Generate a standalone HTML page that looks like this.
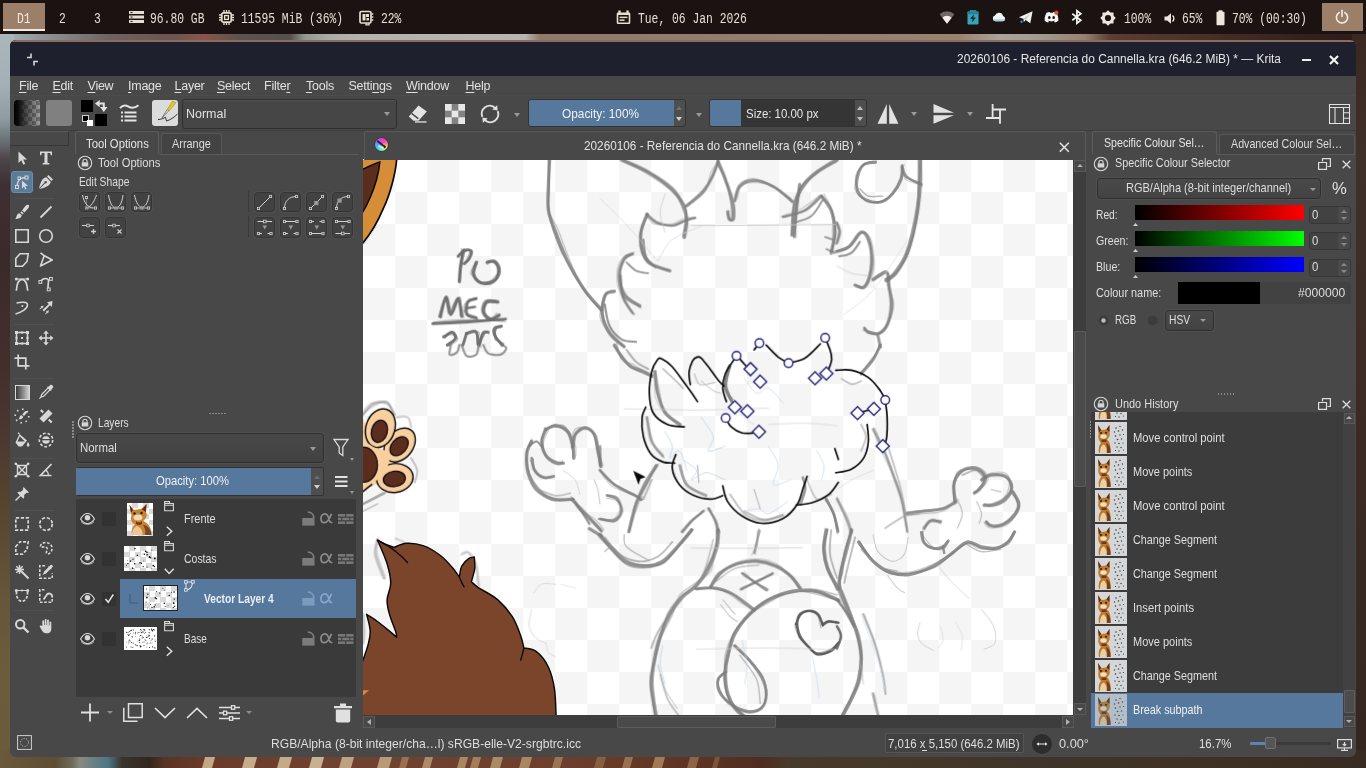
<!DOCTYPE html>
<html>
<head>
<meta charset="utf-8">
<title>Krita</title>
<style>
*{box-sizing:border-box;margin:0;padding:0}
html,body{width:1366px;height:768px;overflow:hidden}
#topbar,#win{will-change:transform}
body{position:relative;background:#3a2a24;font-family:"Liberation Sans",sans-serif;font-size:12px;color:#dedede}
.abs{position:absolute}
svg{position:absolute;overflow:visible}
/* desktop wallpaper pieces */
#wall{position:absolute;left:0;top:0;width:1366px;height:768px;background:#3b2b25}
/* top bar */
#topbar{position:absolute;left:0;top:0;width:1366px;height:34px;background:#1a1311}
.mono{position:absolute;font-family:"Liberation Mono",monospace;font-size:14px;color:#e6ddd3;white-space:pre;transform-origin:0 50%;transform:scaleX(.81);line-height:16px;top:10.500px}
/* window */
#win{position:absolute;left:10px;top:40px;width:1346px;height:717px;background:#484848;border-radius:6px;overflow:hidden}
#titlebar{position:absolute;left:0;top:0;width:1346px;height:36px;background:#1f202e;border-top:2px solid #8a6b5c}
.t{position:absolute;white-space:pre;line-height:16px;font-size:12.500px;letter-spacing:-0.250px}

.menu{position:absolute;top:38px;font-size:12.500px;letter-spacing:-0.250px;line-height:16px;color:#e0e0e0;white-space:pre}
.menu u{text-decoration:underline;text-underline-offset:2px;text-decoration-thickness:1px}
#toolbar{position:absolute;left:0;top:55px;width:1346px;height:36px;border-top:1px solid #4c4c4c}
.tri{position:absolute;width:0;height:0;border-left:3.500px solid transparent;border-right:3.500px solid transparent;border-top:4px solid #9a9a9a}
.combo{position:absolute;background:#464646;border:1px solid #2f2f2f;border-radius:3px;box-shadow:inset 0 1px 0 #535353}
</style>
</head>
<body>
<div id="wall">
  <!-- strip between top bar and window -->
  <div class="abs" style="left:0;top:34px;width:1366px;height:8px;background:linear-gradient(90deg,#aab6bb 0px,#8f979a 40px,#6e625f 110px,#6b5650 170px,#87564b 205px,#5c5250 240px,#54504e 290px,#8f9a92 305px,#a9ada6 330px,#b5b2ab 360px,#b9b5ae 525px,#8f7b6c 540px,#927c6c 683px,#9a8271 960px,#a8a39c 1000px,#a09a92 1040px,#98806f 1085px,#5a3e35 1110px,#4a3029 1200px,#33211d 1300px,#2b1c19 1366px)"></div>
  <!-- left strip -->
  <div class="abs" style="left:0;top:34px;width:14px;height:734px;background:linear-gradient(180deg,#aab6bb 0px,#a3b0b5 50px,#8d9ca2 85px,#6c7479 105px,#4d4549 125px,#3f3033 150px,#3b2a2b 220px,#432e2c 330px,#4b3830 400px,#56452f 470px,#65553a 560px,#6d5c3c 640px,#6b5a3b 734px)"></div>
  <!-- right strip -->
  <div class="abs" style="left:1352px;top:34px;width:14px;height:734px;background:linear-gradient(180deg,#3a2722 0px,#40302a 120px,#3b2a24 400px,#352620 734px)"></div>
  <!-- bottom strip -->
  <div class="abs" style="left:0;top:750px;width:1366px;height:18px;background:linear-gradient(90deg,#6a593a 0px,#5e4d32 55px,#6e6a5c 72px,#8a8a80 80px,#5f7c84 98px,#4e7684 108px,#3a342c 122px,#34261e 150px,#5a3324 165px,#683a27 200px,#704330 330px,#6c402c 560px,#633824 640px,#5c3424 700px,#4e2d20 760px,#483a2a 790px,#44382a 900px,#40352a 1026px,#3e3226 1200px,#382c22 1366px)"></div>
  <svg style="left:0;top:750px" width="1366" height="18" viewBox="0 0 1366 20" preserveAspectRatio="none"><path d="M202 20L207 0H217L212 20z" fill="#dcc8a4" opacity="0.78"/><path d="M242 20L247 0H259L254 20z" fill="#e0cca8" opacity="0.78"/><path d="M277 20L282 0H294L289 20z" fill="#dcc8a4" opacity="0.78"/><path d="M309 20L314 0H326L321 20z" fill="#e2d0ae" opacity="0.78"/><path d="M339 20L344 0H356L351 20z" fill="#d8c29c" opacity="0.74"/><path d="M377 20L382 0H394L389 20z" fill="#d2b890" opacity="0.74"/><path d="M399 20L404 0H411L406 20z" fill="#b8956c" opacity="0.57"/><path d="M422 20L427 0H435L430 20z" fill="#c8aa80" opacity="0.70"/><path d="M457 20L462 0H470L465 20z" fill="#c4a47a" opacity="0.70"/><path d="M470 20L475 0H483L478 20z" fill="#c09e74" opacity="0.66"/><path d="M490 20L495 0H505L500 20z" fill="#c8a880" opacity="0.70"/><path d="M519 20L524 0H534L529 20z" fill="#c4a47a" opacity="0.70"/><path d="M552 20L557 0H565L560 20z" fill="#b8956c" opacity="0.61"/><path d="M594 20L599 0H608L603 20z" fill="#a88460" opacity="0.49"/><path d="M622 20L627 0H635L630 20z" fill="#b8956c" opacity="0.61"/><path d="M652 20L657 0H667L662 20z" fill="#c09e74" opacity="0.66"/><path d="M687 20L692 0H701L696 20z" fill="#b08a64" opacity="0.57"/><path d="M712 20L717 0H722L717 20z" fill="#a07a56" opacity="0.49"/></svg>
</div>
<div id="topbar">
  <div class="abs" style="left:3px;top:3px;width:42px;height:28px;background:#9c7f69;border-bottom:2px solid #f3ece4"></div>
  <span class="mono" style="left:17px;color:#f5e9d8">D1</span>
  <span class="mono" style="left:59px">2</span>
  <span class="mono" style="left:94px">3</span>
  <svg style="left:129px;top:11px" width="15" height="12" viewBox="0 0 15 12"><g fill="#e6ddd3"><rect x="0" y="0" width="15" height="3"/><rect x="0" y="4.5" width="15" height="3"/><rect x="0" y="9" width="15" height="3"/></g><g fill="#1a1311"><rect x="1.5" y="1" width="2" height="1"/><rect x="1.5" y="5.5" width="2" height="1"/><rect x="1.5" y="10" width="2" height="1"/></g></svg>
  <span class="mono" style="left:150px">96.80 GB</span>
  <svg style="left:219px;top:10px" width="15" height="15" viewBox="0 0 15 15"><g fill="none" stroke="#e6ddd3"><rect x="2.8" y="2.8" width="9.4" height="9.4" rx="1.5" stroke-width="1.7"/><rect x="5.6" y="5.6" width="3.8" height="3.8" stroke-width="1.3"/><path d="M5 0v2M7.5 0v2M10 0v2M5 13v2M7.5 13v2M10 13v2M0 5h2M0 7.500h2M0 10h2M13 5h2M13 7.500h2M13 10h2" stroke-width="1.3"/></g></svg>
  <span class="mono" style="left:240.500px">11595 MiB (36%)</span>
  <svg style="left:359px;top:10px" width="15" height="15" viewBox="0 0 15 15"><rect x="1" y="1.500" width="11" height="11.500" rx="1.500" fill="none" stroke="#e6ddd3" stroke-width="1.700"/><rect x="3.500" y="4" width="3" height="6.500" fill="#e6ddd3"/><rect x="7" y="4" width="3" height="3" fill="#e6ddd3"/><rect x="7.500" y="8" width="2.500" height="2.500" fill="#e6ddd3"/><path d="M12.500 4h1.800M12.500 7h1.800M12.500 10h1.800M7 13v1.800h3v-1.800" stroke="#e6ddd3" stroke-width="1.300" fill="none"/></svg>
  <span class="mono" style="left:380.500px">22%</span>
  <svg style="left:616px;top:9.500px" width="15" height="15" viewBox="0 0 15 15"><path d="M2 2.500h11a1.300 1.300 0 0 1 1.300 1.300v9a1.300 1.300 0 0 1-1.300 1.300h-11a1.300 1.300 0 0 1-1.300-1.300v-9a1.300 1.300 0 0 1 1.300-1.300z" fill="#e6ddd3"/><rect x="2.300" y="0.500" width="2.400" height="3" fill="#e6ddd3"/><rect x="10.300" y="0.500" width="2.400" height="3" fill="#e6ddd3"/><rect x="2.300" y="5" width="10.400" height="7.500" fill="#1a1311"/><rect x="3.600" y="6.600" width="7.800" height="1.500" fill="#e6ddd3"/><rect x="3.600" y="9.400" width="5" height="1.500" fill="#e6ddd3"/></svg>
  <span class="mono" style="left:637.500px">Tue, 06 Jan 2026</span>
  <!-- tray icons -->
  <svg style="left:939px;top:9px" width="16" height="16" viewBox="0 0 16 16"><path d="M8 14.800L0.600 5.200A10.500 10.500 0 0 1 15.400 5.200z" fill="#6f6966"/><path d="M8 14.800L3.400 8.800A6.400 6.400 0 0 1 12.600 8.800z" fill="#f2efec"/></svg>
  <svg style="left:967px;top:10px" width="12" height="15" viewBox="0 0 12 15"><rect x="2.800" y="0" width="6.400" height="2.500" fill="#2b7f93"/><rect x="0.500" y="1.600" width="11" height="12.800" rx="0.800" fill="#3aa3bb"/><rect x="0.500" y="1.600" width="11" height="2.600" fill="#2b7f93"/><path d="M6.900 4.300L3 8.800h2.600L4.800 12.600L9 7.600H6.300z" fill="#14272c"/></svg>
  <svg style="left:992px;top:12px" width="14" height="10" viewBox="0 0 14 10"><path d="M3.400 9.200A2.900 2.900 0 0 1 3 3.500A4.200 4.200 0 0 1 11 3.900A2.700 2.700 0 0 1 10.800 9.200z" fill="#f4f6f8"/><path d="M1 7.200A2.900 2.900 0 0 0 3.400 9.200h7.400A2.700 2.700 0 0 0 13.300 7.200z" fill="#a9cdea"/></svg>
  <svg style="left:1018px;top:10.500px" width="15" height="13" viewBox="0 0 15 13"><path d="M0.800 6.300L14.600 0.300L12.300 12.300L7.600 8.900L5.800 11.300L5.400 7.700z" fill="#f1f1f1"/><path d="M5.400 7.700L12.600 2.300L7.600 8.900" fill="#c9c9c9"/><circle cx="3.500" cy="10.800" r="1.200" fill="#3a86e8"/></svg>
  <svg style="left:1044px;top:10.500px" width="15" height="12" viewBox="0 0 15 12"><path d="M2.600 1.800C3.800 1.200 5 0.900 5.600 0.900l0.400 0.800h3l0.400-0.800c0.600 0 1.800 0.300 3 0.900c1.400 2.300 2.200 5 1.900 8c-1.200 1-2.400 1.500-3.500 1.800l-0.800-1.300c0.500-0.200 0.900-0.400 1.300-0.700c-2.400 1.100-5.200 1.100-7.600 0c0.400 0.300 0.800 0.500 1.300 0.700l-0.800 1.300c-1.100-0.300-2.300-0.800-3.500-1.800c-0.300-3 0.500-5.700 1.900-8z" fill="#f4f4f4"/><ellipse cx="5.300" cy="6.600" rx="1.300" ry="1.500" fill="#1a1311"/><ellipse cx="9.700" cy="6.600" rx="1.300" ry="1.500" fill="#1a1311"/><circle cx="12.400" cy="1.700" r="2.100" fill="#e8453c"/></svg>
  <svg style="left:1070.500px;top:10px" width="12" height="14" viewBox="0 0 12 14"><path d="M1.300 3.800L9.800 10.200L5.900 13.300V0.700L9.800 3.800L1.300 10.200" fill="none" stroke="#f4f4f4" stroke-width="1.700" stroke-linejoin="miter"/></svg>
  <svg style="left:1100px;top:9.500px" width="16" height="16" viewBox="0 0 16 16"><path d="M8 0.200L10.300 2.400L13.500 2.500L13.600 5.700L15.800 8L13.600 10.300L13.500 13.500L10.300 13.600L8 15.800L5.700 13.600L2.500 13.500L2.400 10.300L0.200 8L2.400 5.700L2.500 2.500L5.700 2.400z" fill="#ece6df"/><circle cx="8" cy="8" r="3.100" fill="#1a1311"/></svg>
  <svg style="left:1164px;top:12.500px" width="12" height="11" viewBox="0 0 12 11"><path d="M0.500 3.400h2.700L7 0.300v10.400L3.200 7.600H0.500z" fill="#ece6df"/><path d="M8.500 2.500A4 4 0 0 1 8.500 8.500" fill="none" stroke="#ece6df" stroke-width="1.400"/></svg>
  <svg style="left:1216px;top:10px" width="9" height="16" viewBox="0 0 9 16"><rect x="2.500" y="0.300" width="4" height="2" fill="#ece6df"/><rect x="0.500" y="1.800" width="8" height="13.500" rx="0.800" fill="#ece6df"/></svg>
  <span class="mono" style="left:1123.500px">100%</span>
  <span class="mono" style="left:1182px">65%</span>
  <span class="mono" style="left:1231.500px">70% (00:30)</span>
  <div class="abs" style="left:1322px;top:3px;width:41px;height:28px;background:#9c7f69"></div>
  <svg style="left:1334px;top:9px" width="16" height="16" viewBox="0 0 16 16"><path d="M5.200 3.600A5.600 5.600 0 1 0 10.800 3.600" fill="none" stroke="#f5eee6" stroke-width="1.600" stroke-linecap="round"/><path d="M8 1.200v6.300" stroke="#f5eee6" stroke-width="1.600" stroke-linecap="round"/></svg>
</div>
<div id="win">
  <div id="titlebar">
    <svg style="left:16px;top:11px" width="13" height="13" viewBox="0 0 13 13"><path d="M1 4.500h4v-4M12 8.500h-4v4" fill="none" stroke="#d8d8d8" stroke-width="1.600"/></svg>
    <div class="abs" style="left:1291.500px;top:16.500px;width:9px;height:2px;background:#f0f0f0"></div>
    <svg style="left:1319px;top:12.500px" width="10" height="10" viewBox="0 0 10 10"><path d="M1 1L9 9M9 1L1 9" stroke="#f4f4f4" stroke-width="2.200"/></svg>
  </div>
  <!-- menubar -->
  <span class="menu" style="left:9px"><u>F</u>ile</span>
  <span class="menu" style="left:42.500px"><u>E</u>dit</span>
  <span class="menu" style="left:77.500px"><u>V</u>iew</span>
  <span class="menu" style="left:118px"><u>I</u>mage</span>
  <span class="menu" style="left:164.500px"><u>L</u>ayer</span>
  <span class="menu" style="left:207px"><u>S</u>elect</span>
  <span class="menu" style="left:254px">Filte<u>r</u></span>
  <span class="menu" style="left:296px"><u>T</u>ools</span>
  <span class="menu" style="left:338.500px">Setti<u>n</u>gs</span>
  <span class="menu" style="left:396px"><u>W</u>indow</span>
  <span class="menu" style="left:455.500px"><u>H</u>elp</span>
  <div id="toolbar">
    <!-- gradient swatch -->
    <div class="abs" style="left:4px;top:4px;width:26px;height:26px;border-radius:3px;overflow:hidden;background:#9a9a9a">
      <div class="abs" style="left:0;top:0;width:26px;height:26px;background:conic-gradient(#6e6e6e 25%,#9c9c9c 0 50%,#6e6e6e 0 75%,#9c9c9c 0);background-size:8px 8px;background-position:2px 1px"></div>
      <div class="abs" style="left:0;top:0;width:26px;height:26px;background:linear-gradient(90deg,#000 0,#0b0b0b 4px,rgba(20,20,20,.55) 13px,rgba(40,40,40,0) 26px)"></div>
    </div>
    <!-- pattern swatch -->
    <div class="abs" style="left:36px;top:4px;width:26px;height:26px;border-radius:3px;background:#808080"></div>
    <!-- fg/bg -->
    <div class="abs" style="left:71px;top:4px;width:12px;height:12px;background:#000"></div>
    <div class="abs" style="left:85px;top:18px;width:12px;height:12px;background:#000"></div>
    <div class="abs" style="left:71.500px;top:19px;width:7px;height:7px;background:#000;border:1px solid #cfcfcf"></div>
    <div class="abs" style="left:76.500px;top:24px;width:6px;height:6px;background:#fff"></div>
    <svg style="left:84.700px;top:4.200px" width="12.500" height="12.100" viewBox="0 0 12.500 12.100"><path d="M0 3.600L4.700 0V7.200zM5.100 7.100H12.500L8.800 12.100z" fill="#e4e4e4"/><path d="M4.200 3.600H8.800V7.500" fill="none" stroke="#e4e4e4" stroke-width="2"/></svg>
    <!-- brush settings icon -->
    <svg style="left:109px;top:7px" width="21" height="21" viewBox="0 0 21 21"><path d="M1 5.200C4 1.500 6.500 1.800 9.500 3.600S15.500 5.500 19.500 2.200" fill="none" stroke="#e4e4e4" stroke-width="2"/><g fill="#e4e4e4"><rect x="2" y="8.500" width="2" height="2"/><rect x="5.500" y="8.500" width="12" height="2"/><rect x="2" y="12.500" width="2" height="2"/><rect x="5.500" y="12.500" width="12" height="2"/><rect x="2" y="16.500" width="2" height="2"/><rect x="5.500" y="16.500" width="12" height="2"/></g></svg>
    <!-- brush preset -->
    <div class="abs" style="left:142px;top:4px;width:26px;height:26px;border-radius:3px;background:#dcdcdc;overflow:hidden">
      <svg style="left:0;top:0" width="26" height="26" viewBox="0 0 26 26"><path d="M6 19.500C9 19.500 12 18.200 13.500 17.200L14.500 21C18 20 22 17.500 25.500 14" fill="none" stroke="#333" stroke-width="1"/><path d="M10 18L15.200 9.500L17 10.500z" fill="#e9e9e9" stroke="#555" stroke-width="0.700"/><path d="M15.200 9.500L20.500 1L24 2.500L17.200 10.800z" fill="#e2c52c" stroke="#a68d10" stroke-width="0.600"/></svg>
    </div>
    <!-- blend combo -->
    <div class="combo" style="left:172px;top:3px;width:215px;height:30px"></div>
    <div class="tri" style="left:374px;top:16px"></div>
    <!-- eraser -->
    <svg style="left:398px;top:9px" width="20" height="18" viewBox="0 0 20 18"><path d="M10.500 0.500L18.800 6.500L10.500 15.800H5.500L0.800 11.500z" fill="#e4e4e4"/><path d="M3.500 8.400L10.300 13.600" stroke="#484848" stroke-width="1.400"/><rect x="7" y="16.300" width="11.500" height="1.300" fill="#e4e4e4"/></svg>
    <!-- preserve alpha -->
    <div class="abs" style="left:434.500px;top:8px;width:20px;height:20px;background:conic-gradient(#e8e8e8 25%,#828282 0 50%,#e8e8e8 0 75%,#828282 0);background-size:13.330px 13.330px;background-position:6.670px 0"></div>
    <!-- reload -->
    <svg style="left:470px;top:8px" width="20" height="20" viewBox="0 0 20 20"><path d="M2.300 12.800A8 8 0 0 1 15 3.800" fill="none" stroke="#e0e0e0" stroke-width="2"/><path d="M17.700 7.200A8 8 0 0 1 5 16.200" fill="none" stroke="#e0e0e0" stroke-width="2"/><path d="M12.200 5.500L17.200 1.200L17.600 6.500z" fill="#e0e0e0"/><path d="M7.800 14.500L2.800 18.800L2.400 13.500z" fill="#e0e0e0"/></svg>
    <div class="tri" style="left:504px;top:16.500px"></div>
    <!-- opacity slider -->
    <div class="abs" style="left:518px;top:2.500px;width:158px;height:28.500px;border-radius:3px;background:#4e4e4e;border:1px solid #333;overflow:hidden"><div class="abs" style="left:0;top:0;width:145px;height:28px;background:#56789d"></div></div>
    <div class="tri" style="left:666px;top:10px;border-top:none;border-bottom:4px solid #6d6d6d;border-left-width:3px;border-right-width:3px"></div>
    <div class="tri" style="left:666px;top:20.500px;border-top-color:#d0d0d0;border-left-width:3px;border-right-width:3px"></div>
    <div class="tri" style="left:685.500px;top:16.500px"></div>
    <!-- size slider -->
    <div class="abs" style="left:699px;top:2.500px;width:158px;height:28.500px;border-radius:3px;background:#4e4e4e;border:1px solid #333;overflow:hidden"><div class="abs" style="left:0;top:0;width:145px;height:28px;background:#353535"></div><div class="abs" style="left:0;top:0;width:31px;height:28px;background:#56789d"></div></div>
    <div class="tri" style="left:847px;top:10px;border-top:none;border-bottom:4px solid #bdbdbd;border-left-width:3px;border-right-width:3px"></div>
    <div class="tri" style="left:847px;top:20.500px;border-top-color:#bdbdbd;border-left-width:3px;border-right-width:3px"></div>
    <!-- mirror h -->
    <svg style="left:867px;top:8px" width="22" height="20" viewBox="0 0 22 20"><path d="M9.800 0V19.700H0.500zM12.200 0V19.700H21.500z" fill="#e2e2e2"/></svg>
    <div class="tri" style="left:901px;top:15.500px"></div>
    <!-- mirror v -->
    <svg style="left:923px;top:8px" width="22" height="20" viewBox="0 0 22 20"><path d="M0.500 0L21 8.800H0.500zM0.500 19.800L21 11.200H0.500z" fill="#e2e2e2"/></svg>
    <div class="tri" style="left:957px;top:15.500px"></div>
    <!-- wrap -->
    <svg style="left:976px;top:8px" width="20" height="20" viewBox="0 0 20 20"><path d="M6.600 0V14M6.600 5.500H20M14 5.500V19.800M0 14H14" fill="none" stroke="#e6e6e6" stroke-width="1.800"/></svg>
    <!-- workspace -->
    <svg style="left:1318.500px;top:8px" width="21" height="20" viewBox="0 0 21 20"><path d="M0.500 0.500h20v19h-20zM0.500 3.500h20M6 3.500v16M14.500 3.500v16M14.500 8.800h6M14.500 14.200h6" fill="none" stroke="#e2e2e2" stroke-width="1.100"/></svg>
  </div>
  <div id="main" class="abs" style="left:-10px;top:-40px;width:1366px;height:768px">
<!--TOOLBOX-->
<div id="tbline" class="abs" style="left:10px;top:129.500px;width:1346px;height:1px;background:#3e3e3e"></div>
<div class="abs" style="left:363px;top:159.400px;width:710px;height:1px;background:#f8f8f8"></div>
<div id="tbhead" class="abs" style="left:10px;top:130.500px;width:58.500px;height:15px;border-top:1px solid #5a5a5a;border-right:1px solid #363636;border-bottom:1px solid #363636"></div>
<div class="abs" style="left:11px;top:171px;width:22px;height:22px;border-radius:3px;background:#5b7b9b;border:1px solid #6d8cab"></div>
<div class="abs" style="left:14px;top:198px;width:40px;height:1px;background:#515151"></div>
<div class="abs" style="left:14px;top:324px;width:40px;height:1px;background:#515151"></div>
<div class="abs" style="left:14px;top:378px;width:40px;height:1px;background:#515151"></div>
<div class="abs" style="left:14px;top:457.5px;width:40px;height:1px;background:#515151"></div>
<div class="abs" style="left:14px;top:510px;width:40px;height:1px;background:#515151"></div>
<div class="abs" style="left:14px;top:610px;width:40px;height:1px;background:#515151"></div>
<svg style="left:14.0px;top:150.0px" width="16" height="16" viewBox="0 0 16 16"><path d="M4.500 1.500V13L7.300 10.300L9.300 14.700L11.200 13.800L9.200 9.600H13z" fill="#d8d8d8" /></svg>
<svg style="left:38.0px;top:150.0px" width="16" height="16" viewBox="0 0 16 16"><path d="M2 1.500h12v3.800h-1.200l-.600-2.200h-2.700v9.600l1.900.500v1.300h-6.800v-1.300l1.900-.500v-9.600h-2.700l-.600 2.200h-1.200z" fill="#d8d8d8" /></svg>
<svg style="left:14.0px;top:174.0px" width="16" height="16" viewBox="0 0 16 16"><path d="M3 13.500C3 7 5.500 3.500 12.500 3.500" fill="none" stroke="#d8d8d8" stroke-width="1.3" /><g fill="#5b7b9b" stroke="#d8d8d8" stroke-width="1"><rect x="1.500" y="11.500" width="3" height="3"/><rect x="11" y="2" width="3" height="3"/><rect x="4" y="3" width="2.500" height="2.500"/></g><path d="M8 6.500V14.500L10 12.500L11.300 15.500L12.500 15L11.200 12H14z" fill="#d8d8d8" /></svg>
<svg style="left:38.0px;top:174.0px" width="16" height="16" viewBox="0 0 16 16"><path d="M10.500 1L15 5.500L13.500 7L9 2.500zM8.300 3.300L12.700 7.700C12.500 10.500 10 13 1.500 15L7.200 9.300A1.200 1.200 0 1 0 6.500 8.600L1 14.500C3 6 5.500 3.500 8.300 3.300z" fill="#d8d8d8" /></svg>
<svg style="left:14.0px;top:204.0px" width="16" height="16" viewBox="0 0 16 16"><path d="M14.500 1C15.500 1.500 15.300 3 14 4.500L10.500 8.500L8 6.500L11 2.500C12.200 1 13.500 .500 14.500 1zM7.300 7.300L9.700 9.300L8.500 10.500L6.300 8.500zM5.500 9.300L7.800 11.300C7.500 14 4.500 15.300 1 14.800C2.500 13.800 2.300 12.500 3 11C3.500 10 4.500 9.300 5.500 9.300z" fill="#d8d8d8" /></svg>
<svg style="left:38.0px;top:204.0px" width="16" height="16" viewBox="0 0 16 16"><path d="M2.500 13.500L13.500 2.500" fill="none" stroke="#d8d8d8" stroke-width="1.8" /></svg>
<svg style="left:14.0px;top:228.0px" width="16" height="16" viewBox="0 0 16 16"><path d="M1.800 1.800h12.400v12.400h-12.400z" fill="none" stroke="#d8d8d8" stroke-width="1.6" /></svg>
<svg style="left:38.0px;top:228.0px" width="16" height="16" viewBox="0 0 16 16"><circle cx="8" cy="8" r="6.300" fill="none" stroke="#d8d8d8" stroke-width="1.600"/></svg>
<svg style="left:14.0px;top:252.0px" width="16" height="16" viewBox="0 0 16 16"><path d="M1.800 6.500L6 1.800H14.200L13 9.500L8.500 14.200H1.800z" fill="none" stroke="#d8d8d8" stroke-width="1.6" /></svg>
<svg style="left:38.0px;top:252.0px" width="16" height="16" viewBox="0 0 16 16"><path d="M2.500 .800L5.500 3.200L14.200 8L2.500 14L6.300 3.500" fill="none" stroke="#d8d8d8" stroke-width="1.600" stroke-linejoin="round"/></svg>
<svg style="left:14.0px;top:276.0px" width="16" height="16" viewBox="0 0 16 16"><path d="M2.300 14.800C3 5.500 5.500 3.300 8 3.300S13 5.500 13.700 14.800" fill="none" stroke="#d8d8d8" stroke-width="1.700"/><path d="M2.500 3H13.500" stroke="#d8d8d8" stroke-width="1.100"/><circle cx="2.300" cy="3" r="1.500" fill="#d8d8d8"/><circle cx="13.700" cy="3" r="1.500" fill="#d8d8d8"/></svg>
<svg style="left:38.0px;top:276.0px" width="16" height="16" viewBox="0 0 16 16"><path d="M2.500 5.500C5 1.500 11 1.500 10.500 5.500C10 9 9.500 11 10.500 13.500" fill="none" stroke="#d8d8d8" stroke-width="1.7" /><g fill="#484848" stroke="#d8d8d8" stroke-width="1"><rect x="1" y="4.500" width="2.800" height="2.800"/><rect x="11.500" y="1.500" width="2.800" height="2.800"/><rect x="9.300" y="12" width="2.800" height="2.800"/></g></svg>
<svg style="left:14.0px;top:300.0px" width="16" height="16" viewBox="0 0 16 16"><path d="M1.500 14C7 12.500 13.500 9 13.500 5C13.500 1.500 7 2 2.500 3" fill="none" stroke="#d8d8d8" stroke-width="1.5" /><circle cx="8.300" cy="6" r="1" fill="#d8d8d8"/></svg>
<svg style="left:38.0px;top:300.0px" width="16" height="16" viewBox="0 0 16 16"><path d="M14.500 1L13.800 7L12 5.200L6 11.500L4.500 10L10.800 4L9 2.200zM2.500 6.500L5.500 5.500L5 8.500L4.200 7.800L2 9.500L1.500 9L3.200 7.200zM8 11L11 10.500L10 13.500L9.200 12.700L7.500 14.500L7 14L8.700 12z" fill="#d8d8d8" /></svg>
<svg style="left:14.0px;top:330.0px" width="16" height="16" viewBox="0 0 16 16"><path d="M2.500 2.500h11v11h-11z" fill="none" stroke="#d8d8d8" stroke-width="1.5" /><g fill="#d8d8d8"><rect x="1" y="1" width="3" height="3"/><rect x="12" y="1" width="3" height="3"/><rect x="1" y="12" width="3" height="3"/><rect x="12" y="12" width="3" height="3"/><rect x="7" y="7" width="2" height="2"/><rect x="6.700" y="1.500" width="2.600" height="2"/><rect x="6.700" y="12.500" width="2.600" height="2"/><rect x="1.500" y="6.700" width="2" height="2.600"/><rect x="12.500" y="6.700" width="2" height="2.600"/></g></svg>
<svg style="left:38.0px;top:330.0px" width="16" height="16" viewBox="0 0 16 16"><path d="M8 .500L10.800 3.800H8.800V7.200H12.200V5.200L15.500 8L12.200 10.800V8.800H8.800V12.200H10.800L8 15.500L5.200 12.200H7.200V8.800H3.800V10.800L.500 8L3.800 5.200V7.200H7.200V3.800H5.200z" fill="#d8d8d8" /></svg>
<svg style="left:14.0px;top:354.0px" width="16" height="16" viewBox="0 0 16 16"><path d="M4.200 .500V11.800H15.500M.500 4.200H11.800V15.500" fill="none" stroke="#d8d8d8" stroke-width="1.7" /></svg>
<div class="abs" style="left:14.500px;top:384.500px;width:15px;height:15px;border:1.300px solid #d8d8d8;background:linear-gradient(90deg,#3a3a3a,#d0d0d0)"></div>
<svg style="left:38.0px;top:384.0px" width="16" height="16" viewBox="0 0 16 16"><path d="M12.500 .800C13.800 .200 15.800 2.200 15.200 3.500L13.300 5.500L13.800 6L12.800 7L12.200 6.500L6 12.800L3.500 13.500L1.500 15L1 14.500L2.500 12.500L3.200 10L9.500 3.800L9 3.200L10 2.200L10.500 2.700zM10.200 4.800L4.300 10.700L3.800 12.200L5.300 11.700L11.200 5.800z" fill="#d8d8d8" /></svg>
<svg style="left:14.0px;top:408.0px" width="16" height="16" viewBox="0 0 16 16"><path d="M12.500 3C13.300 3.300 13.200 4.300 12.500 5.200L10 8L8.300 6.600L10.500 3.800C11.200 3 12 2.700 12.500 3zM7.600 7.300L9.300 8.700C9.100 10.500 7 11.500 4.500 11.200C5.500 10.500 5.400 9.600 5.800 8.600C6.200 7.800 7 7.300 7.600 7.300z" fill="#d8d8d8" /><circle cx="8" cy="8" r="6.800" fill="none" stroke="#d8d8d8" stroke-width="1.600" stroke-dasharray="1.600 3.700"/></svg>
<svg style="left:38.0px;top:408.0px" width="16" height="16" viewBox="0 0 16 16"><path d="M10.500 1.500L14.500 5.500L5.500 14.500L1.500 10.500z" fill="#d8d8d8" /><path d="M2 2.800L3.500 1.300L6 3.800L4.500 5.300zM10 12.200L11.500 10.700L14.500 13.700L13 15.200z" fill="#d8d8d8" /></svg>
<svg style="left:14.0px;top:432.0px" width="16" height="16" viewBox="0 0 16 16"><path d="M5.500 2L13 8.500L8 14.500H4.500L1.500 10.500zM5.800 4.300L3.500 9.500H10.800z" fill="#d8d8d8" fill-rule="evenodd"/><path d="M5.500 2L4 .800" fill="none" stroke="#d8d8d8" stroke-width="1.3" /><path d="M14 10C15 11.500 15.500 12.500 15.500 13.300A1.400 1.400 0 0 1 12.700 13.300C12.700 12.500 13.200 11.500 14 10z" fill="#d8d8d8" /></svg>
<svg style="left:38.0px;top:432.0px" width="16" height="16" viewBox="0 0 16 16"><circle cx="8" cy="8" r="6.700" fill="none" stroke="#d8d8d8" stroke-width="1.600" stroke-dasharray="2.800 1.900"/><circle cx="8" cy="8" r="3.800" fill="#d8d8d8"/><rect x="4" y="7" width="8" height="1.300" fill="#484848"/></svg>
<svg style="left:14.0px;top:462.0px" width="16" height="16" viewBox="0 0 16 16"><path d="M3.500 3.500h9v9h-9zM1.500 1.500L14.500 14.500M14.500 1.500L1.500 14.500" fill="none" stroke="#d8d8d8" stroke-width="1.4" /><g fill="#d8d8d8"><circle cx="1.800" cy="1.800" r="1.300"/><circle cx="14.200" cy="1.800" r="1.300"/><circle cx="1.800" cy="14.200" r="1.300"/><circle cx="14.200" cy="14.200" r="1.300"/></g></svg>
<svg style="left:38.0px;top:462.0px" width="16" height="16" viewBox="0 0 16 16"><path d="M13.500 2L2.500 13.500H13.500" fill="none" stroke="#d8d8d8" stroke-width="1.7" /><path d="M8 8A7.500 7.500 0 0 1 10.500 13.500" fill="none" stroke="#d8d8d8" stroke-width="1.4" /></svg>
<svg style="left:14.0px;top:486.0px" width="16" height="16" viewBox="0 0 16 16"><path d="M9.500 1L15 6.500L13.800 7L12.500 6.800L10 9.300C10.500 10.800 10.200 12 9.500 12.800L6.800 10.200L2 15L1 14L5.800 9.200L3.200 6.500C4 5.800 5.200 5.500 6.700 6L9.200 3.500L9 2.200z" fill="#d8d8d8" /></svg>
<svg style="left:14.0px;top:516.0px" width="16" height="16" viewBox="0 0 16 16"><path d="M1.800 1.800h12.400v12.400h-12.400z" fill="none" stroke="#d8d8d8" stroke-width="1.7" stroke-dasharray="3.300 1.660"/></svg>
<svg style="left:38.0px;top:516.0px" width="16" height="16" viewBox="0 0 16 16"><circle cx="8" cy="8" r="6.300" fill="none" stroke="#d8d8d8" stroke-width="1.700" stroke-dasharray="3.200 1.750"/></svg>
<svg style="left:14.0px;top:540.0px" width="16" height="16" viewBox="0 0 16 16"><path d="M1.800 6.500L6 1.800H14.200L13 9.500L8.500 14.200H1.800z" fill="none" stroke="#d8d8d8" stroke-width="1.7" stroke-dasharray="3 1.700"/></svg>
<svg style="left:38.0px;top:540.0px" width="16" height="16" viewBox="0 0 16 16"><path d="M2.500 6.500C2 1.500 13.500 .500 14 8C14.300 13 9.500 15 8.500 13.500C7.500 11.500 11 9.500 8.500 7.500C6.500 6 4.500 8 2.500 6.500" fill="none" stroke="#d8d8d8" stroke-width="1.6" stroke-dasharray="2.700 1.600"/></svg>
<svg style="left:14.0px;top:564.0px" width="16" height="16" viewBox="0 0 16 16"><path d="M7 7L14.500 14.500" fill="none" stroke="#d8d8d8" stroke-width="2" /><path d="M5.500 1V10M1 5.500H10M2.300 2.300L8.700 8.700M8.700 2.300L2.300 8.700" fill="none" stroke="#d8d8d8" stroke-width="1.4" /></svg>
<svg style="left:38.0px;top:564.0px" width="16" height="16" viewBox="0 0 16 16"><path d="M7 1.800H1.800V14.200H14.200V9" fill="none" stroke="#d8d8d8" stroke-width="1.6" stroke-dasharray="2.700 1.600"/><path d="M12.800 .800C13.800 .300 15.300 1.800 14.800 2.800L13.300 4.300L13.700 4.700L13 5.400L12.500 5L7.800 9.700L6 10.200L5 11L4.600 10.600L5.400 9.600L5.900 7.800L10.600 3.100L10.200 2.700L10.900 2L11.300 2.400z" fill="#d8d8d8" /></svg>
<svg style="left:14.0px;top:588.0px" width="16" height="16" viewBox="0 0 16 16"><path d="M2.500 3.500C1.500 16.500 14.500 16.500 13.500 3.500" fill="none" stroke="#d8d8d8" stroke-width="1.7" stroke-dasharray="2.800 1.600"/><path d="M2.500 2.500H13.500" fill="none" stroke="#d8d8d8" stroke-width="1.2" /><circle cx="2.300" cy="2.500" r="1.500" fill="#d8d8d8"/><circle cx="13.700" cy="2.500" r="1.500" fill="#d8d8d8"/><circle cx="8" cy="2.500" r="1.100" fill="#d8d8d8"/></svg>
<svg style="left:38.0px;top:588.0px" width="16" height="16" viewBox="0 0 16 16"><path d="M6.500 1.800H1.800V14.200H14.200V10" fill="none" stroke="#d8d8d8" stroke-width="1.6" stroke-dasharray="2.700 1.600"/><path d="M5.500 11.500L9 6.500A3 3 0 0 1 14 9.500" fill="none" stroke="#d8d8d8" stroke-width="1.8" /></svg>
<svg style="left:14.0px;top:618.0px" width="16" height="16" viewBox="0 0 16 16"><circle cx="6.200" cy="6.200" r="4.200" fill="none" stroke="#d8d8d8" stroke-width="2"/><path d="M9.300 9.300L14.500 14.500" fill="none" stroke="#d8d8d8" stroke-width="2.4" /></svg>
<svg style="left:38.0px;top:618.0px" width="16" height="16" viewBox="0 0 16 16"><path d="M4.300 8V3.200A.900 .900 0 0 1 6.100 3.200V7H6.700V1.800A.900 .900 0 0 1 8.500 1.800V7H9.100V2.500A.900 .900 0 0 1 10.900 2.500V7.500H11.500V4.500A.900 .900 0 0 1 13.300 4.500V11C13.300 13.500 11.800 15.200 9.500 15.200H8C6 15.200 5 14.200 3.800 12.200L1.800 8.800A1 1 0 0 1 3.500 7.800z" fill="#d8d8d8" /></svg>
<!--/TOOLBOX-->
<!--LEFTDOCK-->
<div class="abs" style="left:75px;top:131px;width:84px;height:23px;background:#484848;border:1px solid #5c5c5c;border-bottom:none;border-radius:3px 3px 0 0"></div>
<div class="abs" style="left:161px;top:133px;width:61px;height:21px;background:#434343;border:1px solid #575757;border-bottom:none;border-radius:3px 3px 0 0"></div>
<div class="abs" style="left:159px;top:153.5px;width:200px;height:1px;background:#5a5a5a"></div>
<svg style="left:85.7px;top:133.5px" width="62.8" height="20"><text x="0" y="14" font-size="13" fill="#e4e4e4" font-weight="normal" textLength="62.8" lengthAdjust="spacingAndGlyphs">Tool Options</text></svg>
<svg style="left:172.0px;top:133.8px" width="38.8" height="20"><text x="0" y="14" font-size="13" fill="#dcdcdc" font-weight="normal" textLength="38.8" lengthAdjust="spacingAndGlyphs">Arrange</text></svg>
<svg style="left:76.5px;top:155.4px" width="16" height="16" viewBox="0 0 16 16"><circle cx="8" cy="8" r="6.700" fill="none" stroke="#d4d4d4" stroke-width="1.100"/><rect x="4.700" y="7.300" width="6.600" height="4.300" rx=".5" fill="#d4d4d4"/><path d="M5.900 7.500V6.400A2.100 2.100 0 0 1 10.100 6.400V7.500" fill="none" stroke="#d4d4d4" stroke-width="1.100"/></svg>
<svg style="left:98.3px;top:153.2px" width="62.3" height="20"><text x="0" y="14" font-size="13" fill="#dedede" font-weight="normal" textLength="62.3" lengthAdjust="spacingAndGlyphs">Tool Options</text></svg>
<svg style="left:78.6px;top:171.8px" width="50.4" height="20"><text x="0" y="14" font-size="13" fill="#dedede" font-weight="normal" textLength="50.4" lengthAdjust="spacingAndGlyphs">Edit Shape</text></svg>
<div class="abs" style="left:78.5px;top:191.7px;width:21.5px;height:20.5px;background:#424242;border:1px solid #343434;border-radius:3.500px;box-shadow:0 0 0 .6px #555"></div>
<div class="abs" style="left:104.7px;top:191.7px;width:21.5px;height:20.5px;background:#424242;border:1px solid #343434;border-radius:3.500px;box-shadow:0 0 0 .6px #555"></div>
<div class="abs" style="left:130.8px;top:191.7px;width:21.5px;height:20.5px;background:#424242;border:1px solid #343434;border-radius:3.500px;box-shadow:0 0 0 .6px #555"></div>
<svg style="left:78.5px;top:191.7px" width="21.5" height="20.5" viewBox="0 0 21.5 20.5"><path d="M3.500 3C5 10 8 15.500 14.500 16" fill="none" stroke="#d0d0d0" stroke-width="1"/><path d="M17.500 3C15 10 12 14.500 8 16" fill="none" stroke="#d0d0d0" stroke-width="1"/><path d="M7.500 5.500V15M7.500 16H15" stroke="#d0d0d0" stroke-width=".8" stroke-dasharray="1 1"/><rect x="6.4" y="4.4" width="2.2" height="2.2" fill="#424242" stroke="#d0d0d0" stroke-width=".8"/><rect x="15.4" y="14.9" width="2.2" height="2.2" fill="#424242" stroke="#d0d0d0" stroke-width=".8"/><rect x="6" y="14.500" width="3.500" height="3" fill="#999"/></svg>
<svg style="left:104.7px;top:191.7px" width="21.5" height="20.5" viewBox="0 0 21.5 20.5"><path d="M3.500 3C5 12 8 16 10.800 16S17 12 18 3" fill="none" stroke="#d0d0d0" stroke-width="1"/><path d="M4.500 16H17" stroke="#d0d0d0" stroke-width=".8"/><rect x="3.4" y="14.9" width="2.2" height="2.2" fill="#424242" stroke="#d0d0d0" stroke-width=".8"/><rect x="16.4" y="14.9" width="2.2" height="2.2" fill="#424242" stroke="#d0d0d0" stroke-width=".8"/><rect x="9" y="14.500" width="4" height="3" fill="#999"/></svg>
<svg style="left:130.8px;top:191.7px" width="21.5" height="20.5" viewBox="0 0 21.5 20.5"><path d="M3.500 3C5 11 8 15 10.800 15.500C14 15 17 11 18 3" fill="none" stroke="#d0d0d0" stroke-width="1"/><path d="M4.500 16H17" stroke="#d0d0d0" stroke-width=".8"/><rect x="3.4" y="14.9" width="2.2" height="2.2" fill="#424242" stroke="#d0d0d0" stroke-width=".8"/><rect x="16.4" y="14.9" width="2.2" height="2.2" fill="#424242" stroke="#d0d0d0" stroke-width=".8"/><path d="M8.500 17.500L10.800 13.500L13 17.500z" fill="#999"/></svg>
<div class="abs" style="left:78.5px;top:217px;width:21.5px;height:20.5px;background:#424242;border:1px solid #343434;border-radius:3.500px;box-shadow:0 0 0 .6px #555"></div>
<div class="abs" style="left:104.7px;top:217px;width:21.5px;height:20.5px;background:#424242;border:1px solid #343434;border-radius:3.500px;box-shadow:0 0 0 .6px #555"></div>
<svg style="left:78.5px;top:217px" width="21.5" height="20.5" viewBox="0 0 21.5 20.5"><path d="M3 8.500H15" stroke="#d0d0d0" stroke-width="1"/><rect x="7.7" y="7.2" width="2.6" height="2.6" fill="#424242" stroke="#d0d0d0" stroke-width=".8"/><path d="M12 14.500h5M14.500 12v5" stroke="#d0d0d0" stroke-width="1.300"/></svg>
<svg style="left:104.7px;top:217px" width="21.5" height="20.5" viewBox="0 0 21.5 20.5"><path d="M3 8.500H15" stroke="#d0d0d0" stroke-width="1"/><rect x="7.7" y="7.2" width="2.6" height="2.6" fill="#424242" stroke="#d0d0d0" stroke-width=".8"/><path d="M12.500 12.500l4 4M16.500 12.500l-4 4" stroke="#d0d0d0" stroke-width="1.100"/></svg>
<div class="abs" style="left:248px;top:191px;width:1px;height:21px;background:#3a3a3a"></div>
<div class="abs" style="left:248px;top:216px;width:1px;height:21px;background:#3a3a3a"></div>
<div class="abs" style="left:253.7px;top:191.7px;width:21.5px;height:20.5px;background:#424242;border:1px solid #343434;border-radius:3.500px;box-shadow:0 0 0 .6px #555"></div>
<div class="abs" style="left:253.7px;top:217px;width:21.5px;height:20.5px;background:#424242;border:1px solid #343434;border-radius:3.500px;box-shadow:0 0 0 .6px #555"></div>
<div class="abs" style="left:279.6px;top:191.7px;width:21.5px;height:20.5px;background:#424242;border:1px solid #343434;border-radius:3.500px;box-shadow:0 0 0 .6px #555"></div>
<div class="abs" style="left:279.6px;top:217px;width:21.5px;height:20.5px;background:#424242;border:1px solid #343434;border-radius:3.500px;box-shadow:0 0 0 .6px #555"></div>
<div class="abs" style="left:305.6px;top:191.7px;width:21.5px;height:20.5px;background:#424242;border:1px solid #343434;border-radius:3.500px;box-shadow:0 0 0 .6px #555"></div>
<div class="abs" style="left:305.6px;top:217px;width:21.5px;height:20.5px;background:#424242;border:1px solid #343434;border-radius:3.500px;box-shadow:0 0 0 .6px #555"></div>
<div class="abs" style="left:331.6px;top:191.7px;width:21.5px;height:20.5px;background:#424242;border:1px solid #343434;border-radius:3.500px;box-shadow:0 0 0 .6px #555"></div>
<div class="abs" style="left:331.6px;top:217px;width:21.5px;height:20.5px;background:#424242;border:1px solid #343434;border-radius:3.500px;box-shadow:0 0 0 .6px #555"></div>
<svg style="left:253.7px;top:191.7px" width="21.5" height="20.5" viewBox="0 0 21.5 20.5"><path d="M4.500 16.500L16.500 4.500" stroke="#d0d0d0" stroke-width="1"/><rect x="3.4" y="15.4" width="2.2" height="2.2" fill="#424242" stroke="#d0d0d0" stroke-width=".8"/><rect x="15.4" y="3.4" width="2.2" height="2.2" fill="#424242" stroke="#d0d0d0" stroke-width=".8"/></svg>
<svg style="left:279.6px;top:191.7px" width="21.5" height="20.5" viewBox="0 0 21.5 20.5"><path d="M4.500 16.500C4.500 9 9 4.500 16.500 4.500" fill="none" stroke="#d0d0d0" stroke-width="1"/><rect x="3.4" y="15.4" width="2.2" height="2.2" fill="#424242" stroke="#d0d0d0" stroke-width=".8"/><rect x="15.4" y="3.4" width="2.2" height="2.2" fill="#424242" stroke="#d0d0d0" stroke-width=".8"/></svg>
<svg style="left:305.6px;top:191.7px" width="21.5" height="20.5" viewBox="0 0 21.5 20.5"><path d="M4.500 16.500L16.500 4.500" stroke="#d0d0d0" stroke-width="1"/><rect x="3.4" y="15.4" width="2.2" height="2.2" fill="#424242" stroke="#d0d0d0" stroke-width=".8"/><rect x="15.4" y="3.4" width="2.2" height="2.2" fill="#424242" stroke="#d0d0d0" stroke-width=".8"/><rect x="8.200" y="9" width="4.200" height="4.200" fill="#999"/></svg>
<svg style="left:331.6px;top:191.7px" width="21.5" height="20.5" viewBox="0 0 21.5 20.5"><path d="M4.500 16.500C4.500 9 9 4.500 16.500 4.500" fill="none" stroke="#d0d0d0" stroke-width="1"/><rect x="3.4" y="15.4" width="2.2" height="2.2" fill="#424242" stroke="#d0d0d0" stroke-width=".8"/><rect x="15.4" y="3.4" width="2.2" height="2.2" fill="#424242" stroke="#d0d0d0" stroke-width=".8"/><rect x="5.500" y="6.500" width="4.200" height="4.200" fill="#999"/></svg>
<svg style="left:253.7px;top:217px" width="21.5" height="20.5" viewBox="0 0 21.5 20.5"><path d="M3.500 4.5H18" stroke="#d0d0d0" stroke-width="1"/><rect x="9.5" y="3.2" width="2.6" height="2.6" fill="#424242" stroke="#d0d0d0" stroke-width=".8"/><path d="M8.500 8.500h4.600L10.800 12.500z" fill="#999"/><path d="M4.500 16.5H8M13.500 16.5H17" stroke="#d0d0d0" stroke-width="1"/><rect x="3.4" y="15.4" width="2.2" height="2.2" fill="#424242" stroke="#d0d0d0" stroke-width=".8"/><rect x="15.9" y="15.4" width="2.2" height="2.2" fill="#424242" stroke="#d0d0d0" stroke-width=".8"/></svg>
<svg style="left:279.6px;top:217px" width="21.5" height="20.5" viewBox="0 0 21.5 20.5"><path d="M4.500 4.5H17" stroke="#d0d0d0" stroke-width="1"/><rect x="3.4" y="3.4" width="2.2" height="2.2" fill="#424242" stroke="#d0d0d0" stroke-width=".8"/><rect x="15.9" y="3.4" width="2.2" height="2.2" fill="#424242" stroke="#d0d0d0" stroke-width=".8"/><path d="M8.500 8.500h4.600L10.800 12.500z" fill="#999"/><path d="M4.500 16.5H8M13.500 16.5H17" stroke="#d0d0d0" stroke-width="1"/><rect x="3.4" y="15.4" width="2.2" height="2.2" fill="#424242" stroke="#d0d0d0" stroke-width=".8"/><rect x="15.9" y="15.4" width="2.2" height="2.2" fill="#424242" stroke="#d0d0d0" stroke-width=".8"/></svg>
<svg style="left:305.6px;top:217px" width="21.5" height="20.5" viewBox="0 0 21.5 20.5"><path d="M4.500 4.5H8M13.500 4.5H17" stroke="#d0d0d0" stroke-width="1"/><rect x="3.4" y="3.4" width="2.2" height="2.2" fill="#424242" stroke="#d0d0d0" stroke-width=".8"/><rect x="15.9" y="3.4" width="2.2" height="2.2" fill="#424242" stroke="#d0d0d0" stroke-width=".8"/><path d="M8.500 8.500h4.600L10.800 12.500z" fill="#999"/><path d="M4.500 16.5H17" stroke="#d0d0d0" stroke-width="1"/><rect x="3.4" y="15.4" width="2.2" height="2.2" fill="#424242" stroke="#d0d0d0" stroke-width=".8"/><rect x="15.9" y="15.4" width="2.2" height="2.2" fill="#424242" stroke="#d0d0d0" stroke-width=".8"/></svg>
<svg style="left:331.6px;top:217px" width="21.5" height="20.5" viewBox="0 0 21.5 20.5"><path d="M4.500 4.5H17" stroke="#d0d0d0" stroke-width="1"/><rect x="3.4" y="3.4" width="2.2" height="2.2" fill="#424242" stroke="#d0d0d0" stroke-width=".8"/><rect x="15.9" y="3.4" width="2.2" height="2.2" fill="#424242" stroke="#d0d0d0" stroke-width=".8"/><path d="M8.500 8.500h4.600L10.800 12.500z" fill="#999"/><path d="M3.500 16.5H18" stroke="#d0d0d0" stroke-width="1"/><rect x="9.5" y="15.2" width="2.6" height="2.6" fill="#424242" stroke="#d0d0d0" stroke-width=".8"/></svg>
<div class="abs" style="left:209px;top:412.5px;width:17px;height:1.5px;background:repeating-linear-gradient(90deg,#8a8a8a 0,#8a8a8a 1.500px,transparent 1.500px,transparent 3px)"></div>
<div class="abs" style="left:72px;top:421px;width:1.5px;height:18px;background:repeating-linear-gradient(180deg,#8a8a8a 0,#8a8a8a 1.500px,transparent 1.500px,transparent 3px)"></div>
<svg style="left:76.5px;top:415.2px" width="16" height="16" viewBox="0 0 16 16"><circle cx="8" cy="8" r="6.700" fill="none" stroke="#d4d4d4" stroke-width="1.100"/><rect x="4.700" y="7.300" width="6.600" height="4.300" rx=".5" fill="#d4d4d4"/><path d="M5.900 7.500V6.400A2.100 2.100 0 0 1 10.100 6.400V7.500" fill="none" stroke="#d4d4d4" stroke-width="1.100"/></svg>
<svg style="left:98.3px;top:413.0px" width="30.7" height="20"><text x="0" y="14" font-size="13" fill="#dedede" font-weight="normal" textLength="30.7" lengthAdjust="spacingAndGlyphs">Layers</text></svg>
<div class="abs" style="left:76px;top:433px;width:247.5px;height:30px;background:linear-gradient(#484848,#424242);border:1px solid #2e2e2e;border-radius:3.500px;box-shadow:0 0 0 .6px #585858"></div>
<svg style="left:80.0px;top:437.8px" width="36.8" height="20"><text x="0" y="14" font-size="13" fill="#dedede" font-weight="normal" textLength="36.8" lengthAdjust="spacingAndGlyphs">Normal</text></svg>
<div class="tri" style="left:309.500px;top:446.500px"></div>
<svg style="left:333px;top:438px" width="16" height="20" viewBox="0 0 16 20"><path d="M1 1.500H15L9.800 9V17.500L6.200 15V9z" fill="none" stroke="#dcdcdc" stroke-width="1.300"/></svg>
<div class="tri" style="left:350px;top:457.500px;border-left-width:2.500px;border-right-width:2.500px;border-top-width:3px"></div>
<div class="abs" style="left:76px;top:467px;width:247.5px;height:28.5px;background:#4e4e4e;border:1px solid #333;border-radius:2px;overflow:hidden"></div>
<div class="abs" style="left:76px;top:467.5px;width:234.5px;height:27.5px;background:#56789d"></div>
<svg style="left:156.3px;top:470.7px" width="73.1" height="20"><text x="0" y="14" font-size="13" fill="#f0f0f0" font-weight="normal" textLength="73.1" lengthAdjust="spacingAndGlyphs">Opacity:  100%</text></svg>
<div class="tri" style="left:313.500px;top:474.500px;border-top:none;border-bottom:4px solid #6b6b6b;border-left-width:3px;border-right-width:3px"></div>
<div class="tri" style="left:313.500px;top:485px;border-top-color:#cfcfcf;border-left-width:3px;border-right-width:3px"></div>
<svg style="left:335px;top:476px" width="13" height="11" viewBox="0 0 13 11"><path d="M0 1h12.500M0 5.500h12.500M0 10h12.500" stroke="#e2e2e2" stroke-width="1.800"/></svg>
<div class="tri" style="left:350px;top:490.500px;border-left-width:2.500px;border-right-width:2.500px;border-top-width:3px"></div>
<div class="abs" style="left:76px;top:498.5px;width:280px;height:198.5px;background:#3a3a3a"></div>
<div class="abs" style="left:120px;top:579px;width:236px;height:38.5px;background:#56789d"></div>
<svg style="left:79.7px;top:512px" width="15" height="14" viewBox="0 0 15 14"><path d="M.5 7C3 2.500 5.500 1.500 7.500 1.500S12 2.500 14.500 7C12 10.500 9.500 11.500 7.500 11.500S3 10.500 .5 7z" fill="none" stroke="#d9d9d9" stroke-width="1.100"/><circle cx="7.500" cy="5.800" r="2.700" fill="#d9d9d9"/><path d="M1 9.500C4 13.200 11 13.200 14 9.500" fill="none" stroke="#d9d9d9" stroke-width=".9"/></svg>
<div class="abs" style="left:102.3px;top:511.5px;width:14px;height:14px;background:#323232;border-radius:1px"></div>
<svg style="left:301.6px;top:510.5px" width="13" height="15" viewBox="0 0 13 15"><rect x="0.300" y="7" width="12.200" height="7.600" fill="#7c7c7c"/><path d="M5.800 1.200C9.500 1 11.800 3.500 11.800 7.500" fill="none" stroke="#7c7c7c" stroke-width="1.700"/></svg>
<svg style="left:320px;top:513.3px" width="13" height="11" viewBox="0 0 13 11"><path d="M11.500 .800C10 4.500 8 9.700 4.600 9.700C2.200 9.700 .900 7.800 .900 5.600C.900 2.800 2.600 .900 5 .900C7.800 .900 8.800 4.800 9.400 7.500C9.800 9.200 10.600 9.800 12.300 9.400" fill="none" stroke="#8c8c8c" stroke-width="1.700"/></svg>
<svg style="left:337.6px;top:514px" width="15.5" height="10" viewBox="0 0 15.5 10"><g fill="#777"><rect x="0" y="0" width="7.200" height="2.600"/><rect x="8.300" y="0" width="7.200" height="2.600"/><rect x="0" y="3.700" width="3.200" height="2.600"/><rect x="4.200" y="3.700" width="7.200" height="2.600"/><rect x="12.300" y="3.700" width="3.200" height="2.600"/><rect x="0" y="7.400" width="7.200" height="2.600"/><rect x="8.300" y="7.400" width="7.200" height="2.600"/></g></svg>
<svg style="left:79.7px;top:552px" width="15" height="14" viewBox="0 0 15 14"><path d="M.5 7C3 2.500 5.500 1.500 7.500 1.500S12 2.500 14.500 7C12 10.500 9.500 11.500 7.500 11.500S3 10.500 .5 7z" fill="none" stroke="#d9d9d9" stroke-width="1.100"/><circle cx="7.500" cy="5.800" r="2.700" fill="#d9d9d9"/><path d="M1 9.500C4 13.200 11 13.200 14 9.500" fill="none" stroke="#d9d9d9" stroke-width=".9"/></svg>
<div class="abs" style="left:102.3px;top:551.5px;width:14px;height:14px;background:#323232;border-radius:1px"></div>
<svg style="left:301.6px;top:550.5px" width="13" height="15" viewBox="0 0 13 15"><rect x="0.300" y="7" width="12.200" height="7.600" fill="#7c7c7c"/><path d="M5.800 1.200C9.500 1 11.800 3.500 11.800 7.500" fill="none" stroke="#7c7c7c" stroke-width="1.700"/></svg>
<svg style="left:320px;top:553.3px" width="13" height="11" viewBox="0 0 13 11"><path d="M11.500 .800C10 4.500 8 9.700 4.600 9.700C2.200 9.700 .900 7.800 .900 5.600C.900 2.800 2.600 .900 5 .900C7.800 .900 8.800 4.800 9.400 7.500C9.800 9.200 10.600 9.800 12.300 9.400" fill="none" stroke="#8c8c8c" stroke-width="1.700"/></svg>
<svg style="left:337.6px;top:554px" width="15.5" height="10" viewBox="0 0 15.5 10"><g fill="#777"><rect x="0" y="0" width="7.200" height="2.600"/><rect x="8.300" y="0" width="7.200" height="2.600"/><rect x="0" y="3.700" width="3.200" height="2.600"/><rect x="4.200" y="3.700" width="7.200" height="2.600"/><rect x="12.300" y="3.700" width="3.200" height="2.600"/><rect x="0" y="7.400" width="7.200" height="2.600"/><rect x="8.300" y="7.400" width="7.200" height="2.600"/></g></svg>
<svg style="left:79.7px;top:592px" width="15" height="14" viewBox="0 0 15 14"><path d="M.5 7C3 2.500 5.500 1.500 7.500 1.500S12 2.500 14.500 7C12 10.500 9.500 11.500 7.500 11.500S3 10.500 .5 7z" fill="none" stroke="#d9d9d9" stroke-width="1.100"/><circle cx="7.500" cy="5.800" r="2.700" fill="#d9d9d9"/><path d="M1 9.500C4 13.200 11 13.200 14 9.500" fill="none" stroke="#d9d9d9" stroke-width=".9"/></svg>
<div class="abs" style="left:102.3px;top:591.5px;width:14px;height:14px;background:#323232;border-radius:1px"></div>
<svg style="left:301.6px;top:590.5px" width="13" height="15" viewBox="0 0 13 15"><rect x="0.300" y="7" width="12.200" height="7.600" fill="#7d9cbd"/><path d="M5.800 1.200C9.500 1 11.800 3.500 11.800 7.500" fill="none" stroke="#7d9cbd" stroke-width="1.700"/></svg>
<svg style="left:320px;top:593.3px" width="13" height="11" viewBox="0 0 13 11"><path d="M11.500 .800C10 4.500 8 9.700 4.600 9.700C2.200 9.700 .900 7.800 .900 5.600C.900 2.800 2.600 .900 5 .900C7.800 .900 8.800 4.800 9.400 7.500C9.800 9.200 10.600 9.800 12.300 9.400" fill="none" stroke="#8aa7c6" stroke-width="1.700"/></svg>
<svg style="left:79.7px;top:632px" width="15" height="14" viewBox="0 0 15 14"><path d="M.5 7C3 2.500 5.500 1.500 7.500 1.500S12 2.500 14.500 7C12 10.500 9.500 11.500 7.500 11.500S3 10.500 .5 7z" fill="none" stroke="#d9d9d9" stroke-width="1.100"/><circle cx="7.500" cy="5.800" r="2.700" fill="#d9d9d9"/><path d="M1 9.500C4 13.200 11 13.200 14 9.500" fill="none" stroke="#d9d9d9" stroke-width=".9"/></svg>
<div class="abs" style="left:102.3px;top:631.5px;width:14px;height:14px;background:#323232;border-radius:1px"></div>
<svg style="left:301.6px;top:630.5px" width="13" height="15" viewBox="0 0 13 15"><rect x="0.300" y="7" width="12.200" height="7.600" fill="#7c7c7c"/><path d="M5.800 1.200C9.500 1 11.800 3.500 11.800 7.500" fill="none" stroke="#7c7c7c" stroke-width="1.700"/></svg>
<svg style="left:320px;top:633.3px" width="13" height="11" viewBox="0 0 13 11"><path d="M11.500 .800C10 4.500 8 9.700 4.600 9.700C2.200 9.700 .900 7.800 .900 5.600C.900 2.800 2.600 .900 5 .900C7.800 .900 8.800 4.800 9.400 7.500C9.800 9.200 10.600 9.800 12.300 9.400" fill="none" stroke="#8c8c8c" stroke-width="1.700"/></svg>
<svg style="left:337.6px;top:634px" width="15.5" height="10" viewBox="0 0 15.5 10"><g fill="#777"><rect x="0" y="0" width="7.200" height="2.600"/><rect x="8.300" y="0" width="7.200" height="2.600"/><rect x="0" y="3.700" width="3.200" height="2.600"/><rect x="4.200" y="3.700" width="7.200" height="2.600"/><rect x="12.300" y="3.700" width="3.200" height="2.600"/><rect x="0" y="7.400" width="7.200" height="2.600"/><rect x="8.300" y="7.400" width="7.200" height="2.600"/></g></svg>
<svg style="left:104px;top:593px" width="11" height="11" viewBox="0 0 11 11"><path d="M1.500 6L4.200 9.300L9.300 1.500" fill="none" stroke="#e8e8e8" stroke-width="1.500"/></svg>
<svg style="left:129px;top:594px" width="10" height="10" viewBox="0 0 10 10"><path d="M1 0V9H9" fill="none" stroke="#415a78" stroke-width="1.100"/></svg>
<div class="abs" style="left:126.700px;top:502.700px;width:26.500px;height:33.300px;background:conic-gradient(#d9d9d9 25%,#fff 0 50%,#d9d9d9 0 75%,#fff 0);background-size:11px 11px;overflow:hidden"><svg style="left:0;top:0" width="26.500" height="33.300" viewBox="0 0 26.500 33.300"><path d="M2.500 2L7 7L14 6L19.500 1L19 9C21 12 19 16 16 18C22 20 25 26 24.500 32H5C4 28 5 24 8 22C5 20 3 17 4.500 13z" fill="#c8842e"/><path d="M5 32C5 27 7 24 10 23C13 24 16 27 15.500 32z" fill="#e9c79a"/><path d="M16 22C20 22 24 26 24.500 32H18C19 28 18 25 16 22z" fill="#7a4426"/><path d="M2.500 2L6 7L4 10zM19.500 1L15 6.500L19 9z" fill="#5a2f1a"/><ellipse cx="11" cy="14.500" rx="4.500" ry="3" fill="#f0d9b8"/><circle cx="7.500" cy="10.500" r="1.200" fill="#2a1a10"/><circle cx="14.500" cy="10" r="1.200" fill="#2a1a10"/><path d="M9 18c2 2 4 2 6 0v3c-2 1.500-4 1.500-6 0z" fill="#6b3a20"/></svg></div>
<div class="abs" style="left:123.800px;top:546.400px;width:33.400px;height:24.600px;background:conic-gradient(#d9d9d9 25%,#fff 0 50%,#d9d9d9 0 75%,#fff 0);background-size:11px 11px;overflow:hidden"><svg style="left:0;top:0" width="33.400" height="24.600"><g fill="#111"><circle cx="9.0" cy="13.2" r="0.6"/><circle cx="19.8" cy="14.9" r="0.4"/><circle cx="2.4" cy="19.3" r="0.5"/><circle cx="8.9" cy="22.5" r="0.6"/><circle cx="26.6" cy="11.8" r="0.7"/><circle cx="6.4" cy="15.1" r="0.8"/><circle cx="17.4" cy="17.3" r="0.7"/><circle cx="3.9" cy="17.6" r="0.7"/><circle cx="10.9" cy="2.6" r="0.8"/><circle cx="15.9" cy="16.8" r="0.8"/><circle cx="23.0" cy="21.0" r="0.6"/><circle cx="25.5" cy="11.2" r="0.9"/><circle cx="27.8" cy="4.0" r="0.5"/><circle cx="8.4" cy="21.9" r="0.6"/><circle cx="20.4" cy="8.2" r="0.7"/><circle cx="13.3" cy="9.2" r="0.7"/><circle cx="19.2" cy="20.6" r="0.7"/><circle cx="29.3" cy="19.6" r="0.9"/><circle cx="21.7" cy="5.4" r="0.8"/><circle cx="30.4" cy="20.6" r="0.7"/><circle cx="23.0" cy="6.3" r="0.8"/><circle cx="18.9" cy="7.9" r="0.4"/><circle cx="27.1" cy="22.4" r="0.4"/><circle cx="25.5" cy="10.5" r="0.5"/><circle cx="10.6" cy="17.8" r="0.8"/><circle cx="3.3" cy="14.7" r="0.4"/><circle cx="23.1" cy="8.8" r="0.8"/><circle cx="30.8" cy="12.4" r="0.9"/></g></svg></div>
<div class="abs" style="left:143.300px;top:585.300px;width:34.300px;height:26px;background:conic-gradient(#d9d9d9 25%,#fff 0 50%,#d9d9d9 0 75%,#fff 0);background-size:11px 11px;border:1px solid #222;overflow:hidden"><svg style="left:0;top:0" width="33.400" height="24.600"><g fill="#111"><circle cx="20.3" cy="17.3" r="0.8"/><circle cx="29.7" cy="17.2" r="0.9"/><circle cx="2.9" cy="11.6" r="0.9"/><circle cx="21.1" cy="20.6" r="0.5"/><circle cx="15.8" cy="7.1" r="0.7"/><circle cx="18.9" cy="2.3" r="0.5"/><circle cx="10.2" cy="20.9" r="0.8"/><circle cx="6.7" cy="18.4" r="0.5"/><circle cx="20.2" cy="4.6" r="0.4"/><circle cx="27.6" cy="6.3" r="0.5"/><circle cx="30.9" cy="20.0" r="0.5"/><circle cx="30.3" cy="13.1" r="0.7"/><circle cx="8.0" cy="21.4" r="0.7"/><circle cx="30.4" cy="20.4" r="0.5"/><circle cx="12.6" cy="5.4" r="0.5"/><circle cx="3.9" cy="8.2" r="0.7"/><circle cx="2.1" cy="16.0" r="0.6"/><circle cx="11.1" cy="18.9" r="0.6"/><circle cx="11.3" cy="11.9" r="0.8"/><circle cx="3.7" cy="22.1" r="0.4"/><circle cx="24.0" cy="19.4" r="0.4"/><circle cx="25.2" cy="9.5" r="0.7"/><circle cx="2.3" cy="3.0" r="0.5"/><circle cx="30.1" cy="6.0" r="0.8"/><circle cx="29.3" cy="21.4" r="0.6"/><circle cx="12.4" cy="12.8" r="0.8"/></g></svg></div>
<div class="abs" style="left:123.800px;top:627.200px;width:33.400px;height:23px;background:#fff;overflow:hidden"><svg style="left:0;top:0" width="33.400" height="23"><g fill="#111"><circle cx="15.6" cy="9.1" r="0.4"/><circle cx="27.5" cy="2.1" r="0.5"/><circle cx="28.4" cy="3.5" r="0.5"/><circle cx="20.1" cy="2.8" r="0.5"/><circle cx="22.7" cy="10.6" r="0.5"/><circle cx="6.6" cy="6.5" r="0.4"/><circle cx="16.9" cy="19.6" r="0.5"/><circle cx="24.8" cy="9.3" r="0.5"/><circle cx="5.0" cy="7.5" r="0.5"/><circle cx="23.3" cy="10.0" r="0.4"/><circle cx="9.8" cy="6.0" r="0.4"/><circle cx="25.8" cy="5.8" r="0.5"/><circle cx="27.9" cy="3.0" r="0.5"/><circle cx="16.5" cy="2.4" r="0.5"/><circle cx="28.6" cy="4.1" r="0.5"/><circle cx="5.6" cy="13.0" r="0.5"/><circle cx="8.0" cy="2.2" r="0.4"/><circle cx="17.9" cy="2.3" r="0.4"/><circle cx="16.6" cy="19.5" r="0.5"/><circle cx="13.7" cy="14.1" r="0.4"/><circle cx="19.0" cy="5.3" r="0.5"/><circle cx="30.2" cy="3.0" r="0.5"/><circle cx="19.8" cy="4.8" r="0.4"/><circle cx="31.2" cy="21.0" r="0.4"/><circle cx="22.7" cy="20.1" r="0.4"/><circle cx="20.0" cy="2.8" r="0.5"/><circle cx="21.8" cy="13.2" r="0.5"/><circle cx="4.6" cy="8.6" r="0.5"/><circle cx="19.2" cy="10.6" r="0.5"/><circle cx="31.0" cy="12.9" r="0.4"/><circle cx="25.5" cy="8.2" r="0.5"/><circle cx="8.3" cy="10.4" r="0.4"/><circle cx="4.6" cy="14.0" r="0.4"/><circle cx="25.1" cy="2.5" r="0.5"/><circle cx="25.7" cy="11.4" r="0.5"/><circle cx="9.3" cy="16.0" r="0.5"/><circle cx="8.8" cy="20.3" r="0.5"/><circle cx="13.0" cy="18.3" r="0.5"/><circle cx="21.6" cy="5.3" r="0.5"/><circle cx="9.6" cy="3.0" r="0.5"/><circle cx="7.1" cy="20.0" r="0.5"/><circle cx="19.8" cy="2.2" r="0.4"/><circle cx="8.1" cy="9.4" r="0.5"/><circle cx="30.4" cy="8.7" r="0.4"/><circle cx="18.5" cy="4.6" r="0.4"/><circle cx="18.3" cy="15.2" r="0.4"/><circle cx="15.3" cy="15.4" r="0.5"/><circle cx="13.3" cy="18.9" r="0.4"/><circle cx="23.0" cy="16.7" r="0.5"/><circle cx="16.5" cy="3.9" r="0.4"/><circle cx="17.5" cy="5.3" r="0.5"/><circle cx="4.5" cy="16.8" r="0.4"/><circle cx="2.4" cy="5.3" r="0.5"/><circle cx="18.4" cy="9.4" r="0.4"/><circle cx="16.2" cy="20.0" r="0.5"/><circle cx="29.7" cy="2.5" r="0.5"/><circle cx="28.1" cy="12.3" r="0.5"/><circle cx="17.8" cy="19.3" r="0.4"/><circle cx="20.9" cy="12.3" r="0.4"/><circle cx="23.3" cy="15.7" r="0.4"/><circle cx="22.6" cy="10.6" r="0.5"/><circle cx="20.7" cy="3.0" r="0.5"/><circle cx="13.0" cy="18.7" r="0.4"/><circle cx="26.2" cy="15.9" r="0.5"/><circle cx="27.7" cy="2.7" r="0.5"/><circle cx="20.0" cy="14.9" r="0.5"/><circle cx="4.0" cy="5.6" r="0.5"/><circle cx="7.3" cy="3.2" r="0.5"/><circle cx="15.8" cy="12.2" r="0.4"/><circle cx="24.8" cy="8.3" r="0.5"/><circle cx="2.3" cy="20.1" r="0.5"/><circle cx="30.7" cy="20.7" r="0.5"/><circle cx="5.1" cy="8.6" r="0.4"/><circle cx="24.9" cy="5.7" r="0.4"/><circle cx="5.3" cy="4.3" r="0.5"/><circle cx="30.7" cy="9.1" r="0.5"/><circle cx="15.7" cy="11.9" r="0.5"/><circle cx="20.7" cy="6.5" r="0.4"/><circle cx="17.2" cy="5.7" r="0.5"/><circle cx="29.8" cy="2.4" r="0.4"/><circle cx="25.5" cy="3.1" r="0.4"/><circle cx="27.0" cy="13.5" r="0.4"/><circle cx="3.7" cy="7.2" r="0.4"/><circle cx="25.5" cy="20.5" r="0.5"/><circle cx="28.5" cy="19.7" r="0.5"/><circle cx="29.0" cy="20.4" r="0.4"/><circle cx="11.3" cy="6.7" r="0.5"/><circle cx="16.5" cy="8.6" r="0.5"/><circle cx="13.7" cy="6.0" r="0.4"/><circle cx="15.6" cy="13.6" r="0.5"/><circle cx="14.9" cy="5.5" r="0.5"/><circle cx="11.6" cy="5.2" r="0.5"/><circle cx="7.5" cy="15.5" r="0.5"/><circle cx="6.0" cy="13.9" r="0.5"/><circle cx="15.1" cy="13.5" r="0.5"/><circle cx="28.0" cy="15.9" r="0.4"/><circle cx="17.9" cy="8.4" r="0.4"/><circle cx="18.2" cy="10.9" r="0.5"/><circle cx="11.5" cy="17.8" r="0.5"/><circle cx="4.9" cy="15.6" r="0.4"/><circle cx="17.7" cy="3.4" r="0.4"/><circle cx="29.1" cy="2.8" r="0.4"/><circle cx="6.8" cy="3.8" r="0.5"/><circle cx="31.3" cy="14.3" r="0.5"/><circle cx="28.1" cy="11.6" r="0.4"/><circle cx="22.3" cy="8.8" r="0.4"/><circle cx="11.4" cy="9.3" r="0.4"/><circle cx="20.0" cy="18.5" r="0.5"/><circle cx="2.3" cy="15.0" r="0.4"/><circle cx="16.1" cy="18.4" r="0.5"/></g></svg></div>
<svg style="left:164px;top:501px" width="10" height="10.5" viewBox="0 0 10 10.5"><path d="M.600 2.500V9.800H9.400V2.500zM.600 2.500V.600H5.500V2.500M.600 4.300H9.400" fill="none" stroke="#d6d6d6" stroke-width="1.100"/></svg>
<svg style="left:164px;top:541px" width="10" height="10.5" viewBox="0 0 10 10.5"><path d="M.600 2.500V9.800H9.400V2.500zM.600 2.500V.600H5.500V2.500M.600 4.300H9.400" fill="none" stroke="#d6d6d6" stroke-width="1.100"/></svg>
<svg style="left:164px;top:621px" width="10" height="10.5" viewBox="0 0 10 10.5"><path d="M.600 2.500V9.800H9.400V2.500zM.600 2.500V.600H5.500V2.500M.600 4.300H9.400" fill="none" stroke="#d6d6d6" stroke-width="1.100"/></svg>
<svg style="left:166px;top:526px" width="7" height="10.5" viewBox="0 0 7 10.5"><path d="M.8 .8L5.800 5.200L.8 9.700" fill="none" stroke="#e2e2e2" stroke-width="1.400"/></svg>
<svg style="left:166px;top:646px" width="7" height="10.5" viewBox="0 0 7 10.5"><path d="M.8 .8L5.800 5.200L.8 9.700" fill="none" stroke="#e2e2e2" stroke-width="1.400"/></svg>
<svg style="left:164px;top:567.5px" width="10.5" height="7" viewBox="0 0 10.5 7"><path d="M.8 .8L5.200 5.500L9.700 .8" fill="none" stroke="#e2e2e2" stroke-width="1.400"/></svg>
<svg style="left:183.5px;top:580px" width="11" height="12" viewBox="0 0 11 12"><path d="M2 2H8.500C8.500 6 7 9.500 2 10z" fill="none" stroke="#e0e0e0" stroke-width="1.100"/><g fill="#56789d" stroke="#e0e0e0" stroke-width=".9"><rect x=".6" y=".6" width="2.600" height="2.600"/><rect x="7.600" y=".6" width="2.600" height="2.600"/><rect x=".6" y="8.600" width="2.600" height="2.600"/></g></svg>
<svg style="left:184.2px;top:509.2px" width="31.7" height="20"><text x="0" y="14" font-size="13" fill="#dedede" font-weight="normal" textLength="31.7" lengthAdjust="spacingAndGlyphs">Frente</text></svg>
<svg style="left:184.2px;top:549.2px" width="32.6" height="20"><text x="0" y="14" font-size="13" fill="#dedede" font-weight="normal" textLength="32.6" lengthAdjust="spacingAndGlyphs">Costas</text></svg>
<svg style="left:204.2px;top:588.8px" width="69.7" height="20"><text x="0" y="14" font-size="13" fill="#e9eef4" font-weight="bold" textLength="69.7" lengthAdjust="spacingAndGlyphs">Vector Layer 4</text></svg>
<svg style="left:184.2px;top:629.2px" width="22.8" height="20"><text x="0" y="14" font-size="13" fill="#dedede" font-weight="normal" textLength="22.8" lengthAdjust="spacingAndGlyphs">Base</text></svg>
<svg style="left:81px;top:703px" width="18" height="19" viewBox="0 0 18 19"><path d="M9 .5V18.500M0 9.500H18" stroke="#e0e0e0" stroke-width="1.800"/></svg>
<div class="tri" style="left:106.500px;top:710.500px;border-left-width:3px;border-right-width:3px;border-top-width:3.500px;border-top-color:#8e8e8e"></div>
<svg style="left:123px;top:703px" width="20" height="19" viewBox="0 0 20 19"><path d="M5.500 .800H19.200V14.500H5.500zM.800 4.800V18.200H14.500" fill="none" stroke="#e0e0e0" stroke-width="1.500"/></svg>
<svg style="left:154px;top:706.5px" width="22" height="12" viewBox="0 0 22 12"><path d="M1 1L11 10.500L21 1" fill="none" stroke="#e0e0e0" stroke-width="1.700"/></svg>
<svg style="left:186px;top:706.5px" width="22" height="12" viewBox="0 0 22 12"><path d="M1 11L11 1.500L21 11" fill="none" stroke="#e0e0e0" stroke-width="1.700"/></svg>
<svg style="left:218.5px;top:705px" width="21" height="16" viewBox="0 0 21 16"><path d="M0 2.500H21M0 8H21M0 13.500H21" stroke="#e0e0e0" stroke-width="1.600"/><g fill="#484848" stroke="#e0e0e0" stroke-width="1.300"><rect x="12.500" y=".700" width="3.200" height="3.600"/><rect x="4.500" y="6.200" width="3.200" height="3.600"/><rect x="10.500" y="11.700" width="3.200" height="3.600"/></g></svg>
<div class="tri" style="left:246px;top:710.500px;border-left-width:3px;border-right-width:3px;border-top-width:3.500px;border-top-color:#8e8e8e"></div>
<svg style="left:333.5px;top:702.5px" width="18" height="20" viewBox="0 0 18 20"><path d="M0 3H18V5.300H0zM6 3V.500H12V3" fill="#e0e0e0"/><path d="M1.800 6.500H16.200V17.500A2 2 0 0 1 14.200 19.500H3.800A2 2 0 0 1 1.800 17.500z" fill="#e0e0e0"/></svg>

<!--/LEFTDOCK-->
<!--CANVAS-->
<div class="abs" style="left:363.5px;top:131px;width:722.5px;height:29.5px;background:#484848;border:1px solid #5a5a5a;border-bottom:none;border-radius:3px 3px 0 0"></div>
<div class="abs" style="left:375px;top:137.500px;width:13.200px;height:13.200px;border-radius:50%;background:conic-gradient(from 0deg,#e63cdc 0deg,#f04ab0 50deg,#f7a070 95deg,#f4ee6a 130deg,#9af0b0 165deg,#45e6e0 205deg,#55b8f0 250deg,#8a78e8 295deg,#c84ae0 335deg,#e63cdc 360deg);box-shadow:0 0 0 .5px #26343a"></div>
<svg style="left:375px;top:137.5px" width="13.2" height="13.2" viewBox="0 0 13.2 13.2"><path d="M2.800 3.200L9.500 8.800" stroke="#2a2040" stroke-width="1.800" stroke-linecap="round"/><circle cx="9.400" cy="8.900" r="1.300" fill="#14141c"/><path d="M3.500 7.500C5 9.500 7 10 9 9.300" stroke="#e8fbff" stroke-width="1.600" fill="none" opacity=".7"/></svg>
<svg style="left:583.5px;top:136.0px" width="277.5" height="20"><text x="0" y="14" font-size="13" fill="#e2e2e2" font-weight="normal" textLength="277.5" lengthAdjust="spacingAndGlyphs">20260106 - Referencia do Cannella.kra (646.2 MiB) *</text></svg>
<svg style="left:1058.8px;top:141.7px" width="10.6" height="10.6" viewBox="0 0 10.6 10.6"><path d="M.800 .800L9.800 9.800M9.800 .800L.800 9.800" stroke="#e6e6e6" stroke-width="1.500"/></svg>
<div class="abs" style="left:363px;top:160px;width:710px;height:555px;background:#fff conic-gradient(#fff 25%,#f5f5f5 0 50%,#fff 0 75%,#f5f5f5 0) 0 0/64px 64px;overflow:hidden" id="canvas"><!--DRAW-->
<svg style="left:0;top:0" width="710" height="555" viewBox="0 0 710 555">
<defs><filter id="soft" x="-5%" y="-5%" width="110%" height="110%"><feGaussianBlur stdDeviation="0.45"/></filter></defs>
<g transform="translate(0 0) scale(0.24085)" filter="url(#soft)"><path class="p" d="M775 0C774 17 771 65 770 100C769 135 765 177 770 210C775 243 787 265 800 300C813 335 830 380 850 420C870 460 897 507 920 540C943 573 978 607 990 620" fill="none" stroke="#7c7c7c" stroke-width="13.5" stroke-linecap="round" stroke-linejoin="round" opacity="0.8"/><path class="p" d="M773 -5C772 12 772 59 772 94C772 130 767 174 771 208C774 242 782 265 794 300C806 335 823 380 844 419C864 458 890 500 914 534C938 569 976 610 989 625" fill="none" stroke="#7c7c7c" stroke-width="7.4" stroke-linecap="round" stroke-linejoin="round" opacity="0.56"/><path class="p" d="M767 -6C768 13 772 74 773 110C774 145 765 178 772 208C778 238 796 255 810 290C825 325 841 375 858 415C875 456 891 496 912 532C933 567 974 611 986 627" fill="none" stroke="#7c7c7c" stroke-width="5.4" stroke-linecap="round" stroke-linejoin="round" opacity="0.40"/><path class="p" d="M768 200C772 215 780 258 790 290C800 322 823 373 830 390" fill="none" stroke="#888" stroke-width="7.5" stroke-linecap="round" stroke-linejoin="round" opacity="0.6"/><path class="p" d="M418 375C416 386 408 418 405 440C402 462 401 494 400 505" fill="none" stroke="#6a6a6a" stroke-width="13.5" stroke-linecap="round" stroke-linejoin="round" opacity="0.9"/><path class="p" d="M414 376C412 386 409 418 407 438C405 459 402 489 401 499" fill="none" stroke="#6a6a6a" stroke-width="7.4" stroke-linecap="round" stroke-linejoin="round" opacity="0.63"/><path class="p" d="M408 369C408 380 411 415 409 438C407 461 398 495 396 507" fill="none" stroke="#6a6a6a" stroke-width="5.4" stroke-linecap="round" stroke-linejoin="round" opacity="0.45"/><path class="p" d="M395 400C399 396 411 379 420 375C429 371 447 372 450 378C453 384 445 401 440 410C435 419 423 427 420 430" fill="none" stroke="#6a6a6a" stroke-width="12.0" stroke-linecap="round" stroke-linejoin="round" opacity="0.9"/><path class="p" d="M394 397C399 394 415 381 424 378C433 375 444 373 446 379C449 385 444 407 440 415C436 423 426 425 423 427" fill="none" stroke="#6a6a6a" stroke-width="6.6" stroke-linecap="round" stroke-linejoin="round" opacity="0.63"/><path class="p" d="M406 392C408 390 412 383 418 381C424 378 440 372 442 378C444 383 433 405 430 414C427 423 426 429 426 432" fill="none" stroke="#6a6a6a" stroke-width="4.8" stroke-linecap="round" stroke-linejoin="round" opacity="0.45"/><path class="p" d="M470 425C468 432 456 457 458 470C460 483 470 498 480 505C490 512 508 512 520 510C532 508 548 500 555 490C562 480 567 462 565 450C563 438 553 424 545 420C537 416 520 424 515 425" fill="none" stroke="#6a6a6a" stroke-width="13.5" stroke-linecap="round" stroke-linejoin="round" opacity="0.9"/><path class="p" d="M475 422C473 431 460 458 461 471C462 485 470 497 481 504C492 512 513 518 525 516C537 514 549 503 555 492C560 482 560 464 559 453C558 442 554 432 547 427C541 422 524 423 520 422" fill="none" stroke="#6a6a6a" stroke-width="7.4" stroke-linecap="round" stroke-linejoin="round" opacity="0.63"/><path class="p" d="M467 429C464 435 447 458 447 469C448 480 462 489 473 497C483 504 498 518 510 516C523 514 538 494 547 484C556 475 564 469 563 458C561 447 544 423 536 419C528 415 519 431 516 433" fill="none" stroke="#6a6a6a" stroke-width="5.4" stroke-linecap="round" stroke-linejoin="round" opacity="0.45"/><path class="p" d="M320 650C324 637 338 572 345 570C352 568 357 639 365 640C373 641 388 573 395 575C402 577 408 638 410 650" fill="none" stroke="#6a6a6a" stroke-width="13.5" stroke-linecap="round" stroke-linejoin="round" opacity="0.9"/><path class="p" d="M324 655C327 641 335 570 342 569C348 567 353 645 363 645C373 646 394 570 401 570C408 570 405 634 405 646" fill="none" stroke="#6a6a6a" stroke-width="7.4" stroke-linecap="round" stroke-linejoin="round" opacity="0.63"/><path class="p" d="M314 650C320 636 340 567 347 565C354 563 347 636 354 638C362 640 381 574 392 576C403 579 415 641 420 654" fill="none" stroke="#6a6a6a" stroke-width="5.4" stroke-linecap="round" stroke-linejoin="round" opacity="0.45"/><path class="p" d="M470 575C464 578 442 579 435 590C428 601 424 629 430 640C436 651 463 652 470 655" fill="none" stroke="#6a6a6a" stroke-width="12.0" stroke-linecap="round" stroke-linejoin="round" opacity="0.9"/><path class="p" d="M470 577C465 578 443 573 437 584C432 595 429 631 436 644C442 656 469 657 475 659" fill="none" stroke="#6a6a6a" stroke-width="6.6" stroke-linecap="round" stroke-linejoin="round" opacity="0.63"/><path class="p" d="M468 573C461 576 434 583 426 593C418 603 414 621 420 630C427 640 456 645 464 648" fill="none" stroke="#6a6a6a" stroke-width="4.8" stroke-linecap="round" stroke-linejoin="round" opacity="0.45"/><path class="p" d="M432 615 L465 610" fill="none" stroke="#6a6a6a" stroke-width="10.5" stroke-linecap="round" stroke-linejoin="round" opacity="0.9"/><path class="p" d="M560 590C552 590 525 583 515 590C505 597 498 618 500 630C502 642 519 658 530 660C541 662 559 648 565 645" fill="none" stroke="#6a6a6a" stroke-width="13.5" stroke-linecap="round" stroke-linejoin="round" opacity="0.9"/><path class="p" d="M558 584C549 584 519 578 508 585C497 593 492 615 494 628C497 641 511 663 523 665C535 667 559 644 567 640" fill="none" stroke="#6a6a6a" stroke-width="7.4" stroke-linecap="round" stroke-linejoin="round" opacity="0.63"/><path class="p" d="M555 587C547 586 520 573 512 582C504 591 505 628 508 641C511 654 521 660 529 660C537 659 551 640 556 636" fill="none" stroke="#6a6a6a" stroke-width="5.4" stroke-linecap="round" stroke-linejoin="round" opacity="0.45"/><path class="p" d="M290 680C315 679 390 675 440 672C490 669 567 662 592 660" fill="none" stroke="#6a6a6a" stroke-width="12.0" stroke-linecap="round" stroke-linejoin="round" opacity="0.9"/><path class="p" d="M288 677C314 675 395 669 445 667C494 666 562 666 585 666" fill="none" stroke="#6a6a6a" stroke-width="6.6" stroke-linecap="round" stroke-linejoin="round" opacity="0.63"/><path class="p" d="M291 672C316 670 391 662 441 662C491 661 567 669 593 671" fill="none" stroke="#6a6a6a" stroke-width="4.8" stroke-linecap="round" stroke-linejoin="round" opacity="0.45"/><path class="p" d="M335 735C341 732 362 714 370 715C378 716 388 731 385 740C382 749 356 763 350 768" fill="none" stroke="#6a6a6a" stroke-width="12.0" stroke-linecap="round" stroke-linejoin="round" opacity="0.9"/><path class="p" d="M340 738C345 734 360 712 367 713C373 714 383 734 380 744C378 754 355 767 350 772" fill="none" stroke="#6a6a6a" stroke-width="6.6" stroke-linecap="round" stroke-linejoin="round" opacity="0.63"/><path class="p" d="M331 729C339 728 367 723 377 726C387 729 396 739 393 747C389 755 363 769 357 773" fill="none" stroke="#6a6a6a" stroke-width="4.8" stroke-linecap="round" stroke-linejoin="round" opacity="0.45"/><path class="p" d="M430 720 L415 768" fill="none" stroke="#6a6a6a" stroke-width="12.0" stroke-linecap="round" stroke-linejoin="round" opacity="0.9"/><path class="p" d="M430 720C437 719 462 707 470 715C478 723 478 759 480 768" fill="none" stroke="#6a6a6a" stroke-width="12.0" stroke-linecap="round" stroke-linejoin="round" opacity="0.9"/><path class="p" d="M426 720C433 718 460 701 468 708C476 716 472 755 473 765" fill="none" stroke="#6a6a6a" stroke-width="6.6" stroke-linecap="round" stroke-linejoin="round" opacity="0.63"/><path class="p" d="M425 724C434 723 469 705 480 714C491 723 488 768 490 779" fill="none" stroke="#6a6a6a" stroke-width="4.8" stroke-linecap="round" stroke-linejoin="round" opacity="0.45"/><path class="p" d="M480 768C483 760 493 729 500 720C507 711 517 716 520 715" fill="none" stroke="#6a6a6a" stroke-width="12.0" stroke-linecap="round" stroke-linejoin="round" opacity="0.9"/><path class="p" d="M486 766C488 758 491 725 496 716C501 707 512 712 516 711" fill="none" stroke="#6a6a6a" stroke-width="6.6" stroke-linecap="round" stroke-linejoin="round" opacity="0.63"/><path class="p" d="M483 777C487 767 501 729 507 720C514 710 521 721 523 722" fill="none" stroke="#6a6a6a" stroke-width="4.8" stroke-linecap="round" stroke-linejoin="round" opacity="0.45"/><path class="p" d="M575 690C570 692 549 692 545 700C541 708 544 724 550 735C556 746 575 762 580 768" fill="none" stroke="#6a6a6a" stroke-width="12.0" stroke-linecap="round" stroke-linejoin="round" opacity="0.9"/><path class="p" d="M569 692C566 694 553 697 551 704C548 711 549 723 554 735C558 746 572 766 575 772" fill="none" stroke="#6a6a6a" stroke-width="6.6" stroke-linecap="round" stroke-linejoin="round" opacity="0.63"/><path class="p" d="M571 697C569 697 559 690 555 698C551 706 543 734 548 745C553 755 579 758 585 761" fill="none" stroke="#6a6a6a" stroke-width="4.8" stroke-linecap="round" stroke-linejoin="round" opacity="0.45"/></g>
<g transform="translate(0 0) scale(0.24085)"><path d="M-5 -5L140 -5C135 60 110 150 85 200C60 260 30 310 -5 350z" fill="#d58d37" stroke="#0a0a0a" stroke-width="7"/><path d="M-5 40C20 30 45 15 70 8C66 50 50 110 30 155C20 180 10 200 -5 222z" fill="#5a2d1c" stroke="#0a0a0a" stroke-width="6"/><path d="M5 348L60 270" stroke="#cfcfcf" stroke-width="4" opacity=".7"/></g>
<g transform="translate(237 0) scale(0.24085)" filter="url(#soft)"><path class="p" d="M90 0C108 8 165 30 200 50C235 70 276 97 300 120C324 143 335 168 345 190C355 212 359 228 360 250C361 272 352 308 350 320" fill="none" stroke="#7c7c7c" stroke-width="15.0" stroke-linecap="round" stroke-linejoin="round" opacity="0.8"/><path class="p" d="M85 -5C105 5 171 33 206 54C241 76 271 102 295 125C319 148 341 171 352 192C362 213 359 231 358 251C357 271 347 303 345 313" fill="none" stroke="#7c7c7c" stroke-width="8.2" stroke-linecap="round" stroke-linejoin="round" opacity="0.56"/><path class="p" d="M100 3C117 13 168 39 201 60C234 80 273 107 299 128C324 149 343 164 352 184C362 203 356 222 355 245C353 268 346 309 344 322" fill="none" stroke="#7c7c7c" stroke-width="6.0" stroke-linecap="round" stroke-linejoin="round" opacity="0.40"/><path class="p" d="M395 240C388 242 371 245 355 250C339 255 320 271 300 272C280 273 252 266 235 258C218 250 202 230 195 225" fill="none" stroke="#7c7c7c" stroke-width="10.5" stroke-linecap="round" stroke-linejoin="round" opacity="0.8"/><path class="p" d="M392 239C385 242 365 250 350 256C334 261 317 270 298 271C279 273 254 270 236 264C219 257 201 236 194 231" fill="none" stroke="#7c7c7c" stroke-width="5.8" stroke-linecap="round" stroke-linejoin="round" opacity="0.56"/><path class="p" d="M395 241C388 240 372 235 356 239C339 243 321 261 299 265C277 269 243 271 224 265C206 258 194 231 188 224" fill="none" stroke="#7c7c7c" stroke-width="4.2" stroke-linecap="round" stroke-linejoin="round" opacity="0.40"/><path class="p" d="M195 225C191 238 173 274 170 300C167 326 168 358 175 380C182 402 191 417 210 430C229 443 277 455 290 460" fill="none" stroke="#7c7c7c" stroke-width="13.5" stroke-linecap="round" stroke-linejoin="round" opacity="0.8"/><path class="p" d="M198 226C193 238 171 274 168 300C164 327 170 362 176 384C182 406 186 419 204 431C223 443 273 453 286 457" fill="none" stroke="#7c7c7c" stroke-width="7.4" stroke-linecap="round" stroke-linejoin="round" opacity="0.56"/><path class="p" d="M201 225C196 239 174 280 171 306C169 331 177 358 184 379C191 399 195 416 212 430C230 444 277 459 290 464" fill="none" stroke="#7c7c7c" stroke-width="5.4" stroke-linecap="round" stroke-linejoin="round" opacity="0.40"/><path class="p" d="M180 330C182 342 182 381 190 400C198 419 223 438 230 445" fill="none" stroke="#7c7c7c" stroke-width="9.0" stroke-linecap="round" stroke-linejoin="round" opacity="0.8"/><path class="p" d="M135 390C129 393 109 395 100 410C91 425 80 455 80 480C80 505 86 539 100 560C114 581 154 598 165 605" fill="none" stroke="#7c7c7c" stroke-width="13.5" stroke-linecap="round" stroke-linejoin="round" opacity="0.8"/><path class="p" d="M134 390C129 395 108 400 100 416C91 432 82 462 83 485C84 509 92 536 106 557C120 578 156 602 166 611" fill="none" stroke="#7c7c7c" stroke-width="7.4" stroke-linecap="round" stroke-linejoin="round" opacity="0.56"/><path class="p" d="M142 382C134 386 104 393 92 409C80 424 71 448 71 474C70 500 74 540 91 564C107 587 158 605 171 614" fill="none" stroke="#7c7c7c" stroke-width="5.4" stroke-linecap="round" stroke-linejoin="round" opacity="0.40"/><path class="p" d="M85 480C87 495 87 544 95 570C103 596 128 624 135 635" fill="none" stroke="#7c7c7c" stroke-width="10.5" stroke-linecap="round" stroke-linejoin="round" opacity="0.8"/><path class="p" d="M80 483C83 497 87 539 97 565C107 591 133 629 140 642" fill="none" stroke="#7c7c7c" stroke-width="5.8" stroke-linecap="round" stroke-linejoin="round" opacity="0.56"/><path class="p" d="M79 490C81 503 82 544 93 570C104 595 137 630 146 642" fill="none" stroke="#7c7c7c" stroke-width="4.2" stroke-linecap="round" stroke-linejoin="round" opacity="0.40"/><path class="p" d="M110 425C117 431 135 452 150 460C165 468 192 468 200 470" fill="none" stroke="#7c7c7c" stroke-width="7.5" stroke-linecap="round" stroke-linejoin="round" opacity="0.8"/><path class="p" d="M60 545C54 548 30 544 22 560C14 576 7 613 10 640C13 667 25 698 40 720C55 742 90 766 100 775" fill="none" stroke="#7c7c7c" stroke-width="13.5" stroke-linecap="round" stroke-linejoin="round" opacity="0.8"/><path class="p" d="M55 544C50 546 30 542 22 558C14 573 2 612 6 637C9 663 27 690 43 713C59 736 91 764 101 774" fill="none" stroke="#7c7c7c" stroke-width="7.4" stroke-linecap="round" stroke-linejoin="round" opacity="0.56"/><path class="p" d="M49 541C45 544 33 542 25 560C17 578 -3 622 0 651C4 679 31 711 46 730C61 750 84 763 91 770" fill="none" stroke="#7c7c7c" stroke-width="5.4" stroke-linecap="round" stroke-linejoin="round" opacity="0.40"/><path class="p" d="M20 600C23 615 28 666 40 690C52 714 72 734 90 745C108 756 140 753 150 755" fill="none" stroke="#7c7c7c" stroke-width="9.0" stroke-linecap="round" stroke-linejoin="round" opacity="0.8"/><path class="p" d="M360 190C372 180 412 152 430 130C448 108 460 81 470 60C480 39 487 14 490 5" fill="none" stroke="#7c7c7c" stroke-width="12.0" stroke-linecap="round" stroke-linejoin="round" opacity="0.8"/><path class="p" d="M354 194C366 182 408 146 427 125C446 103 458 86 469 66C480 45 490 12 494 2" fill="none" stroke="#7c7c7c" stroke-width="6.6" stroke-linecap="round" stroke-linejoin="round" opacity="0.56"/><path class="p" d="M352 199C365 188 413 159 432 134C450 110 451 72 461 50C471 28 489 11 494 3" fill="none" stroke="#7c7c7c" stroke-width="4.8" stroke-linecap="round" stroke-linejoin="round" opacity="0.40"/><path class="p" d="M490 5C495 18 510 52 520 80C530 108 544 143 550 170C556 197 557 227 555 240C553 253 541 250 537 246C533 242 531 220 530 215" fill="none" stroke="#7c7c7c" stroke-width="13.5" stroke-linecap="round" stroke-linejoin="round" opacity="0.8"/><path class="p" d="M484 11C490 23 512 57 522 84C532 112 540 148 544 175C549 202 550 234 549 245C548 257 539 248 536 244C533 240 532 225 531 221" fill="none" stroke="#7c7c7c" stroke-width="7.4" stroke-linecap="round" stroke-linejoin="round" opacity="0.56"/><path class="p" d="M485 -3C491 10 511 47 521 74C530 102 537 136 541 163C545 189 547 220 545 233C544 247 534 246 533 242C531 238 535 216 536 210" fill="none" stroke="#7c7c7c" stroke-width="5.4" stroke-linecap="round" stroke-linejoin="round" opacity="0.40"/><path class="p" d="M560 170C563 160 567 124 580 110C593 96 617 85 640 85C663 85 693 96 720 110C747 124 787 162 800 172" fill="none" stroke="#7c7c7c" stroke-width="12.0" stroke-linecap="round" stroke-linejoin="round" opacity="0.8"/><path class="p" d="M560 165C563 155 565 118 578 103C591 89 612 77 637 78C661 79 697 95 723 111C750 126 784 161 796 172" fill="none" stroke="#7c7c7c" stroke-width="6.6" stroke-linecap="round" stroke-linejoin="round" opacity="0.56"/><path class="p" d="M570 161C572 153 575 120 587 109C599 97 618 92 640 92C662 93 690 95 718 110C745 125 790 171 804 183" fill="none" stroke="#7c7c7c" stroke-width="4.8" stroke-linecap="round" stroke-linejoin="round" opacity="0.40"/><path class="p" d="M984 0C970 8 924 32 900 50C876 68 855 87 840 110C825 133 817 157 810 190C803 223 802 290 800 310" fill="none" stroke="#7c7c7c" stroke-width="15.0" stroke-linecap="round" stroke-linejoin="round" opacity="0.8"/><path class="p" d="M982 5C969 13 927 35 903 52C879 69 855 86 839 108C822 130 811 151 804 185C796 219 796 292 794 313" fill="none" stroke="#7c7c7c" stroke-width="8.2" stroke-linecap="round" stroke-linejoin="round" opacity="0.56"/><path class="p" d="M979 -7C964 3 913 37 891 58C869 78 862 93 848 114C834 135 814 152 805 184C796 217 797 288 795 309" fill="none" stroke="#7c7c7c" stroke-width="6.0" stroke-linecap="round" stroke-linejoin="round" opacity="0.40"/><path class="p" d="M830 100C828 117 822 163 818 200C814 237 808 300 806 320" fill="none" stroke="#7c7c7c" stroke-width="10.5" stroke-linecap="round" stroke-linejoin="round" opacity="0.8"/><path class="p" d="M825 99C823 117 817 170 815 206C813 243 813 302 813 321" fill="none" stroke="#7c7c7c" stroke-width="5.8" stroke-linecap="round" stroke-linejoin="round" opacity="0.56"/><path class="p" d="M824 110C823 125 819 162 814 197C809 231 798 297 795 317" fill="none" stroke="#7c7c7c" stroke-width="4.2" stroke-linecap="round" stroke-linejoin="round" opacity="0.40"/><path class="p" d="M760 236C775 232 823 224 850 210C877 196 908 160 920 150" fill="none" stroke="#7c7c7c" stroke-width="10.5" stroke-linecap="round" stroke-linejoin="round" opacity="0.8"/><path class="p" d="M760 236C774 232 820 225 846 210C871 195 902 157 913 147" fill="none" stroke="#7c7c7c" stroke-width="5.8" stroke-linecap="round" stroke-linejoin="round" opacity="0.56"/><path class="p" d="M751 234C766 228 812 214 840 199C867 185 903 153 916 144" fill="none" stroke="#7c7c7c" stroke-width="4.2" stroke-linecap="round" stroke-linejoin="round" opacity="0.40"/><path class="p" d="M815 258C826 253 862 246 880 230C898 214 918 176 925 165" fill="none" stroke="#7c7c7c" stroke-width="7.5" stroke-linecap="round" stroke-linejoin="round" opacity="0.8"/><path class="p" d="M920 150C927 160 951 185 960 210C969 235 975 271 975 300C975 329 962 371 960 385" fill="none" stroke="#7c7c7c" stroke-width="13.5" stroke-linecap="round" stroke-linejoin="round" opacity="0.8"/><path class="p" d="M921 150C928 161 954 186 964 212C973 238 979 277 978 305C977 334 962 370 958 383" fill="none" stroke="#7c7c7c" stroke-width="7.4" stroke-linecap="round" stroke-linejoin="round" opacity="0.56"/><path class="p" d="M931 142C936 154 959 186 965 213C971 241 964 278 965 307C966 336 968 374 969 388" fill="none" stroke="#7c7c7c" stroke-width="5.4" stroke-linecap="round" stroke-linejoin="round" opacity="0.40"/><path class="p" d="M935 320 L965 330" fill="none" stroke="#7c7c7c" stroke-width="7.5" stroke-linecap="round" stroke-linejoin="round" opacity="0.8"/><path class="p" d="M940 370 L975 385" fill="none" stroke="#7c7c7c" stroke-width="7.5" stroke-linecap="round" stroke-linejoin="round" opacity="0.8"/><path class="p" d="M380 272C433 272 599 271 700 270C801 269 937 268 984 268" fill="none" stroke="#c4c4c4" stroke-width="4.5" stroke-linecap="round" stroke-linejoin="round" opacity="0.8"/><path class="p" d="M0 160C20 180 80 237 120 280C160 323 220 397 240 420" fill="none" stroke="#d0d0d0" stroke-width="3.0" stroke-linecap="round" stroke-linejoin="round" opacity="0.8"/><path class="p" d="M240 420C250 405 270 354 300 330C330 306 400 284 420 275" fill="none" stroke="#cdd6e2" stroke-width="3.8" stroke-linecap="round" stroke-linejoin="round" opacity="0.8"/><path class="p" d="M270 140C267 153 250 193 250 220C250 247 267 287 270 300" fill="none" stroke="#c8c8c8" stroke-width="3.8" stroke-linecap="round" stroke-linejoin="round" opacity="0.8"/></g>
<g transform="translate(237 0) scale(0.24085)"></g>
<g transform="translate(474 0) scale(0.24085)" filter="url(#soft)"><path class="p" d="M345 0C345 17 347 67 345 100C343 133 340 167 335 200C330 233 323 267 315 300C307 333 298 372 285 400C272 428 253 453 240 470C227 487 211 495 205 500" fill="none" stroke="#7c7c7c" stroke-width="16.5" stroke-linecap="round" stroke-linejoin="round" opacity="0.8"/><path class="p" d="M348 4C347 20 342 67 340 100C338 134 339 171 335 205C332 239 327 271 319 305C311 338 299 377 286 405C273 434 257 458 243 473C228 487 208 490 201 493" fill="none" stroke="#7c7c7c" stroke-width="9.1" stroke-linecap="round" stroke-linejoin="round" opacity="0.56"/><path class="p" d="M337 -3C337 15 336 73 336 107C336 142 339 170 336 203C333 236 326 273 318 304C309 335 297 360 285 389C273 418 260 457 247 475C233 494 212 497 205 501" fill="none" stroke="#7c7c7c" stroke-width="6.6" stroke-linecap="round" stroke-linejoin="round" opacity="0.40"/><path class="p" d="M160 10C152 12 122 10 110 20C98 30 89 52 85 70C81 88 79 114 85 130C91 146 104 158 120 165C136 172 162 179 180 175C198 171 216 156 230 140C244 124 258 99 265 80C272 61 269 34 270 25" fill="none" stroke="#7c7c7c" stroke-width="12.0" stroke-linecap="round" stroke-linejoin="round" opacity="0.8"/><path class="p" d="M162 4C154 6 127 6 113 17C99 27 83 48 79 67C75 85 81 108 88 126C96 143 108 164 123 172C139 180 162 178 180 173C198 169 215 158 230 143C245 127 262 102 269 82C276 61 271 30 272 19" fill="none" stroke="#7c7c7c" stroke-width="6.6" stroke-linecap="round" stroke-linejoin="round" opacity="0.56"/><path class="p" d="M152 5C146 6 126 7 115 16C104 25 93 41 86 59C80 77 69 107 75 125C82 143 106 162 124 169C142 177 166 175 184 170C202 165 217 156 230 139C244 123 256 92 264 72C272 51 276 27 279 18" fill="none" stroke="#7c7c7c" stroke-width="4.8" stroke-linecap="round" stroke-linejoin="round" opacity="0.40"/><path class="p" d="M95 120C101 125 114 145 130 150C146 155 180 150 190 150" fill="none" stroke="#999" stroke-width="6.0" stroke-linecap="round" stroke-linejoin="round" opacity="0.7"/><path class="p" d="M270 30C273 37 277 58 290 70C303 82 340 95 350 100" fill="none" stroke="#7c7c7c" stroke-width="10.5" stroke-linecap="round" stroke-linejoin="round" opacity="0.8"/><path class="p" d="M277 36C278 42 270 58 283 69C296 81 343 100 354 107" fill="none" stroke="#7c7c7c" stroke-width="5.8" stroke-linecap="round" stroke-linejoin="round" opacity="0.56"/><path class="p" d="M269 25C271 34 271 67 284 80C296 93 334 98 344 102" fill="none" stroke="#7c7c7c" stroke-width="4.2" stroke-linecap="round" stroke-linejoin="round" opacity="0.40"/><path class="p" d="M0 380C8 377 33 373 50 360C67 347 87 305 100 300C113 295 122 310 130 330C138 350 145 392 145 420C145 448 136 482 130 500C124 518 119 527 110 530C101 533 81 522 75 520" fill="none" stroke="#7c7c7c" stroke-width="13.5" stroke-linecap="round" stroke-linejoin="round" opacity="0.8"/><path class="p" d="M-5 380C5 376 38 368 56 355C75 341 91 304 104 300C118 296 129 312 135 333C142 354 142 399 141 426C140 452 136 476 130 493C123 511 112 526 103 530C94 534 79 519 74 517" fill="none" stroke="#7c7c7c" stroke-width="7.4" stroke-linecap="round" stroke-linejoin="round" opacity="0.56"/><path class="p" d="M-8 377C1 375 30 379 46 367C62 356 74 313 89 306C104 298 127 302 137 322C148 342 154 396 154 425C155 454 147 478 139 495C131 513 116 523 107 528C98 532 90 523 86 522" fill="none" stroke="#7c7c7c" stroke-width="5.4" stroke-linecap="round" stroke-linejoin="round" opacity="0.40"/><path class="p" d="M10 400C18 398 46 395 60 385C74 375 89 348 95 340" fill="none" stroke="#7c7c7c" stroke-width="9.0" stroke-linecap="round" stroke-linejoin="round" opacity="0.8"/><path class="p" d="M0 260C2 267 12 286 12 300C12 314 2 338 0 345" fill="none" stroke="#7c7c7c" stroke-width="10.5" stroke-linecap="round" stroke-linejoin="round" opacity="0.8"/><path class="p" d="M-2 259C-0 265 9 279 9 294C8 309 -3 340 -6 350" fill="none" stroke="#7c7c7c" stroke-width="5.8" stroke-linecap="round" stroke-linejoin="round" opacity="0.56"/><path class="p" d="M-5 270C-3 274 6 283 6 295C7 306 1 331 0 338" fill="none" stroke="#7c7c7c" stroke-width="4.2" stroke-linecap="round" stroke-linejoin="round" opacity="0.40"/><path class="p" d="M150 495C159 490 194 461 205 465C216 469 212 498 215 520C218 542 226 573 225 600C224 627 218 660 210 680C202 700 188 714 175 720C162 726 140 718 130 715C120 712 118 702 115 700" fill="none" stroke="#7c7c7c" stroke-width="13.5" stroke-linecap="round" stroke-linejoin="round" opacity="0.8"/><path class="p" d="M148 501C159 496 199 465 210 469C222 473 213 504 217 526C220 548 232 576 231 601C231 625 222 654 213 674C204 693 192 712 178 719C165 727 145 721 134 717C122 713 116 698 112 694" fill="none" stroke="#7c7c7c" stroke-width="7.4" stroke-linecap="round" stroke-linejoin="round" opacity="0.56"/><path class="p" d="M159 487C167 483 196 455 204 462C213 468 205 503 211 525C216 547 235 570 235 595C236 620 223 655 213 676C204 696 191 712 176 718C161 723 134 709 123 708C111 706 111 709 109 709" fill="none" stroke="#7c7c7c" stroke-width="5.4" stroke-linecap="round" stroke-linejoin="round" opacity="0.40"/><path class="p" d="M170 730 L180 775" fill="none" stroke="#7c7c7c" stroke-width="12.0" stroke-linecap="round" stroke-linejoin="round" opacity="0.8"/><path class="p" d="M0 440C10 445 38 463 60 470C82 477 118 478 130 480" fill="none" stroke="#c8c8c8" stroke-width="3.8" stroke-linecap="round" stroke-linejoin="round" opacity="0.8"/><path class="p" d="M30 640C50 623 105 593 150 540C195 487 275 357 300 320" fill="none" stroke="#d3dbe6" stroke-width="3.8" stroke-linecap="round" stroke-linejoin="round" opacity="0.8"/></g>
<g transform="translate(474 0) scale(0.24085)"></g>
<g transform="translate(0 185) scale(0.24085)" filter="url(#soft)"><path class="p" d="M0 290C7 282 23 253 40 245C57 237 85 232 100 240C115 248 125 282 130 290" fill="none" stroke="#999" stroke-width="10.5" stroke-linecap="round" stroke-linejoin="round" opacity="0.7"/><path class="p" d="M-0 286C8 280 29 260 46 252C62 243 86 230 99 235C113 240 121 276 126 284" fill="none" stroke="#999" stroke-width="5.8" stroke-linecap="round" stroke-linejoin="round" opacity="0.49"/><path class="p" d="M-3 281C3 274 17 245 34 240C52 234 85 240 102 249C118 257 130 281 135 288" fill="none" stroke="#999" stroke-width="4.2" stroke-linecap="round" stroke-linejoin="round" opacity="0.35"/><path class="p" d="M140 300C148 300 175 293 185 300C195 307 198 333 200 340" fill="none" stroke="#aaa" stroke-width="9.0" stroke-linecap="round" stroke-linejoin="round" opacity="0.6"/><path class="p" d="M200 470C204 478 222 503 225 520C228 537 217 562 215 570" fill="none" stroke="#aaa" stroke-width="9.0" stroke-linecap="round" stroke-linejoin="round" opacity="0.6"/><path class="p" d="M0 660C7 657 25 648 40 640C55 632 82 619 90 615" fill="none" stroke="#999" stroke-width="10.5" stroke-linecap="round" stroke-linejoin="round" opacity="0.7"/><path class="p" d="M-1 660C5 657 24 646 38 638C52 630 76 616 84 612" fill="none" stroke="#999" stroke-width="5.8" stroke-linecap="round" stroke-linejoin="round" opacity="0.49"/><path class="p" d="M10 652C15 650 25 650 40 643C55 636 88 614 98 609" fill="none" stroke="#999" stroke-width="4.2" stroke-linecap="round" stroke-linejoin="round" opacity="0.35"/><path class="p" d="M0 690 L60 660" fill="none" stroke="#aaa" stroke-width="7.5" stroke-linecap="round" stroke-linejoin="round" opacity="0.6"/><path class="p" d="M365 0C364 7 356 35 360 40C364 45 383 37 390 30C397 23 398 5 400 0" fill="none" stroke="#7c7c7c" stroke-width="9.0" stroke-linecap="round" stroke-linejoin="round" opacity="0.8"/><path class="p" d="M410 0C413 8 420 38 430 45C440 52 462 48 470 40C478 32 478 7 480 0" fill="none" stroke="#7c7c7c" stroke-width="9.0" stroke-linecap="round" stroke-linejoin="round" opacity="0.8"/><path class="p" d="M500 0C503 6 508 28 520 35C532 42 558 43 570 40C582 37 593 22 595 15C597 8 582 2 580 0" fill="none" stroke="#7c7c7c" stroke-width="9.0" stroke-linecap="round" stroke-linejoin="round" opacity="0.8"/><path class="p" d="M700 400C697 408 682 428 680 450C678 472 678 505 685 530C692 555 702 582 720 600C738 618 765 633 790 640C815 647 857 640 870 640" fill="none" stroke="#7c7c7c" stroke-width="13.5" stroke-linecap="round" stroke-linejoin="round" opacity="0.8"/><path class="p" d="M697 396C694 405 680 426 679 449C678 472 684 511 691 535C699 559 710 575 725 593C741 611 758 635 783 643C809 651 860 640 876 640" fill="none" stroke="#7c7c7c" stroke-width="7.4" stroke-linecap="round" stroke-linejoin="round" opacity="0.56"/><path class="p" d="M702 389C698 401 679 435 678 459C676 484 683 515 692 538C701 560 716 579 730 594C745 610 758 624 781 632C805 641 856 642 870 644" fill="none" stroke="#7c7c7c" stroke-width="5.4" stroke-linecap="round" stroke-linejoin="round" opacity="0.40"/><path class="p" d="M690 420C695 417 711 399 720 400C729 401 741 421 745 425" fill="none" stroke="#7c7c7c" stroke-width="9.0" stroke-linecap="round" stroke-linejoin="round" opacity="0.8"/><path class="p" d="M700 470C702 478 704 507 712 520C720 533 737 546 750 550C763 554 785 546 792 545" fill="none" stroke="#7c7c7c" stroke-width="12.0" stroke-linecap="round" stroke-linejoin="round" opacity="0.8"/><path class="p" d="M706 473C707 482 707 511 714 524C721 537 737 547 749 551C761 555 780 549 786 549" fill="none" stroke="#7c7c7c" stroke-width="6.6" stroke-linecap="round" stroke-linejoin="round" opacity="0.56"/><path class="p" d="M694 479C698 485 707 505 715 516C723 527 729 539 742 545C755 550 786 549 795 549" fill="none" stroke="#7c7c7c" stroke-width="4.8" stroke-linecap="round" stroke-linejoin="round" opacity="0.40"/><path class="p" d="M760 350C757 358 742 382 742 400C742 418 750 445 760 460C770 475 788 485 800 490C812 495 827 490 832 490" fill="none" stroke="#7c7c7c" stroke-width="13.5" stroke-linecap="round" stroke-linejoin="round" opacity="0.8"/><path class="p" d="M755 344C753 354 742 382 742 401C743 420 749 442 758 456C768 470 790 478 801 483C813 489 825 488 829 489" fill="none" stroke="#7c7c7c" stroke-width="7.4" stroke-linecap="round" stroke-linejoin="round" opacity="0.56"/><path class="p" d="M770 353C767 361 753 383 750 399C748 416 744 439 754 454C764 470 798 490 810 495C822 499 825 482 828 479" fill="none" stroke="#7c7c7c" stroke-width="5.4" stroke-linecap="round" stroke-linejoin="round" opacity="0.40"/><path class="p" d="M760 350C767 348 785 333 800 335C815 337 838 345 850 360C862 375 868 407 872 425C876 443 874 462 875 470" fill="none" stroke="#7c7c7c" stroke-width="13.5" stroke-linecap="round" stroke-linejoin="round" opacity="0.8"/><path class="p" d="M760 352C766 349 783 329 799 332C814 334 841 351 852 366C864 380 865 401 868 418C872 436 872 460 873 469" fill="none" stroke="#7c7c7c" stroke-width="7.4" stroke-linecap="round" stroke-linejoin="round" opacity="0.56"/><path class="p" d="M764 343C771 343 792 339 807 340C821 342 837 340 850 354C863 367 877 402 882 421C888 439 882 457 882 464" fill="none" stroke="#7c7c7c" stroke-width="5.4" stroke-linecap="round" stroke-linejoin="round" opacity="0.40"/><path class="p" d="M872 420C874 412 874 382 882 370C890 358 907 345 920 345C933 345 951 354 960 370C969 386 970 418 975 440C980 462 986 494 988 505" fill="none" stroke="#7c7c7c" stroke-width="13.5" stroke-linecap="round" stroke-linejoin="round" opacity="0.8"/><path class="p" d="M868 424C870 416 870 390 879 376C888 362 907 342 920 341C933 339 947 351 956 369C966 386 973 424 977 446C982 469 982 494 983 504" fill="none" stroke="#7c7c7c" stroke-width="7.4" stroke-linecap="round" stroke-linejoin="round" opacity="0.56"/><path class="p" d="M866 430C867 419 867 375 874 360C882 346 895 340 910 343C926 346 957 360 969 378C980 396 975 430 980 451C985 471 995 493 997 501" fill="none" stroke="#7c7c7c" stroke-width="5.4" stroke-linecap="round" stroke-linejoin="round" opacity="0.40"/><path class="p" d="M780 340C788 339 817 330 830 335C843 340 855 364 860 370" fill="none" stroke="#888" stroke-width="7.5" stroke-linecap="round" stroke-linejoin="round" opacity="0.6"/><path class="p" d="M730 600C742 604 778 622 800 625C822 628 850 617 860 615" fill="none" stroke="#999" stroke-width="7.5" stroke-linecap="round" stroke-linejoin="round" opacity="0.6"/><path class="p" d="M870 640C875 647 887 665 900 680C913 695 935 715 950 730C965 745 983 765 990 772" fill="none" stroke="#7c7c7c" stroke-width="13.5" stroke-linecap="round" stroke-linejoin="round" opacity="0.8"/><path class="p" d="M866 646C872 651 889 660 903 673C918 687 938 712 952 728C966 744 982 763 988 770" fill="none" stroke="#7c7c7c" stroke-width="7.4" stroke-linecap="round" stroke-linejoin="round" opacity="0.56"/><path class="p" d="M863 629C868 637 879 661 895 677C911 692 943 707 960 722C978 737 994 758 1000 766" fill="none" stroke="#7c7c7c" stroke-width="5.4" stroke-linecap="round" stroke-linejoin="round" opacity="0.40"/><path class="p" d="M882 652 L940 742" fill="none" stroke="#7c7c7c" stroke-width="9.0" stroke-linecap="round" stroke-linejoin="round" opacity="0.8"/><path class="p" d="M830 520C838 527 868 543 880 560C892 577 897 610 900 620" fill="none" stroke="#c8c8c8" stroke-width="3.8" stroke-linecap="round" stroke-linejoin="round" opacity="0.8"/><path class="p" d="M960 560C962 567 971 583 975 600C979 617 982 650 984 660" fill="none" stroke="#bbb" stroke-width="4.5" stroke-linecap="round" stroke-linejoin="round" opacity="0.8"/></g>
<g transform="translate(0 185) scale(0.24085)"><path d="M-5 300L60 420L120 470L90 560L30 590L-5 615z" fill="#f9cfa0"/><ellipse cx="132" cy="552" rx="76" ry="60" fill="#f9cfa0" stroke="#0a0a0a" stroke-width="6" transform="rotate(-8 132 552)"/><ellipse cx="152" cy="415" rx="56" ry="78" fill="#f9cfa0" stroke="#0a0a0a" stroke-width="6" transform="rotate(38 152 415)"/><ellipse cx="72" cy="345" rx="60" ry="82" fill="#f9cfa0" stroke="#0a0a0a" stroke-width="6" transform="rotate(18 72 345)"/><path d="M0 395L45 425L100 440L112 470L98 520L62 560L0 585z" fill="#f9cfa0"/><path d="M-5 600L30 580L10 610z" fill="#f9cfa0"/><path d="M-5 612C10 600 25 588 38 578" fill="none" stroke="#0a0a0a" stroke-width="6"/><ellipse cx="68" cy="358" rx="33" ry="47" fill="#5a2d1e" stroke="#0a0a0a" stroke-width="5" transform="rotate(15 68 358)"/><ellipse cx="150" cy="420" rx="31" ry="45" fill="#5a2d1e" stroke="#0a0a0a" stroke-width="5" transform="rotate(42 150 420)"/><ellipse cx="130" cy="556" rx="46" ry="32" fill="#5a2d1e" stroke="#0a0a0a" stroke-width="5" transform="rotate(-8 130 556)"/><ellipse cx="2" cy="497" rx="58" ry="73" fill="#5a2d1e" stroke="#0a0a0a" stroke-width="5"/></g>
<g transform="translate(237 185) scale(0.24085)" filter="url(#soft)"><path class="p" d="M60 0C65 8 78 35 90 50C102 65 115 80 130 90C145 100 166 103 180 110C194 117 209 127 215 130" fill="none" stroke="#7c7c7c" stroke-width="13.5" stroke-linecap="round" stroke-linejoin="round" opacity="0.8"/><path class="p" d="M58 5C64 12 84 35 95 49C105 63 110 78 124 90C138 101 164 109 178 116C193 122 205 126 211 128" fill="none" stroke="#7c7c7c" stroke-width="7.4" stroke-linecap="round" stroke-linejoin="round" opacity="0.56"/><path class="p" d="M69 -10C72 1 77 42 88 57C99 72 122 73 136 80C149 87 155 93 170 100C184 108 215 121 224 125" fill="none" stroke="#7c7c7c" stroke-width="5.4" stroke-linecap="round" stroke-linejoin="round" opacity="0.40"/><path class="p" d="M110 20C117 28 135 57 150 70C165 83 192 95 200 100" fill="none" stroke="#888" stroke-width="9.0" stroke-linecap="round" stroke-linejoin="round" opacity="0.6"/><path class="p" d="M0 520C10 530 37 563 60 580C83 597 121 612 140 622C159 632 167 639 172 642" fill="none" stroke="#7c7c7c" stroke-width="12.0" stroke-linecap="round" stroke-linejoin="round" opacity="0.8"/><path class="p" d="M3 526C13 534 34 560 58 577C82 593 128 612 146 624C165 635 165 641 169 645" fill="none" stroke="#7c7c7c" stroke-width="6.6" stroke-linecap="round" stroke-linejoin="round" opacity="0.56"/><path class="p" d="M-4 515C5 527 24 567 49 586C75 604 127 617 149 625C171 633 176 630 182 632" fill="none" stroke="#7c7c7c" stroke-width="4.8" stroke-linecap="round" stroke-linejoin="round" opacity="0.40"/><path class="p" d="M0 420 L2 500" fill="none" stroke="#7c7c7c" stroke-width="10.5" stroke-linecap="round" stroke-linejoin="round" opacity="0.8"/><path class="p" d="M235 500C228 512 204 543 190 570C176 597 162 626 150 660C138 694 125 756 120 775" fill="none" stroke="#7c7c7c" stroke-width="13.5" stroke-linecap="round" stroke-linejoin="round" opacity="0.8"/><path class="p" d="M231 500C225 512 210 550 196 576C183 602 161 623 148 657C136 690 124 755 119 775" fill="none" stroke="#7c7c7c" stroke-width="7.4" stroke-linecap="round" stroke-linejoin="round" opacity="0.56"/><path class="p" d="M244 493C236 507 211 546 197 575C182 604 169 633 157 666C145 699 128 754 122 771" fill="none" stroke="#7c7c7c" stroke-width="5.4" stroke-linecap="round" stroke-linejoin="round" opacity="0.40"/><path class="p" d="M215 560 L180 640" fill="none" stroke="#888" stroke-width="7.5" stroke-linecap="round" stroke-linejoin="round" opacity="0.6"/><path class="p" d="M30 625C37 628 60 629 70 640C80 651 92 675 90 690C88 705 75 725 60 730C45 735 10 723 0 722" fill="none" stroke="#7c7c7c" stroke-width="12.0" stroke-linecap="round" stroke-linejoin="round" opacity="0.8"/><path class="p" d="M27 623C35 625 64 622 74 634C84 646 89 679 86 694C83 709 72 719 56 724C41 729 4 723 -7 723" fill="none" stroke="#7c7c7c" stroke-width="6.6" stroke-linecap="round" stroke-linejoin="round" opacity="0.56"/><path class="p" d="M26 636C35 638 69 643 78 651C88 658 89 668 85 681C80 694 64 723 51 730C38 737 12 722 5 721" fill="none" stroke="#7c7c7c" stroke-width="4.8" stroke-linecap="round" stroke-linejoin="round" opacity="0.40"/><path class="p" d="M430 690C422 697 395 716 380 730C365 744 347 768 340 775" fill="none" stroke="#7c7c7c" stroke-width="10.5" stroke-linecap="round" stroke-linejoin="round" opacity="0.8"/><path class="p" d="M426 689C419 696 395 717 382 732C368 748 350 772 343 780" fill="none" stroke="#7c7c7c" stroke-width="5.8" stroke-linecap="round" stroke-linejoin="round" opacity="0.56"/><path class="p" d="M434 682C426 689 403 710 387 725C372 741 349 764 341 772" fill="none" stroke="#7c7c7c" stroke-width="4.2" stroke-linecap="round" stroke-linejoin="round" opacity="0.40"/><path class="p" d="M450 680C455 688 473 714 480 730C487 746 490 768 492 775" fill="none" stroke="#7c7c7c" stroke-width="10.5" stroke-linecap="round" stroke-linejoin="round" opacity="0.8"/><path class="p" d="M453 676C457 684 471 709 476 726C482 744 485 771 487 780" fill="none" stroke="#7c7c7c" stroke-width="5.8" stroke-linecap="round" stroke-linejoin="round" opacity="0.56"/><path class="p" d="M452 676C456 687 471 725 478 741C484 756 490 764 492 769" fill="none" stroke="#7c7c7c" stroke-width="4.2" stroke-linecap="round" stroke-linejoin="round" opacity="0.40"/><path class="p" d="M228 110C230 125 233 172 240 200C247 228 255 258 270 280C285 302 320 322 330 330" fill="none" stroke="#8a8a8a" stroke-width="10.5" stroke-linecap="round" stroke-linejoin="round" opacity="0.6"/><path class="p" d="M232 112C235 126 241 166 247 194C253 223 255 261 270 284C284 308 324 327 335 336" fill="none" stroke="#8a8a8a" stroke-width="5.8" stroke-linecap="round" stroke-linejoin="round" opacity="0.42"/><path class="p" d="M218 105C220 120 221 164 232 193C242 223 262 259 280 282C298 304 330 320 339 327" fill="none" stroke="#8a8a8a" stroke-width="4.2" stroke-linecap="round" stroke-linejoin="round" opacity="0.30"/><path class="p" d="M538 90C535 103 520 146 522 170C524 194 544 222 548 232" fill="none" stroke="#8a8a8a" stroke-width="10.5" stroke-linecap="round" stroke-linejoin="round" opacity="0.6"/><path class="p" d="M543 89C539 103 517 151 519 174C520 197 548 218 554 226" fill="none" stroke="#8a8a8a" stroke-width="5.8" stroke-linecap="round" stroke-linejoin="round" opacity="0.42"/><path class="p" d="M540 93C536 105 516 145 516 167C516 189 536 216 540 225" fill="none" stroke="#8a8a8a" stroke-width="4.2" stroke-linecap="round" stroke-linejoin="round" opacity="0.30"/><path class="p" d="M842 550C844 558 854 581 852 600C850 619 835 652 832 662" fill="none" stroke="#8a8a8a" stroke-width="10.5" stroke-linecap="round" stroke-linejoin="round" opacity="0.7"/><path class="p" d="M839 551C841 559 856 578 854 596C852 614 830 649 825 660" fill="none" stroke="#8a8a8a" stroke-width="5.8" stroke-linecap="round" stroke-linejoin="round" opacity="0.49"/><path class="p" d="M846 543C846 551 849 573 848 593C847 613 840 651 838 663" fill="none" stroke="#8a8a8a" stroke-width="4.2" stroke-linecap="round" stroke-linejoin="round" opacity="0.35"/><path class="p" d="M940 640C945 650 962 678 970 700C978 722 985 762 988 775" fill="none" stroke="#7c7c7c" stroke-width="12.0" stroke-linecap="round" stroke-linejoin="round" opacity="0.8"/><path class="p" d="M934 634C940 645 959 678 969 701C978 723 986 758 990 769" fill="none" stroke="#7c7c7c" stroke-width="6.6" stroke-linecap="round" stroke-linejoin="round" opacity="0.56"/><path class="p" d="M933 644C939 653 959 672 968 695C977 719 981 770 984 785" fill="none" stroke="#7c7c7c" stroke-width="4.8" stroke-linecap="round" stroke-linejoin="round" opacity="0.40"/><path class="p" d="M195 300C198 317 204 373 215 400C226 427 252 450 260 460" fill="none" stroke="#999" stroke-width="9.0" stroke-linecap="round" stroke-linejoin="round" opacity="0.6"/><path class="p" d="M330 500C335 513 342 559 360 580C378 601 427 618 440 625" fill="none" stroke="#999" stroke-width="9.0" stroke-linecap="round" stroke-linejoin="round" opacity="0.6"/><path class="p" d="M600 690C613 696 653 722 680 725C707 728 747 708 760 705" fill="none" stroke="#999" stroke-width="9.0" stroke-linecap="round" stroke-linejoin="round" opacity="0.55"/><path class="p" d="M405 500 L410 570" fill="none" stroke="#999" stroke-width="6.0" stroke-linecap="round" stroke-linejoin="round" opacity="0.6"/><path class="p" d="M640 600 L665 680" fill="none" stroke="#aaa" stroke-width="6.0" stroke-linecap="round" stroke-linejoin="round" opacity="0.6"/><path class="p" d="M228 110C230 125 233 172 240 200C247 228 254 258 270 280C286 302 324 323 335 332" fill="none" stroke="#808080" stroke-width="12.0" stroke-linecap="round" stroke-linejoin="round" opacity="0.6"/><path class="p" d="M225 111C227 126 230 169 238 199C246 228 259 265 275 287C291 308 323 321 333 328" fill="none" stroke="#808080" stroke-width="6.6" stroke-linecap="round" stroke-linejoin="round" opacity="0.42"/><path class="p" d="M233 103C232 121 223 178 229 209C235 239 251 265 268 287C286 309 322 332 333 340" fill="none" stroke="#808080" stroke-width="4.8" stroke-linecap="round" stroke-linejoin="round" opacity="0.30"/><path class="p" d="M538 88C535 102 520 146 522 170C524 194 544 224 548 235" fill="none" stroke="#7a7a7a" stroke-width="13.5" stroke-linecap="round" stroke-linejoin="round" opacity="0.7"/><path class="p" d="M537 83C534 98 513 144 515 171C517 197 544 229 550 241" fill="none" stroke="#7a7a7a" stroke-width="7.4" stroke-linecap="round" stroke-linejoin="round" opacity="0.49"/><path class="p" d="M529 91C527 104 517 147 519 170C521 193 537 220 540 230" fill="none" stroke="#7a7a7a" stroke-width="5.4" stroke-linecap="round" stroke-linejoin="round" opacity="0.35"/><path class="p" d="M262 100C268 106 286 122 300 135C314 148 338 172 345 180" fill="none" stroke="#999" stroke-width="7.5" stroke-linecap="round" stroke-linejoin="round" opacity="0.6"/><path class="p" d="M392 120C396 128 400 159 415 165C430 171 469 157 480 155" fill="none" stroke="#aaa" stroke-width="6.0" stroke-linecap="round" stroke-linejoin="round" opacity="0.6"/><path class="p" d="M420 150C428 157 457 182 470 190C483 198 495 198 500 200" fill="none" stroke="#b0b0b0" stroke-width="4.5" stroke-linecap="round" stroke-linejoin="round" opacity="0.6"/><path class="p" d="M195 300C198 317 204 373 215 400C226 427 254 452 262 462" fill="none" stroke="#8a8a8a" stroke-width="10.5" stroke-linecap="round" stroke-linejoin="round" opacity="0.5"/><path class="p" d="M195 306C198 322 198 373 210 400C221 427 257 457 266 469" fill="none" stroke="#8a8a8a" stroke-width="5.8" stroke-linecap="round" stroke-linejoin="round" opacity="0.35"/><path class="p" d="M188 292C194 312 213 384 225 410C237 437 255 445 262 452" fill="none" stroke="#8a8a8a" stroke-width="4.2" stroke-linecap="round" stroke-linejoin="round" opacity="0.25"/><path class="p" d="M330 500C335 513 342 559 360 580C378 601 427 620 440 628" fill="none" stroke="#8a8a8a" stroke-width="10.5" stroke-linecap="round" stroke-linejoin="round" opacity="0.5"/><path class="p" d="M336 498C341 512 348 561 366 582C384 602 431 616 445 623" fill="none" stroke="#8a8a8a" stroke-width="5.8" stroke-linecap="round" stroke-linejoin="round" opacity="0.35"/><path class="p" d="M336 494C340 510 339 566 358 588C376 609 432 615 447 621" fill="none" stroke="#8a8a8a" stroke-width="4.2" stroke-linecap="round" stroke-linejoin="round" opacity="0.25"/><path class="p" d="M540 620C550 633 577 682 600 700C623 718 653 727 680 728C707 729 747 711 760 708" fill="none" stroke="#909090" stroke-width="9.0" stroke-linecap="round" stroke-linejoin="round" opacity="0.5"/><path class="p" d="M860 560C867 573 883 630 900 640C917 650 950 623 960 620" fill="none" stroke="#999" stroke-width="7.5" stroke-linecap="round" stroke-linejoin="round" opacity="0.5"/><path class="p" d="M420 300C428 313 465 357 470 380C475 403 442 433 450 440C458 447 508 423 520 420" fill="none" stroke="#b9cfe8" stroke-width="3.8" stroke-linecap="round" stroke-linejoin="round" opacity="0.8"/><path class="p" d="M700 420C707 433 737 473 740 500C743 527 712 570 720 580C728 590 778 563 790 560" fill="none" stroke="#c5d6ea" stroke-width="3.8" stroke-linecap="round" stroke-linejoin="round" opacity="0.8"/><path class="p" d="M600 140C608 150 633 193 650 200C667 207 682 173 700 180C718 187 750 230 760 240" fill="none" stroke="#c5d6ea" stroke-width="3.8" stroke-linecap="round" stroke-linejoin="round" opacity="0.8"/><path class="p" d="M270 360C275 370 297 402 300 420C303 438 285 467 290 470C295 473 318 432 330 440C342 448 355 507 360 520" fill="none" stroke="#b9cfe8" stroke-width="3.8" stroke-linecap="round" stroke-linejoin="round" opacity="0.8"/><path class="p" d="M350 480C358 487 395 507 400 520C405 533 373 558 380 560C387 562 417 530 440 530C463 530 507 555 520 560" fill="none" stroke="#b9cfe8" stroke-width="3.8" stroke-linecap="round" stroke-linejoin="round" opacity="0.8"/><path class="p" d="M560 240C567 250 587 285 600 300C613 315 633 325 640 330" fill="none" stroke="#c5d6ea" stroke-width="3.8" stroke-linecap="round" stroke-linejoin="round" opacity="0.8"/><path class="p" d="M900 440C905 450 927 480 930 500C933 520 922 550 920 560" fill="none" stroke="#c5d6ea" stroke-width="3.8" stroke-linecap="round" stroke-linejoin="round" opacity="0.8"/><path class="p" d="M600 690C610 688 643 678 660 680C677 682 680 705 700 700C720 695 767 658 780 650" fill="none" stroke="#c5d6ea" stroke-width="3.8" stroke-linecap="round" stroke-linejoin="round" opacity="0.8"/><path class="p" d="M100 265C150 266 300 270 400 270C500 270 650 263 700 262" fill="none" stroke="#cfcfcf" stroke-width="3.8" stroke-linecap="round" stroke-linejoin="round" opacity="0.8"/><path class="p" d="M700 330C725 329 803 324 850 325C897 326 962 333 984 335" fill="none" stroke="#d3d3d3" stroke-width="3.8" stroke-linecap="round" stroke-linejoin="round" opacity="0.8"/></g>
<g transform="translate(237 185) scale(0.24085)"><path d="M350 340C338 338 302 340 280 330C258 320 232 302 220 280C208 258 206 228 205 200C204 172 210 133 215 110C220 87 231 71 238 62C245 53 246 52 256 57C266 62 283 71 300 90C317 109 342 146 360 170C378 194 398 224 405 235" fill="none" stroke="#0a0a0a" stroke-width="7" stroke-linecap="round" stroke-linejoin="round"/><path d="M375 165C374 156 368 127 370 110C372 93 380 75 385 65C390 55 397 52 403 50C409 48 412 47 420 54C428 61 438 75 450 90C462 105 479 132 490 145C501 158 511 166 515 170" fill="none" stroke="#0a0a0a" stroke-width="7" stroke-linecap="round" stroke-linejoin="round"/><path d="M525 235C522 226 511 199 510 180C509 161 513 138 520 120C527 102 542 82 550 70C558 58 567 49 570 45" fill="none" stroke="#0a0a0a" stroke-width="7" stroke-linecap="round" stroke-linejoin="round"/><path d="M570 45C575 51 591 70 600 80C609 90 621 101 625 105" fill="none" stroke="#0a0a0a" stroke-width="7" stroke-linecap="round" stroke-linejoin="round"/><path d="M520 300C524 307 533 329 545 340C557 351 574 361 590 365C606 369 632 365 640 365" fill="none" stroke="#0a0a0a" stroke-width="7" stroke-linecap="round" stroke-linejoin="round"/><path d="M190 258C188 265 177 280 175 300C173 320 174 355 180 380C186 405 197 432 210 450C223 468 243 478 260 485C277 492 302 489 310 490" fill="none" stroke="#0a0a0a" stroke-width="7" stroke-linecap="round" stroke-linejoin="round"/><path d="M315 455C312 464 298 489 300 510C302 531 315 561 330 580C345 599 368 615 390 625C412 635 440 640 460 640C480 640 502 628 510 625" fill="none" stroke="#0a0a0a" stroke-width="7" stroke-linecap="round" stroke-linejoin="round"/><path d="M510 585C513 596 517 629 530 650C543 671 567 695 590 710C613 725 642 738 670 740C698 742 735 733 760 720C785 707 806 682 820 660C834 638 838 609 845 590C852 571 858 552 860 545" fill="none" stroke="#0a0a0a" stroke-width="7" stroke-linecap="round" stroke-linejoin="round"/><path d="M815 665C826 663 858 662 880 655C902 648 932 634 950 620C968 606 983 578 990 570" fill="none" stroke="#0a0a0a" stroke-width="7" stroke-linecap="round" stroke-linejoin="round"/><path d="M975 430 L990 475" fill="none" stroke="#0a0a0a" stroke-width="7" stroke-linecap="round" stroke-linejoin="round"/><path d="M640 20 L660 -5" fill="none" stroke="#0a0a0a" stroke-width="7" stroke-linecap="round" stroke-linejoin="round"/><path d="M690 0C698 8 724 38 740 50C756 62 776 71 783 75" fill="none" stroke="#0a0a0a" stroke-width="7" stroke-linecap="round" stroke-linejoin="round"/><path d="M783 75C794 72 828 68 850 55C872 42 904 5 915 -5" fill="none" stroke="#0a0a0a" stroke-width="7" stroke-linecap="round" stroke-linejoin="round"/><path d="M935 -30C938 -22 950 5 955 20C960 35 963 47 962 60C961 73 952 93 950 100" fill="none" stroke="#0a0a0a" stroke-width="7" stroke-linecap="round" stroke-linejoin="round"/><circle cx="567" cy="45" r="18" fill="#fff" stroke="#29297c" stroke-width="6"/><circle cx="783" cy="75" r="18" fill="#fff" stroke="#29297c" stroke-width="6"/><circle cx="522" cy="303" r="18" fill="#fff" stroke="#29297c" stroke-width="6"/><circle cx="662" cy="-8" r="18" fill="#fff" stroke="#29297c" stroke-width="6"/><circle cx="935" cy="-30" r="18" fill="#fff" stroke="#29297c" stroke-width="6"/><path d="M625 73L652 100L625 127L598 100z" fill="#fff" stroke="#29297c" stroke-width="6"/><path d="M665 125L692 152L665 179L638 152z" fill="#fff" stroke="#29297c" stroke-width="6"/><path d="M560 231L587 258L560 285L533 258z" fill="#fff" stroke="#29297c" stroke-width="6"/><path d="M612 248L639 275L612 302L585 275z" fill="#fff" stroke="#29297c" stroke-width="6"/><path d="M660 333L687 360L660 387L633 360z" fill="#fff" stroke="#29297c" stroke-width="6"/><path d="M893 111L920 138L893 165L866 138z" fill="#fff" stroke="#29297c" stroke-width="6"/><path d="M940 91L967 118L940 145L913 118z" fill="#fff" stroke="#29297c" stroke-width="6"/><path d="M138 522L190 548L168 556L160 580z" fill="#0a0a0a"/></g>
<g transform="translate(474 185) scale(0.24085)" filter="url(#soft)"><path class="p" d="M180 0C175 10 163 40 150 60C137 80 108 110 100 120" fill="none" stroke="#7c7c7c" stroke-width="12.0" stroke-linecap="round" stroke-linejoin="round" opacity="0.8"/><path class="p" d="M176 -1C172 9 164 39 150 58C137 78 104 107 95 116" fill="none" stroke="#7c7c7c" stroke-width="6.6" stroke-linecap="round" stroke-linejoin="round" opacity="0.56"/><path class="p" d="M185 9C177 18 153 45 140 61C127 78 111 102 106 110" fill="none" stroke="#7c7c7c" stroke-width="4.8" stroke-linecap="round" stroke-linejoin="round" opacity="0.40"/><path class="p" d="M20 140C27 144 47 160 60 162C73 164 93 152 100 150" fill="none" stroke="#999" stroke-width="7.5" stroke-linecap="round" stroke-linejoin="round" opacity="0.6"/><path class="p" d="M150 350C158 367 185 415 200 450C215 485 228 527 240 560C252 593 261 614 270 650C279 686 288 754 292 775" fill="none" stroke="#8a8a8a" stroke-width="10.5" stroke-linecap="round" stroke-linejoin="round" opacity="0.75"/><path class="p" d="M155 345C163 362 187 415 201 451C216 486 231 524 242 557C253 591 261 615 269 651C277 688 287 756 291 777" fill="none" stroke="#8a8a8a" stroke-width="5.8" stroke-linecap="round" stroke-linejoin="round" opacity="0.52"/><path class="p" d="M149 349C156 366 174 418 190 453C205 487 225 520 240 554C254 588 267 621 276 656C284 692 289 749 291 768" fill="none" stroke="#8a8a8a" stroke-width="4.2" stroke-linecap="round" stroke-linejoin="round" opacity="0.38"/><path class="p" d="M215 430C222 455 248 535 260 580C272 625 281 680 285 700" fill="none" stroke="#999" stroke-width="7.5" stroke-linecap="round" stroke-linejoin="round" opacity="0.6"/><path class="p" d="M100 330C103 338 120 362 120 380C120 398 103 430 100 440" fill="none" stroke="#999" stroke-width="7.5" stroke-linecap="round" stroke-linejoin="round" opacity="0.6"/><path class="p" d="M0 640C7 653 30 698 40 720C50 742 57 766 60 775" fill="none" stroke="#8a8a8a" stroke-width="10.5" stroke-linecap="round" stroke-linejoin="round" opacity="0.7"/><path class="p" d="M-0 634C5 649 26 696 35 719C44 742 51 765 54 774" fill="none" stroke="#8a8a8a" stroke-width="5.8" stroke-linecap="round" stroke-linejoin="round" opacity="0.49"/><path class="p" d="M0 630C7 643 32 686 43 711C54 736 61 769 65 781" fill="none" stroke="#8a8a8a" stroke-width="4.2" stroke-linecap="round" stroke-linejoin="round" opacity="0.35"/><path class="p" d="M290 700C302 698 335 693 360 690C385 687 418 687 440 680C462 673 483 655 492 650" fill="none" stroke="#7c7c7c" stroke-width="12.0" stroke-linecap="round" stroke-linejoin="round" opacity="0.8"/><path class="p" d="M290 694C302 693 334 691 360 688C386 685 423 680 446 675C469 670 489 660 497 657" fill="none" stroke="#7c7c7c" stroke-width="6.6" stroke-linecap="round" stroke-linejoin="round" opacity="0.56"/><path class="p" d="M295 707C305 706 329 703 353 701C377 698 415 700 440 690C464 680 491 651 501 643" fill="none" stroke="#7c7c7c" stroke-width="4.8" stroke-linecap="round" stroke-linejoin="round" opacity="0.40"/><path class="p" d="M200 760C213 752 257 720 280 710C303 700 330 702 340 700" fill="none" stroke="#999" stroke-width="7.5" stroke-linecap="round" stroke-linejoin="round" opacity="0.6"/><path class="p" d="M360 760C365 755 378 734 390 730C402 726 423 734 430 735" fill="none" stroke="#7c7c7c" stroke-width="12.0" stroke-linecap="round" stroke-linejoin="round" opacity="0.8"/><path class="p" d="M364 766C367 760 372 734 384 728C396 722 425 730 434 730" fill="none" stroke="#7c7c7c" stroke-width="6.6" stroke-linecap="round" stroke-linejoin="round" opacity="0.56"/><path class="p" d="M369 755C373 750 387 724 397 722C407 720 425 741 430 744" fill="none" stroke="#7c7c7c" stroke-width="4.8" stroke-linecap="round" stroke-linejoin="round" opacity="0.40"/><path class="p" d="M490 650C489 638 482 600 485 580C488 560 498 542 510 530C522 518 545 511 560 510C575 509 591 517 600 525C609 533 617 548 615 560C613 572 598 591 590 600C582 609 573 612 570 615" fill="none" stroke="#7c7c7c" stroke-width="13.5" stroke-linecap="round" stroke-linejoin="round" opacity="0.8"/><path class="p" d="M486 647C486 635 482 598 485 577C488 557 492 536 504 526C515 515 539 515 555 516C572 517 593 523 603 531C612 539 613 552 610 564C607 576 591 592 585 600C578 609 574 611 572 613" fill="none" stroke="#7c7c7c" stroke-width="7.4" stroke-linecap="round" stroke-linejoin="round" opacity="0.56"/><path class="p" d="M498 651C496 641 486 607 487 588C487 570 489 554 501 541C514 527 545 511 563 508C580 504 596 511 607 520C617 529 629 547 626 562C623 576 596 598 587 606C577 614 572 608 569 608" fill="none" stroke="#7c7c7c" stroke-width="5.4" stroke-linecap="round" stroke-linejoin="round" opacity="0.40"/><path class="p" d="M600 560C607 557 623 542 640 540C657 538 686 537 700 545C714 553 725 574 725 590C725 606 712 628 700 640C688 652 665 661 650 665C635 669 617 665 610 665" fill="none" stroke="#7c7c7c" stroke-width="13.5" stroke-linecap="round" stroke-linejoin="round" opacity="0.8"/><path class="p" d="M603 554C610 551 628 537 644 537C661 536 688 542 702 552C716 561 727 579 726 592C725 606 711 622 697 633C684 644 658 655 643 660C629 665 617 663 612 664" fill="none" stroke="#7c7c7c" stroke-width="7.4" stroke-linecap="round" stroke-linejoin="round" opacity="0.56"/><path class="p" d="M600 569C606 563 615 540 632 534C649 528 690 526 703 534C717 543 716 570 714 587C712 604 703 624 691 637C680 650 657 663 644 667C631 670 617 660 612 658" fill="none" stroke="#7c7c7c" stroke-width="5.4" stroke-linecap="round" stroke-linejoin="round" opacity="0.40"/><path class="p" d="M730 610C734 618 754 643 755 660C756 677 746 696 735 710C724 724 706 738 690 745C674 752 652 752 640 750C628 748 623 738 620 735" fill="none" stroke="#7c7c7c" stroke-width="13.5" stroke-linecap="round" stroke-linejoin="round" opacity="0.8"/><path class="p" d="M732 610C735 619 750 650 750 666C750 682 742 692 731 705C720 719 699 739 684 747C670 755 656 756 645 754C634 751 623 735 619 732" fill="none" stroke="#7c7c7c" stroke-width="7.4" stroke-linecap="round" stroke-linejoin="round" opacity="0.56"/><path class="p" d="M719 613C725 620 753 641 756 657C760 673 748 693 738 709C729 724 717 742 700 750C682 758 649 761 634 759C620 756 614 740 610 736" fill="none" stroke="#7c7c7c" stroke-width="5.4" stroke-linecap="round" stroke-linejoin="round" opacity="0.40"/><path class="p" d="M520 540C529 537 561 519 575 520C589 521 600 541 605 545" fill="none" stroke="#888" stroke-width="7.5" stroke-linecap="round" stroke-linejoin="round" opacity="0.6"/><path class="p" d="M580 650C583 658 598 685 600 700C602 715 592 733 590 740" fill="none" stroke="#aaa" stroke-width="6.0" stroke-linecap="round" stroke-linejoin="round" opacity="0.6"/><path class="p" d="M640 600 L680 610" fill="none" stroke="#aaa" stroke-width="6.0" stroke-linecap="round" stroke-linejoin="round" opacity="0.6"/><path class="p" d="M500 640C503 650 520 680 520 700C520 720 503 750 500 760" fill="none" stroke="#aaa" stroke-width="6.0" stroke-linecap="round" stroke-linejoin="round" opacity="0.6"/><path class="p" d="M0 600C10 593 35 573 60 560C85 547 135 527 150 520" fill="none" stroke="#d0d8e4" stroke-width="3.8" stroke-linecap="round" stroke-linejoin="round" opacity="0.8"/><path class="p" d="M85 283 L153 265" fill="none" stroke="#0a0a0a" stroke-width="6.0" stroke-linecap="round" stroke-linejoin="round" opacity="1"/></g>
<g transform="translate(474 185) scale(0.24085)"><path d="M-5 105C6 105 38 100 60 105C82 110 110 121 130 135C150 149 168 174 180 190C192 206 197 223 200 230" fill="none" stroke="#0a0a0a" stroke-width="7" stroke-linecap="round" stroke-linejoin="round"/><path d="M200 228C201 240 207 273 208 300C209 327 208 370 205 390C202 410 194 413 192 418" fill="none" stroke="#0a0a0a" stroke-width="7" stroke-linecap="round" stroke-linejoin="round"/><path d="M125 330C126 342 132 377 130 400C128 423 122 451 110 470C98 489 79 505 60 515C41 525 6 528 -5 530" fill="none" stroke="#0a0a0a" stroke-width="7" stroke-linecap="round" stroke-linejoin="round"/><circle cx="200" cy="228" r="18" fill="#fff" stroke="#29297c" stroke-width="6"/><path d="M85 256L112 283L85 310L58 283z" fill="#fff" stroke="#29297c" stroke-width="6"/><path d="M153 238L180 265L153 292L126 265z" fill="#fff" stroke="#29297c" stroke-width="6"/><path d="M190 393L217 420L190 447L163 420z" fill="#fff" stroke="#29297c" stroke-width="6"/></g>
<g transform="translate(0 370) scale(0.24085)" filter="url(#soft)"><path class="p" d="M60 40C59 50 50 73 55 100C60 127 84 183 90 200" fill="none" stroke="#aaa" stroke-width="12.0" stroke-linecap="round" stroke-linejoin="round" opacity="0.6"/><path class="p" d="M59 36C57 48 45 77 49 104C53 131 77 185 83 201" fill="none" stroke="#aaa" stroke-width="6.6" stroke-linecap="round" stroke-linejoin="round" opacity="0.42"/><path class="p" d="M70 32C66 44 45 74 48 102C52 131 83 186 90 203" fill="none" stroke="#aaa" stroke-width="4.8" stroke-linecap="round" stroke-linejoin="round" opacity="0.30"/><path class="p" d="M135 35 L170 50" fill="none" stroke="#bbb" stroke-width="9.0" stroke-linecap="round" stroke-linejoin="round" opacity="0.6"/><path class="p" d="M410 100C415 99 430 87 440 95C450 103 463 128 470 150C477 172 478 217 480 230" fill="none" stroke="#bbb" stroke-width="10.5" stroke-linecap="round" stroke-linejoin="round" opacity="0.6"/><path class="p" d="M414 95C418 95 429 82 437 92C446 102 456 132 464 155C471 179 481 220 484 233" fill="none" stroke="#bbb" stroke-width="5.8" stroke-linecap="round" stroke-linejoin="round" opacity="0.42"/><path class="p" d="M399 108C407 105 433 87 445 94C458 101 471 128 475 149C480 170 474 209 474 221" fill="none" stroke="#bbb" stroke-width="4.2" stroke-linecap="round" stroke-linejoin="round" opacity="0.30"/><path class="p" d="M0 350C1 362 5 400 5 420C5 440 1 462 0 470" fill="none" stroke="#bbb" stroke-width="10.5" stroke-linecap="round" stroke-linejoin="round" opacity="0.6"/><path class="p" d="M-4 344C-3 357 2 402 3 423C4 445 3 466 3 475" fill="none" stroke="#bbb" stroke-width="5.8" stroke-linecap="round" stroke-linejoin="round" opacity="0.42"/><path class="p" d="M5 345C5 357 6 398 6 419C6 440 6 462 6 471" fill="none" stroke="#bbb" stroke-width="4.2" stroke-linecap="round" stroke-linejoin="round" opacity="0.30"/><path class="p" d="M710 260C715 254 725 231 740 225C755 219 790 225 800 225" fill="none" stroke="#d0d0d0" stroke-width="3.8" stroke-linecap="round" stroke-linejoin="round" opacity="0.8"/><path class="p" d="M700 330C698 342 687 380 690 400C693 420 708 438 720 450C732 462 753 467 760 470" fill="none" stroke="#d0d0d0" stroke-width="3.8" stroke-linecap="round" stroke-linejoin="round" opacity="0.8"/><path class="p" d="M760 470C762 477 763 501 770 510C777 519 795 522 800 525" fill="none" stroke="#d4d4d4" stroke-width="3.8" stroke-linecap="round" stroke-linejoin="round" opacity="0.8"/><path class="p" d="M820 225 L880 240" fill="none" stroke="#d8d8d8" stroke-width="3.0" stroke-linecap="round" stroke-linejoin="round" opacity="0.8"/><path class="p" d="M940 -5 L990 25" fill="none" stroke="#7c7c7c" stroke-width="13.5" stroke-linecap="round" stroke-linejoin="round" opacity="0.8"/></g>
<g transform="translate(0 370) scale(0.24085)"><path d="M-8 560C-3 547 14 503 20 480C26 457 31 442 30 420C29 398 18 362 15 350L15 350C22 355 44 368 60 380C76 392 97 409 110 420C123 431 135 441 140 445L140 445C139 441 140 436 135 420C130 404 116 372 110 350C104 328 99 312 100 290C101 268 115 245 115 220C115 195 109 170 100 140C91 110 67 58 60 42L60 42C67 45 88 57 100 62C112 67 125 70 130 72L130 72C138 69 160 56 180 55C200 54 227 57 250 65C273 73 300 90 320 105C340 120 357 140 370 155C383 170 395 188 400 195L400 195C402 188 403 163 410 150C417 137 431 124 440 118C449 112 458 113 462 112L462 112C462 120 466 143 464 160C462 177 452 206 450 215L450 215C455 219 462 228 480 240C498 252 537 270 560 290C583 310 604 335 620 360C636 385 647 418 655 440C663 462 666 482 668 490L668 490C677 492 703 492 720 505C737 518 758 544 770 570C782 596 790 625 795 660C800 695 801 760 802 780L-8 780z" fill="#7b452b" stroke="#0a0a0a" stroke-width="6" stroke-linejoin="round"/><path d="M60 42C68 47 93 59 110 70C127 81 148 99 160 110C172 121 181 131 185 135" fill="none" stroke="#0a0a0a" stroke-width="5.5" stroke-linecap="round" stroke-linejoin="round"/><path d="M400 195C402 199 407 211 410 218C413 225 418 233 420 236" fill="none" stroke="#0a0a0a" stroke-width="5.5" stroke-linecap="round" stroke-linejoin="round"/><path d="M668 490C667 494 664 507 662 515C660 523 656 536 655 540" fill="none" stroke="#0a0a0a" stroke-width="5.5" stroke-linecap="round" stroke-linejoin="round"/><path d="M-5 665L25 665L-5 692z" fill="#d58d37"/></g>
<g transform="translate(237 370) scale(0.24085)" filter="url(#soft)"><path class="p" d="M0 20C8 30 32 61 50 80C68 99 87 123 110 135C133 147 165 151 190 150C215 149 237 145 260 130C283 115 310 82 330 60C350 38 372 10 380 0" fill="none" stroke="#7c7c7c" stroke-width="15.0" stroke-linecap="round" stroke-linejoin="round" opacity="0.8"/><path class="p" d="M-3 22C7 31 37 58 57 76C76 94 94 117 115 128C137 140 162 145 187 146C211 148 239 151 263 136C288 121 313 81 333 58C354 34 377 8 385 -2" fill="none" stroke="#7c7c7c" stroke-width="8.2" stroke-linecap="round" stroke-linejoin="round" opacity="0.56"/><path class="p" d="M-6 29C4 38 33 65 53 84C73 104 91 133 114 146C136 158 164 159 189 157C214 156 241 153 264 138C288 122 309 89 329 65C348 41 373 7 382 -4" fill="none" stroke="#7c7c7c" stroke-width="6.0" stroke-linecap="round" stroke-linejoin="round" opacity="0.40"/><path class="p" d="M20 30C30 42 57 83 80 100C103 117 133 128 160 130C187 132 217 123 240 110C263 97 290 60 300 50" fill="none" stroke="#888" stroke-width="7.5" stroke-linecap="round" stroke-linejoin="round" opacity="0.6"/><path class="p" d="M100 20C102 28 93 52 110 70C127 88 185 116 200 125" fill="none" stroke="#999" stroke-width="6.0" stroke-linecap="round" stroke-linejoin="round" opacity="0.6"/><path class="p" d="M20 90 L40 70" fill="none" stroke="#999" stroke-width="6.0" stroke-linecap="round" stroke-linejoin="round" opacity="0.6"/><path class="p" d="M490 0C489 12 492 43 485 70C478 97 464 133 450 160C436 187 418 210 400 230C382 250 358 260 340 280C322 300 305 323 290 350C275 377 261 408 250 440C239 472 231 507 225 540C219 573 214 601 215 640C216 679 229 752 232 775" fill="none" stroke="#7c7c7c" stroke-width="15.0" stroke-linecap="round" stroke-linejoin="round" opacity="0.8"/><path class="p" d="M486 2C485 14 486 50 479 76C472 101 459 127 445 153C431 180 412 216 394 236C377 256 356 257 338 275C319 293 298 316 283 344C269 371 262 409 253 442C243 475 235 510 228 543C220 577 209 602 209 641C209 681 227 756 230 779" fill="none" stroke="#7c7c7c" stroke-width="8.2" stroke-linecap="round" stroke-linejoin="round" opacity="0.56"/><path class="p" d="M497 9C493 20 482 51 475 78C469 105 473 146 459 170C445 194 413 207 391 224C370 240 347 248 331 270C316 292 311 327 298 357C285 386 265 417 253 447C241 477 236 505 228 535C220 566 205 592 206 631C208 670 232 746 238 769" fill="none" stroke="#7c7c7c" stroke-width="6.0" stroke-linecap="round" stroke-linejoin="round" opacity="0.40"/><path class="p" d="M470 40C462 67 443 158 420 200C397 242 345 275 330 290" fill="none" stroke="#999" stroke-width="6.0" stroke-linecap="round" stroke-linejoin="round" opacity="0.6"/><path class="p" d="M212 490C217 478 227 447 242 420C257 393 290 345 300 330" fill="none" stroke="#888" stroke-width="7.5" stroke-linecap="round" stroke-linejoin="round" opacity="0.6"/><path class="p" d="M250 600C255 617 267 671 280 700C293 729 322 762 330 775" fill="none" stroke="#999" stroke-width="7.5" stroke-linecap="round" stroke-linejoin="round" opacity="0.6"/><path class="p" d="M240 560C245 577 257 630 270 660C283 690 312 727 320 740" fill="none" stroke="#aaa" stroke-width="4.5" stroke-linecap="round" stroke-linejoin="round" opacity="0.6"/><path class="p" d="M460 235C467 226 482 196 500 180C518 164 545 148 570 140C595 132 623 128 650 130C677 132 707 140 730 150C753 160 773 175 790 190C807 205 825 233 832 242" fill="none" stroke="#7c7c7c" stroke-width="13.5" stroke-linecap="round" stroke-linejoin="round" opacity="0.8"/><path class="p" d="M457 234C463 224 475 192 493 177C512 161 541 151 567 143C593 135 620 126 648 127C676 129 712 139 736 150C761 161 780 177 795 192C810 207 820 233 825 241" fill="none" stroke="#7c7c7c" stroke-width="7.4" stroke-linecap="round" stroke-linejoin="round" opacity="0.56"/><path class="p" d="M459 241C465 232 478 202 497 185C515 167 544 144 571 134C598 123 630 120 658 121C686 122 717 132 737 143C757 153 762 165 779 183C796 202 828 241 838 253" fill="none" stroke="#7c7c7c" stroke-width="5.4" stroke-linecap="round" stroke-linejoin="round" opacity="0.40"/><path class="p" d="M480 215C493 206 530 172 560 160C590 148 643 148 660 145" fill="none" stroke="#999" stroke-width="6.0" stroke-linecap="round" stroke-linejoin="round" opacity="0.6"/><path class="p" d="M400 245C412 244 447 238 470 240C493 242 518 250 540 260C562 270 583 288 600 300C617 312 633 325 640 330" fill="none" stroke="#7c7c7c" stroke-width="12.0" stroke-linecap="round" stroke-linejoin="round" opacity="0.8"/><path class="p" d="M393 245C406 245 446 242 470 244C494 247 514 250 536 260C557 270 581 292 598 305C615 317 630 331 637 336" fill="none" stroke="#7c7c7c" stroke-width="6.6" stroke-linecap="round" stroke-linejoin="round" opacity="0.56"/><path class="p" d="M395 239C408 239 452 236 474 240C497 244 512 252 531 263C551 274 572 294 591 306C610 319 635 331 644 336" fill="none" stroke="#7c7c7c" stroke-width="4.8" stroke-linecap="round" stroke-linejoin="round" opacity="0.40"/><path class="p" d="M500 310C507 318 528 348 540 360C552 372 565 377 570 380" fill="none" stroke="#aaa" stroke-width="4.5" stroke-linecap="round" stroke-linejoin="round" opacity="0.7"/><path class="p" d="M510 290 L560 350" fill="none" stroke="#aaa" stroke-width="4.5" stroke-linecap="round" stroke-linejoin="round" opacity="0.7"/><path class="p" d="M590 180C598 186 623 203 640 215C657 227 683 244 692 250" fill="none" stroke="#7c7c7c" stroke-width="10.5" stroke-linecap="round" stroke-linejoin="round" opacity="0.8"/><path class="p" d="M592 178C600 184 621 202 639 214C656 225 688 239 697 244" fill="none" stroke="#7c7c7c" stroke-width="5.8" stroke-linecap="round" stroke-linejoin="round" opacity="0.56"/><path class="p" d="M599 170C604 176 616 196 634 210C651 223 690 243 701 250" fill="none" stroke="#7c7c7c" stroke-width="4.2" stroke-linecap="round" stroke-linejoin="round" opacity="0.40"/><path class="p" d="M585 245C596 240 628 226 650 215C672 204 706 186 717 180" fill="none" stroke="#7c7c7c" stroke-width="10.5" stroke-linecap="round" stroke-linejoin="round" opacity="0.8"/><path class="p" d="M583 250C594 244 624 226 646 214C669 203 706 189 717 184" fill="none" stroke="#7c7c7c" stroke-width="5.8" stroke-linecap="round" stroke-linejoin="round" opacity="0.56"/><path class="p" d="M591 248C600 242 627 221 647 211C666 201 699 191 709 188" fill="none" stroke="#7c7c7c" stroke-width="4.2" stroke-linecap="round" stroke-linejoin="round" opacity="0.40"/><path class="p" d="M990 292C975 286 932 261 900 255C868 249 833 249 800 255C767 261 730 274 700 290C670 306 643 327 620 350C597 373 575 402 560 430C545 458 537 492 530 520C523 548 520 573 520 600C520 627 523 657 530 680C537 703 548 724 560 740C572 756 593 769 600 775" fill="none" stroke="#7c7c7c" stroke-width="15.0" stroke-linecap="round" stroke-linejoin="round" opacity="0.8"/><path class="p" d="M992 295C976 289 927 261 895 254C864 248 837 250 804 256C770 262 725 274 695 289C665 305 649 323 625 346C602 369 571 397 556 427C540 457 540 497 533 525C526 553 516 570 515 595C514 621 519 654 526 678C534 701 548 720 560 735C572 751 591 765 598 771" fill="none" stroke="#7c7c7c" stroke-width="8.2" stroke-linecap="round" stroke-linejoin="round" opacity="0.56"/><path class="p" d="M1000 297C982 292 926 273 891 265C856 258 821 247 791 252C761 258 738 280 711 296C683 313 651 326 625 349C599 371 571 406 553 433C536 461 527 487 521 514C515 540 516 561 518 590C519 619 520 661 528 686C536 711 552 725 564 740C577 755 596 768 603 774" fill="none" stroke="#7c7c7c" stroke-width="6.0" stroke-linecap="round" stroke-linejoin="round" opacity="0.40"/><path class="p" d="M984 270C967 266 917 246 880 245C843 244 780 259 760 262" fill="none" stroke="#999" stroke-width="6.0" stroke-linecap="round" stroke-linejoin="round" opacity="0.6"/><path class="p" d="M560 480C570 490 602 518 620 540C638 562 658 587 670 610C682 633 690 658 690 680C690 702 683 728 670 740C657 752 632 755 610 752C588 749 559 734 540 720C521 706 503 687 495 670C487 653 486 633 490 620C494 607 517 595 522 590" fill="none" stroke="#7c7c7c" stroke-width="12.0" stroke-linecap="round" stroke-linejoin="round" opacity="0.8"/><path class="p" d="M555 481C566 492 599 522 619 543C639 565 664 586 676 609C688 632 692 662 691 683C690 705 682 724 669 736C656 749 634 760 613 757C592 755 563 737 544 723C525 709 509 690 500 673C491 655 489 633 492 619C495 606 515 596 519 592" fill="none" stroke="#7c7c7c" stroke-width="6.6" stroke-linecap="round" stroke-linejoin="round" opacity="0.56"/><path class="p" d="M551 478C564 489 606 524 626 545C646 566 663 582 673 605C683 627 688 657 688 679C688 701 685 724 673 738C660 752 637 764 614 761C591 759 552 739 533 723C514 708 508 683 501 668C494 652 488 643 490 630C492 618 508 598 512 591" fill="none" stroke="#7c7c7c" stroke-width="4.8" stroke-linecap="round" stroke-linejoin="round" opacity="0.40"/><path class="p" d="M580 520C592 537 636 587 650 620C664 653 662 703 665 720" fill="none" stroke="#999" stroke-width="6.0" stroke-linecap="round" stroke-linejoin="round" opacity="0.6"/><path class="p" d="M815 390C818 383 821 359 830 350C839 341 858 335 870 335C882 335 896 340 905 350C914 360 922 388 925 395" fill="none" stroke="#555" stroke-width="10.5" stroke-linecap="round" stroke-linejoin="round" opacity="0.9"/><path class="p" d="M810 394C815 387 827 360 836 350C845 341 853 336 864 336C876 337 895 343 906 353C916 363 922 390 925 397" fill="none" stroke="#555" stroke-width="5.8" stroke-linecap="round" stroke-linejoin="round" opacity="0.63"/><path class="p" d="M822 390C823 385 821 368 828 360C835 351 851 340 864 339C876 338 894 345 903 356C911 367 914 397 917 406" fill="none" stroke="#555" stroke-width="4.2" stroke-linecap="round" stroke-linejoin="round" opacity="0.45"/><path class="p" d="M925 395C929 392 939 382 950 380C961 378 983 384 990 385" fill="none" stroke="#555" stroke-width="10.5" stroke-linecap="round" stroke-linejoin="round" opacity="0.9"/><path class="p" d="M923 389C927 387 937 379 947 379C957 378 977 383 983 384" fill="none" stroke="#555" stroke-width="5.8" stroke-linecap="round" stroke-linejoin="round" opacity="0.63"/><path class="p" d="M923 399C927 395 937 376 947 375C957 373 978 388 984 390" fill="none" stroke="#555" stroke-width="4.2" stroke-linecap="round" stroke-linejoin="round" opacity="0.45"/><path class="p" d="M815 390C818 398 821 423 830 440C839 457 858 478 870 490C882 502 890 513 905 515C920 517 946 508 960 500C974 492 985 473 990 468" fill="none" stroke="#555" stroke-width="10.5" stroke-linecap="round" stroke-linejoin="round" opacity="0.9"/><path class="p" d="M821 390C822 399 818 428 826 444C834 460 856 474 868 486C881 498 884 516 900 519C916 522 949 510 964 502C979 494 985 474 990 469" fill="none" stroke="#555" stroke-width="5.8" stroke-linecap="round" stroke-linejoin="round" opacity="0.63"/><path class="p" d="M809 400C812 407 815 427 827 443C838 459 864 486 877 497C890 508 890 511 904 510C918 510 946 499 961 492C977 484 991 469 997 465" fill="none" stroke="#555" stroke-width="4.2" stroke-linecap="round" stroke-linejoin="round" opacity="0.45"/><path class="p" d="M940 0C938 13 929 53 930 80C931 107 935 132 945 160C955 188 982 231 990 245" fill="none" stroke="#7c7c7c" stroke-width="15.0" stroke-linecap="round" stroke-linejoin="round" opacity="0.8"/><path class="p" d="M945 -3C942 10 928 50 928 77C928 103 935 127 944 156C953 184 977 233 983 248" fill="none" stroke="#7c7c7c" stroke-width="8.2" stroke-linecap="round" stroke-linejoin="round" opacity="0.56"/><path class="p" d="M935 -6C934 9 924 51 926 80C927 108 932 136 943 163C955 190 985 229 994 242" fill="none" stroke="#7c7c7c" stroke-width="6.0" stroke-linecap="round" stroke-linejoin="round" opacity="0.40"/><path class="p" d="M960 0C959 17 951 67 955 100C959 133 979 183 984 200" fill="none" stroke="#888" stroke-width="7.5" stroke-linecap="round" stroke-linejoin="round" opacity="0.6"/><path class="p" d="M660 0C658 10 653 44 650 60C647 76 642 89 640 95" fill="none" stroke="#888" stroke-width="10.5" stroke-linecap="round" stroke-linejoin="round" opacity="0.7"/><path class="p" d="M666 5C662 15 647 49 644 65C640 80 645 93 646 99" fill="none" stroke="#888" stroke-width="5.8" stroke-linecap="round" stroke-linejoin="round" opacity="0.49"/><path class="p" d="M652 7C652 14 657 33 653 49C649 66 633 96 629 105" fill="none" stroke="#888" stroke-width="4.2" stroke-linecap="round" stroke-linejoin="round" opacity="0.35"/><path class="p" d="M380 75C417 75 523 76 600 76C677 76 800 74 840 74" fill="none" stroke="#cacaca" stroke-width="3.8" stroke-linecap="round" stroke-linejoin="round" opacity="0.8"/><path class="p" d="M400 495C450 494 603 490 700 490C797 490 937 496 984 497" fill="none" stroke="#d0d0d0" stroke-width="3.8" stroke-linecap="round" stroke-linejoin="round" opacity="0.8"/><path class="p" d="M260 480C258 493 248 533 250 560C252 587 267 627 270 640" fill="none" stroke="#c2d4ea" stroke-width="4.5" stroke-linecap="round" stroke-linejoin="round" opacity="0.8"/><path class="p" d="M590 460C593 477 608 530 610 560C612 590 602 627 600 640" fill="none" stroke="#c2d4ea" stroke-width="3.8" stroke-linecap="round" stroke-linejoin="round" opacity="0.8"/><path class="p" d="M880 520C883 537 895 590 900 620C905 650 908 687 910 700" fill="none" stroke="#cddcee" stroke-width="3.8" stroke-linecap="round" stroke-linejoin="round" opacity="0.8"/></g>
<g transform="translate(237 370) scale(0.24085)"></g>
<g transform="translate(474 370) scale(0.24085)" filter="url(#soft)"><path class="p" d="M90 50C100 63 128 109 150 130C172 151 195 166 220 175C245 184 270 189 300 185C330 181 370 165 400 150C430 135 457 112 480 95C503 78 520 54 540 50C560 46 580 66 600 70C620 74 642 78 660 75C678 72 697 61 710 50C723 39 732 15 737 8" fill="none" stroke="#7c7c7c" stroke-width="13.5" stroke-linecap="round" stroke-linejoin="round" opacity="0.8"/><path class="p" d="M92 47C101 60 124 103 144 125C165 147 191 170 216 179C242 188 266 184 298 180C329 176 376 167 406 154C435 141 453 117 475 100C498 84 520 58 542 54C563 50 582 71 602 76C623 80 647 84 664 80C681 76 694 64 706 53C718 41 732 18 737 11" fill="none" stroke="#7c7c7c" stroke-width="7.4" stroke-linecap="round" stroke-linejoin="round" opacity="0.56"/><path class="p" d="M89 58C99 69 130 107 151 125C172 143 189 159 214 167C239 175 269 179 300 175C331 171 369 156 399 142C429 129 456 109 480 95C503 81 523 61 541 58C559 55 569 74 589 77C609 81 639 80 659 76C680 73 701 69 714 57C726 46 731 15 734 6" fill="none" stroke="#7c7c7c" stroke-width="5.4" stroke-linecap="round" stroke-linejoin="round" opacity="0.40"/><path class="p" d="M100 80C112 92 145 135 170 150C195 165 237 167 250 170" fill="none" stroke="#999" stroke-width="6.0" stroke-linecap="round" stroke-linejoin="round" opacity="0.6"/><path class="p" d="M540 60C550 65 577 87 600 90C623 93 667 82 680 80" fill="none" stroke="#999" stroke-width="6.0" stroke-linecap="round" stroke-linejoin="round" opacity="0.6"/><path class="p" d="M350 10C352 17 352 39 360 50C368 61 387 72 400 75C413 78 430 75 440 70C450 65 458 49 462 45" fill="none" stroke="#7c7c7c" stroke-width="12.0" stroke-linecap="round" stroke-linejoin="round" opacity="0.8"/><path class="p" d="M356 4C357 12 356 40 362 52C368 64 380 73 393 77C407 81 432 80 443 76C454 72 457 56 460 52" fill="none" stroke="#7c7c7c" stroke-width="6.6" stroke-linecap="round" stroke-linejoin="round" opacity="0.56"/><path class="p" d="M350 10C353 15 360 28 369 40C378 51 394 71 405 78C416 84 427 84 436 78C445 72 455 50 459 44" fill="none" stroke="#7c7c7c" stroke-width="4.8" stroke-linecap="round" stroke-linejoin="round" opacity="0.40"/><path class="p" d="M440 70 L445 95" fill="none" stroke="#7c7c7c" stroke-width="10.5" stroke-linecap="round" stroke-linejoin="round" opacity="0.8"/><path class="p" d="M60 0C57 13 48 50 40 80C32 110 20 153 15 180C10 207 6 217 10 240C14 263 28 290 40 320C52 350 70 387 80 420C90 453 98 487 100 520C102 553 97 590 90 620C83 650 72 674 60 700C48 726 27 762 20 775" fill="none" stroke="#7c7c7c" stroke-width="15.0" stroke-linecap="round" stroke-linejoin="round" opacity="0.8"/><path class="p" d="M60 4C56 16 44 50 36 79C28 109 17 154 14 181C10 207 9 214 15 237C20 260 34 289 45 319C56 349 71 382 80 417C89 451 98 492 100 527C102 561 99 596 92 624C85 653 70 672 58 697C45 723 24 763 17 776" fill="none" stroke="#7c7c7c" stroke-width="8.2" stroke-linecap="round" stroke-linejoin="round" opacity="0.56"/><path class="p" d="M63 6C57 19 36 56 30 85C23 114 28 156 23 181C19 206 -1 214 0 236C1 258 14 282 29 313C44 344 77 387 89 422C102 458 102 493 103 526C105 560 106 593 99 622C92 652 75 677 63 703C50 729 31 765 24 777" fill="none" stroke="#7c7c7c" stroke-width="6.0" stroke-linecap="round" stroke-linejoin="round" opacity="0.40"/><path class="p" d="M75 30C71 47 58 98 50 130C42 162 33 205 30 220" fill="none" stroke="#888" stroke-width="7.5" stroke-linecap="round" stroke-linejoin="round" opacity="0.6"/><path class="p" d="M20 250C27 267 48 317 60 350C72 383 85 433 90 450" fill="none" stroke="#888" stroke-width="7.5" stroke-linecap="round" stroke-linejoin="round" opacity="0.6"/><path class="p" d="M110 350C118 372 147 438 160 480C173 522 183 567 190 600C197 633 200 667 202 680" fill="none" stroke="#8a8a8a" stroke-width="9.0" stroke-linecap="round" stroke-linejoin="round" opacity="0.7"/><path class="p" d="M150 680 L172 775" fill="none" stroke="#888" stroke-width="12.0" stroke-linecap="round" stroke-linejoin="round" opacity="0.7"/><path class="p" d="M100 560 L110 640" fill="none" stroke="#aaa" stroke-width="4.5" stroke-linecap="round" stroke-linejoin="round" opacity="0.6"/><path class="p" d="M0 290C5 297 18 312 30 330C42 348 63 388 70 400" fill="none" stroke="#7c7c7c" stroke-width="10.5" stroke-linecap="round" stroke-linejoin="round" opacity="0.8"/><path class="p" d="M3 286C8 293 20 311 32 329C44 347 67 384 74 394" fill="none" stroke="#7c7c7c" stroke-width="5.8" stroke-linecap="round" stroke-linejoin="round" opacity="0.56"/><path class="p" d="M-7 280C0 290 23 320 36 339C49 359 67 387 73 397" fill="none" stroke="#7c7c7c" stroke-width="4.2" stroke-linecap="round" stroke-linejoin="round" opacity="0.40"/><path class="p" d="M0 400C3 407 16 425 16 440C16 455 3 483 0 492" fill="none" stroke="#666" stroke-width="10.5" stroke-linecap="round" stroke-linejoin="round" opacity="0.85"/><path class="p" d="M5 404C7 409 18 422 17 437C16 451 1 482 -3 491" fill="none" stroke="#666" stroke-width="5.8" stroke-linecap="round" stroke-linejoin="round" opacity="0.59"/><path class="p" d="M-4 398C-0 407 20 434 19 450C18 465 -5 486 -10 493" fill="none" stroke="#666" stroke-width="4.2" stroke-linecap="round" stroke-linejoin="round" opacity="0.42"/><path class="p" d="M210 190C217 198 238 228 250 240C262 252 275 257 280 260" fill="none" stroke="#aaa" stroke-width="4.5" stroke-linecap="round" stroke-linejoin="round" opacity="0.6"/><path class="p" d="M420 150C430 162 458 198 480 220C502 242 538 274 550 285" fill="none" stroke="#bbb" stroke-width="3.8" stroke-linecap="round" stroke-linejoin="round" opacity="0.6"/><path class="p" d="M150 20C153 32 157 72 170 90C183 108 212 128 230 130C248 132 269 117 280 100C291 83 292 42 295 30" fill="none" stroke="#aaa" stroke-width="4.5" stroke-linecap="round" stroke-linejoin="round" opacity="0.55"/><path class="p" d="M345 385C343 392 334 416 335 430C336 444 339 458 350 470C361 482 392 495 400 500" fill="none" stroke="#c6c6c6" stroke-width="3.8" stroke-linecap="round" stroke-linejoin="round" opacity="0.8"/><path class="p" d="M600 330C608 342 641 377 650 400C659 423 662 454 655 470C648 486 618 491 610 495" fill="none" stroke="#c6c6c6" stroke-width="3.8" stroke-linecap="round" stroke-linejoin="round" opacity="0.8"/><path class="p" d="M430 400C432 410 442 445 440 460C438 475 423 485 420 490" fill="none" stroke="#d0d0d0" stroke-width="3.0" stroke-linecap="round" stroke-linejoin="round" opacity="0.8"/><path class="p" d="M490 380C495 390 516 420 520 440C524 460 516 490 515 500" fill="none" stroke="#d4d4d4" stroke-width="3.0" stroke-linecap="round" stroke-linejoin="round" opacity="0.8"/><path class="p" d="M100 350C112 382 152 485 170 540C188 595 199 657 205 680" fill="none" stroke="#cddcee" stroke-width="3.8" stroke-linecap="round" stroke-linejoin="round" opacity="0.8"/></g>
<g transform="translate(474 370) scale(0.24085)"></g>
</svg>
<!--/DRAW--></div>
<div class="abs" style="left:1073px;top:160px;width:13px;height:555px;background:#3d3d3d"></div>
<div class="abs" style="left:1073.5px;top:160px;width:12.5px;height:12px;background:#484848;border:1px solid #5a5a5a"></div>
<div class="abs" style="left:1073.5px;top:702.5px;width:12.5px;height:12.5px;background:#484848;border:1px solid #5a5a5a"></div>
<div class="tri" style="left:1076.500px;top:164px;border-top:none;border-bottom:3.500px solid #b0b0b0;border-left-width:3px;border-right-width:3px"></div>
<div class="tri" style="left:1076.500px;top:707.500px;border-top-width:3.500px;border-top-color:#b0b0b0;border-left-width:3px;border-right-width:3px"></div>
<div class="abs" style="left:1074px;top:330.5px;width:12px;height:156px;background:#4a4a4a;border:1px solid #5c5c5c;border-radius:1px"></div>
<div class="abs" style="left:363px;top:715px;width:710px;height:12.5px;background:#3d3d3d"></div>
<div class="abs" style="left:363px;top:715.5px;width:12px;height:12px;background:#484848;border:1px solid #5a5a5a"></div>
<div class="abs" style="left:1061.5px;top:715.5px;width:12px;height:12px;background:#484848;border:1px solid #5a5a5a"></div>
<svg style="left:366.5px;top:718.5px" width="4" height="6" viewBox="0 0 4 6"><path d="M4 0L0 3L4 6z" fill="#b0b0b0"/></svg>
<svg style="left:1066px;top:718.5px" width="4" height="6" viewBox="0 0 4 6"><path d="M0 0L4 3L0 6z" fill="#b0b0b0"/></svg>
<div class="abs" style="left:616.5px;top:715.5px;width:159px;height:12px;background:#4a4a4a;border:1px solid #5c5c5c;border-radius:1px"></div>

<!--/CANVAS-->
<!--RIGHTDOCK-->
<div class="abs" style="left:1092px;top:131px;width:125px;height:23px;background:#484848;border:1px solid #5c5c5c;border-bottom:none;border-radius:3px 3px 0 0"></div>
<div class="abs" style="left:1219px;top:133.5px;width:135.5px;height:20.5px;background:#434343;border:1px solid #575757;border-bottom:none;border-radius:3px 3px 0 0"></div>
<div class="abs" style="left:1217px;top:153.5px;width:138px;height:1px;background:#5a5a5a"></div>
<svg style="left:1104.0px;top:133.1px" width="100.5" height="20"><text x="0" y="14" font-size="13" fill="#e4e4e4" font-weight="normal" textLength="100.5" lengthAdjust="spacingAndGlyphs">Specific Colour Sel…</text></svg>
<svg style="left:1231.1px;top:133.5px" width="111.1" height="20"><text x="0" y="14" font-size="13" fill="#dcdcdc" font-weight="normal" textLength="111.1" lengthAdjust="spacingAndGlyphs">Advanced Colour Sel…</text></svg>
<svg style="left:1093.4px;top:155.5px" width="16" height="16" viewBox="0 0 16 16"><circle cx="8" cy="8" r="6.700" fill="none" stroke="#d4d4d4" stroke-width="1.100"/><rect x="4.700" y="7.300" width="6.600" height="4.300" rx=".5" fill="#d4d4d4"/><path d="M5.900 7.500V6.400A2.100 2.100 0 0 1 10.100 6.400V7.500" fill="none" stroke="#d4d4d4" stroke-width="1.100"/></svg>
<svg style="left:1115.1px;top:153.2px" width="115.4" height="20"><text x="0" y="14" font-size="13" fill="#dedede" font-weight="normal" textLength="115.4" lengthAdjust="spacingAndGlyphs">Specific Colour Selector</text></svg>
<svg style="left:1318px;top:157.7px" width="13" height="12" viewBox="0 0 13 12"><path d="M4.500 3.500V.600H12.400V8.500H9.500M.600 4.500H8.500V11.400H.600z" fill="none" stroke="#dcdcdc" stroke-width="1.200"/></svg>
<svg style="left:1342px;top:159.5px" width="9" height="9" viewBox="0 0 9 9"><path d="M.700 .700L8.300 8.300M8.300 .700L.700 8.300" stroke="#dcdcdc" stroke-width="1.300"/></svg>
<div class="abs" style="left:1096.5px;top:177.5px;width:224.5px;height:21px;background:linear-gradient(#494949,#434343);border:1px solid #2e2e2e;border-radius:3.500px;box-shadow:0 0 0 .6px #585858"></div>
<svg style="left:1126.4px;top:178.2px" width="165.2" height="20"><text x="0" y="14" font-size="13" fill="#dedede" font-weight="normal" textLength="165.2" lengthAdjust="spacingAndGlyphs">RGB/Alpha (8-bit integer/channel)</text></svg>
<div class="tri" style="left:1309.500px;top:187.500px;border-left-width:3px;border-right-width:3px;border-top-width:3.500px"></div>
<svg style="left:1331.5px;top:179.6px" width="14.8" height="20"><text x="0" y="14" font-size="17" fill="#e0e0e0" font-weight="normal" textLength="14.8" lengthAdjust="spacingAndGlyphs">%</text></svg>
<svg style="left:1096.2px;top:204.7px" width="21.6" height="20"><text x="0" y="14" font-size="13" fill="#dedede" font-weight="normal" textLength="21.6" lengthAdjust="spacingAndGlyphs">Red:</text></svg>
<div class="abs" style="left:1134.8px;top:204.5px;width:169px;height:15px;background:linear-gradient(90deg,#000,#f00)"></div>
<svg style="left:1132.7px;top:222.8px" width="5" height="3" viewBox="0 0 5 3"><path d="M0 3L2.500 0L5 3z" fill="#cfcfcf"/></svg>
<div class="abs" style="left:1309px;top:206.0px;width:41.5px;height:18px;background:#424242;border:1px solid #363636;border-radius:3px"></div>
<div class="abs" style="left:1338px;top:207.0px;width:11.5px;height:16px;background:#4a4a4a;border-radius:0 2px 2px 0"></div>
<svg style="left:1312.3px;top:204.7px" width="6.3" height="20"><text x="0" y="14" font-size="13" fill="#dedede" font-weight="normal" textLength="6.3" lengthAdjust="spacingAndGlyphs">0</text></svg>
<div class="tri" style="left:1341px;top:210.0px;border-top:none;border-bottom:3.500px solid #8a8a8a;border-left-width:3px;border-right-width:3px"></div>
<div class="tri" style="left:1341px;top:217.0px;border-top-width:3.500px;border-top-color:#8a8a8a;border-left-width:3px;border-right-width:3px"></div>
<svg style="left:1096.2px;top:231.0px" width="32.4" height="20"><text x="0" y="14" font-size="13" fill="#dedede" font-weight="normal" textLength="32.4" lengthAdjust="spacingAndGlyphs">Green:</text></svg>
<div class="abs" style="left:1134.8px;top:230.8px;width:169px;height:15px;background:linear-gradient(90deg,#000,#0f0)"></div>
<svg style="left:1132.7px;top:249.10000000000002px" width="5" height="3" viewBox="0 0 5 3"><path d="M0 3L2.500 0L5 3z" fill="#cfcfcf"/></svg>
<div class="abs" style="left:1309px;top:232.3px;width:41.5px;height:18px;background:#424242;border:1px solid #363636;border-radius:3px"></div>
<div class="abs" style="left:1338px;top:233.3px;width:11.5px;height:16px;background:#4a4a4a;border-radius:0 2px 2px 0"></div>
<svg style="left:1312.3px;top:231.0px" width="6.3" height="20"><text x="0" y="14" font-size="13" fill="#dedede" font-weight="normal" textLength="6.3" lengthAdjust="spacingAndGlyphs">0</text></svg>
<div class="tri" style="left:1341px;top:236.3px;border-top:none;border-bottom:3.500px solid #8a8a8a;border-left-width:3px;border-right-width:3px"></div>
<div class="tri" style="left:1341px;top:243.3px;border-top-width:3.500px;border-top-color:#8a8a8a;border-left-width:3px;border-right-width:3px"></div>
<svg style="left:1096.2px;top:257.2px" width="24.3" height="20"><text x="0" y="14" font-size="13" fill="#dedede" font-weight="normal" textLength="24.3" lengthAdjust="spacingAndGlyphs">Blue:</text></svg>
<div class="abs" style="left:1134.8px;top:257px;width:169px;height:15px;background:linear-gradient(90deg,#000,#00f)"></div>
<svg style="left:1132.7px;top:275.3px" width="5" height="3" viewBox="0 0 5 3"><path d="M0 3L2.500 0L5 3z" fill="#cfcfcf"/></svg>
<div class="abs" style="left:1309px;top:258.5px;width:41.5px;height:18px;background:#424242;border:1px solid #363636;border-radius:3px"></div>
<div class="abs" style="left:1338px;top:259.5px;width:11.5px;height:16px;background:#4a4a4a;border-radius:0 2px 2px 0"></div>
<svg style="left:1312.3px;top:257.2px" width="6.3" height="20"><text x="0" y="14" font-size="13" fill="#dedede" font-weight="normal" textLength="6.3" lengthAdjust="spacingAndGlyphs">0</text></svg>
<div class="tri" style="left:1341px;top:262.5px;border-top:none;border-bottom:3.500px solid #8a8a8a;border-left-width:3px;border-right-width:3px"></div>
<div class="tri" style="left:1341px;top:269.5px;border-top-width:3.500px;border-top-color:#8a8a8a;border-left-width:3px;border-right-width:3px"></div>
<svg style="left:1096.1px;top:282.8px" width="65.3" height="20"><text x="0" y="14" font-size="13" fill="#dedede" font-weight="normal" textLength="65.3" lengthAdjust="spacingAndGlyphs">Colour name:</text></svg>
<div class="abs" style="left:1178px;top:281.6px;width:81.5px;height:22px;background:#000"></div>
<div class="abs" style="left:1259.5px;top:281.6px;width:91px;height:22px;background:#424242;border-radius:0 3px 3px 0"></div>
<svg style="left:1297.7px;top:282.8px" width="47.2" height="20"><text x="0" y="14" font-size="13" fill="#dedede" font-weight="normal" textLength="47.2" lengthAdjust="spacingAndGlyphs">#000000</text></svg>
<svg style="left:1097.5px;top:314.5px" width="11" height="11" viewBox="0 0 11 11"><circle cx="5.500" cy="5.500" r="5" fill="#3c3c3c"/><circle cx="5.500" cy="5.500" r="2.200" fill="#bdbdbd"/></svg>
<svg style="left:1114.5px;top:310.0px" width="21.2" height="20"><text x="0" y="14" font-size="13" fill="#dedede" font-weight="normal" textLength="21.2" lengthAdjust="spacingAndGlyphs">RGB</text></svg>
<svg style="left:1147.4px;top:314.5px" width="11" height="11" viewBox="0 0 11 11"><circle cx="5.500" cy="5.500" r="5" fill="#3c3c3c"/></svg>
<div class="abs" style="left:1164.5px;top:310px;width:49px;height:20.5px;background:linear-gradient(#494949,#434343);border:1px solid #2e2e2e;border-radius:3.500px;box-shadow:0 0 0 .6px #585858"></div>
<svg style="left:1169.0px;top:310.0px" width="21.2" height="20"><text x="0" y="14" font-size="13" fill="#dedede" font-weight="normal" textLength="21.2" lengthAdjust="spacingAndGlyphs">HSV</text></svg>
<div class="tri" style="left:1200px;top:318.500px;border-left-width:3px;border-right-width:3px;border-top-width:3.500px"></div>
<div class="abs" style="left:1217.5px;top:393px;width:17px;height:1.5px;background:repeating-linear-gradient(90deg,#8a8a8a 0,#8a8a8a 1.500px,transparent 1.500px,transparent 3px)"></div>
<svg style="left:1093.4px;top:395.5px" width="16" height="16" viewBox="0 0 16 16"><circle cx="8" cy="8" r="6.700" fill="none" stroke="#d4d4d4" stroke-width="1.100"/><rect x="4.700" y="7.300" width="6.600" height="4.300" rx=".5" fill="#d4d4d4"/><path d="M5.900 7.500V6.400A2.100 2.100 0 0 1 10.100 6.400V7.500" fill="none" stroke="#d4d4d4" stroke-width="1.100"/></svg>
<svg style="left:1115.3px;top:394.2px" width="63.4" height="20"><text x="0" y="14" font-size="13" fill="#dedede" font-weight="normal" textLength="63.4" lengthAdjust="spacingAndGlyphs">Undo History</text></svg>
<svg style="left:1318px;top:397.7px" width="13" height="12" viewBox="0 0 13 12"><path d="M4.500 3.500V.600H12.400V8.500H9.500M.600 4.500H8.500V11.400H.600z" fill="none" stroke="#dcdcdc" stroke-width="1.200"/></svg>
<svg style="left:1342px;top:399.5px" width="9" height="9" viewBox="0 0 9 9"><path d="M.700 .700L8.300 8.300M8.300 .700L.700 8.300" stroke="#dcdcdc" stroke-width="1.300"/></svg>
<div class="abs" style="left:1091px;top:412px;width:251.5px;height:315.5px;background:#3c3c3c"></div>
<div class="abs" style="left:1091px;top:693px;width:251.5px;height:34.5px;background:#56789d"></div>
<div class="abs" style="left:1343px;top:412px;width:12px;height:315.5px;background:#414141"></div>
<div class="abs" style="left:1343.5px;top:412.5px;width:11.5px;height:11.5px;background:#484848;border:1px solid #5a5a5a"></div>
<div class="abs" style="left:1343.5px;top:715.5px;width:11.5px;height:11.5px;background:#484848;border:1px solid #5a5a5a"></div>
<div class="tri" style="left:1346px;top:416px;border-top:none;border-bottom:3.500px solid #b0b0b0;border-left-width:3px;border-right-width:3px"></div>
<div class="tri" style="left:1346px;top:720px;border-top-width:3.500px;border-top-color:#b0b0b0;border-left-width:3px;border-right-width:3px"></div>
<div class="abs" style="left:1343.5px;top:690px;width:11.5px;height:23px;background:#4c4c4c;border:1px solid #5e5e5e;border-radius:1px"></div>
<div class="abs" style="left:1089.5px;top:421px;width:1.5px;height:18px;background:repeating-linear-gradient(180deg,#8a8a8a 0,#8a8a8a 1.500px,transparent 1.500px,transparent 3px)"></div>
<div class="abs" style="left:1095px;top:412px;width:32px;height:8px;overflow:hidden"><svg style="left:0;top:-24px" width="32" height="32" viewBox="0 0 32 32"><rect width="32" height="32" fill="#d4d6d8"/><path d="M3 3L6.500 8L11 7.500L14.500 3L14.500 10C15.500 13 14 16 12 17.500C15 19.500 16 25 15.500 31H4C3 27 4 23 6 21C4 19 2.500 16 3.500 12z" fill="#c07a2c"/><path d="M5 31C5 26 6.500 23.500 8.500 22.500C10.500 23.500 12 26.500 11.500 31z" fill="#ead0a6"/><path d="M11 21C14 22 16 26 15.500 31H12C12.500 27 12 24 11 21z" fill="#6f3d22"/><path d="M3 3L6 8L4 10.500zM14.500 3L11.500 7.500L14.500 10z" fill="#54301c"/><ellipse cx="8.500" cy="14.500" rx="3.200" ry="2.200" fill="#f3e0c2"/><circle cx="6" cy="11" r="1" fill="#2a1a10"/><circle cx="11" cy="10.800" r="1" fill="#2a1a10"/><path d="M6.500 17.500h5v2.500h-5z" fill="#6b3a20"/><g fill="#3e3e3e"><circle cx="21" cy="6" r=".8"/><circle cx="25" cy="4.500" r=".7"/><circle cx="19.500" cy="10" r=".7"/><circle cx="23.500" cy="9" r=".8"/><circle cx="27.500" cy="8" r=".7"/><circle cx="20.500" cy="14" r=".8"/><circle cx="25" cy="13" r=".7"/><circle cx="28.500" cy="12.500" r=".6"/><circle cx="22.500" cy="17.500" r=".8"/><circle cx="26.500" cy="17" r=".7"/><circle cx="20" cy="21" r=".7"/><circle cx="24" cy="21.500" r=".8"/><circle cx="28" cy="21" r=".6"/><circle cx="22" cy="25" r=".7"/><circle cx="26" cy="25.500" r=".7"/><circle cx="24" cy="29" r=".7"/><circle cx="28.500" cy="28" r=".6"/><circle cx="20.500" cy="28.500" r=".6"/></g></svg></div>
<svg style="left:1095px;top:422px" width="32" height="32" viewBox="0 0 32 32"><rect width="32" height="32" fill="#d4d6d8"/><path d="M3 3L6.500 8L11 7.500L14.500 3L14.500 10C15.500 13 14 16 12 17.500C15 19.500 16 25 15.500 31H4C3 27 4 23 6 21C4 19 2.500 16 3.500 12z" fill="#c07a2c"/><path d="M5 31C5 26 6.500 23.500 8.500 22.500C10.500 23.500 12 26.500 11.500 31z" fill="#ead0a6"/><path d="M11 21C14 22 16 26 15.500 31H12C12.500 27 12 24 11 21z" fill="#6f3d22"/><path d="M3 3L6 8L4 10.500zM14.500 3L11.500 7.500L14.500 10z" fill="#54301c"/><ellipse cx="8.500" cy="14.500" rx="3.200" ry="2.200" fill="#f3e0c2"/><circle cx="6" cy="11" r="1" fill="#2a1a10"/><circle cx="11" cy="10.800" r="1" fill="#2a1a10"/><path d="M6.500 17.500h5v2.500h-5z" fill="#6b3a20"/><g fill="#3e3e3e"><circle cx="21" cy="6" r=".8"/><circle cx="25" cy="4.500" r=".7"/><circle cx="19.500" cy="10" r=".7"/><circle cx="23.500" cy="9" r=".8"/><circle cx="27.500" cy="8" r=".7"/><circle cx="20.500" cy="14" r=".8"/><circle cx="25" cy="13" r=".7"/><circle cx="28.500" cy="12.500" r=".6"/><circle cx="22.500" cy="17.500" r=".8"/><circle cx="26.500" cy="17" r=".7"/><circle cx="20" cy="21" r=".7"/><circle cx="24" cy="21.500" r=".8"/><circle cx="28" cy="21" r=".6"/><circle cx="22" cy="25" r=".7"/><circle cx="26" cy="25.500" r=".7"/><circle cx="24" cy="29" r=".7"/><circle cx="28.500" cy="28" r=".6"/><circle cx="20.500" cy="28.500" r=".6"/></g></svg>
<svg style="left:1133.2px;top:428.1px" width="91.7" height="20"><text x="0" y="14" font-size="13" fill="#dedede" font-weight="normal" textLength="91.7" lengthAdjust="spacingAndGlyphs">Move control point</text></svg>
<svg style="left:1095px;top:456px" width="32" height="32" viewBox="0 0 32 32"><rect width="32" height="32" fill="#d4d6d8"/><path d="M3 3L6.500 8L11 7.500L14.500 3L14.500 10C15.500 13 14 16 12 17.500C15 19.500 16 25 15.500 31H4C3 27 4 23 6 21C4 19 2.500 16 3.500 12z" fill="#c07a2c"/><path d="M5 31C5 26 6.500 23.500 8.500 22.500C10.500 23.500 12 26.500 11.500 31z" fill="#ead0a6"/><path d="M11 21C14 22 16 26 15.500 31H12C12.500 27 12 24 11 21z" fill="#6f3d22"/><path d="M3 3L6 8L4 10.500zM14.500 3L11.500 7.500L14.500 10z" fill="#54301c"/><ellipse cx="8.500" cy="14.500" rx="3.200" ry="2.200" fill="#f3e0c2"/><circle cx="6" cy="11" r="1" fill="#2a1a10"/><circle cx="11" cy="10.800" r="1" fill="#2a1a10"/><path d="M6.500 17.500h5v2.500h-5z" fill="#6b3a20"/><g fill="#3e3e3e"><circle cx="21" cy="6" r=".8"/><circle cx="25" cy="4.500" r=".7"/><circle cx="19.500" cy="10" r=".7"/><circle cx="23.500" cy="9" r=".8"/><circle cx="27.500" cy="8" r=".7"/><circle cx="20.500" cy="14" r=".8"/><circle cx="25" cy="13" r=".7"/><circle cx="28.500" cy="12.500" r=".6"/><circle cx="22.500" cy="17.500" r=".8"/><circle cx="26.500" cy="17" r=".7"/><circle cx="20" cy="21" r=".7"/><circle cx="24" cy="21.500" r=".8"/><circle cx="28" cy="21" r=".6"/><circle cx="22" cy="25" r=".7"/><circle cx="26" cy="25.500" r=".7"/><circle cx="24" cy="29" r=".7"/><circle cx="28.500" cy="28" r=".6"/><circle cx="20.500" cy="28.500" r=".6"/></g></svg>
<svg style="left:1133.2px;top:462.1px" width="59.3" height="20"><text x="0" y="14" font-size="13" fill="#dedede" font-weight="normal" textLength="59.3" lengthAdjust="spacingAndGlyphs">Move points</text></svg>
<svg style="left:1095px;top:490px" width="32" height="32" viewBox="0 0 32 32"><rect width="32" height="32" fill="#d4d6d8"/><path d="M3 3L6.500 8L11 7.500L14.500 3L14.500 10C15.500 13 14 16 12 17.500C15 19.500 16 25 15.500 31H4C3 27 4 23 6 21C4 19 2.500 16 3.500 12z" fill="#c07a2c"/><path d="M5 31C5 26 6.500 23.500 8.500 22.500C10.500 23.500 12 26.500 11.500 31z" fill="#ead0a6"/><path d="M11 21C14 22 16 26 15.500 31H12C12.500 27 12 24 11 21z" fill="#6f3d22"/><path d="M3 3L6 8L4 10.500zM14.500 3L11.500 7.500L14.500 10z" fill="#54301c"/><ellipse cx="8.500" cy="14.500" rx="3.200" ry="2.200" fill="#f3e0c2"/><circle cx="6" cy="11" r="1" fill="#2a1a10"/><circle cx="11" cy="10.800" r="1" fill="#2a1a10"/><path d="M6.500 17.500h5v2.500h-5z" fill="#6b3a20"/><g fill="#3e3e3e"><circle cx="21" cy="6" r=".8"/><circle cx="25" cy="4.500" r=".7"/><circle cx="19.500" cy="10" r=".7"/><circle cx="23.500" cy="9" r=".8"/><circle cx="27.500" cy="8" r=".7"/><circle cx="20.500" cy="14" r=".8"/><circle cx="25" cy="13" r=".7"/><circle cx="28.500" cy="12.500" r=".6"/><circle cx="22.500" cy="17.500" r=".8"/><circle cx="26.500" cy="17" r=".7"/><circle cx="20" cy="21" r=".7"/><circle cx="24" cy="21.500" r=".8"/><circle cx="28" cy="21" r=".6"/><circle cx="22" cy="25" r=".7"/><circle cx="26" cy="25.500" r=".7"/><circle cx="24" cy="29" r=".7"/><circle cx="28.500" cy="28" r=".6"/><circle cx="20.500" cy="28.500" r=".6"/></g></svg>
<svg style="left:1133.2px;top:496.1px" width="91.7" height="20"><text x="0" y="14" font-size="13" fill="#dedede" font-weight="normal" textLength="91.7" lengthAdjust="spacingAndGlyphs">Move control point</text></svg>
<svg style="left:1095px;top:524px" width="32" height="32" viewBox="0 0 32 32"><rect width="32" height="32" fill="#d4d6d8"/><path d="M3 3L6.500 8L11 7.500L14.500 3L14.500 10C15.500 13 14 16 12 17.500C15 19.500 16 25 15.500 31H4C3 27 4 23 6 21C4 19 2.500 16 3.500 12z" fill="#c07a2c"/><path d="M5 31C5 26 6.500 23.500 8.500 22.500C10.500 23.500 12 26.500 11.500 31z" fill="#ead0a6"/><path d="M11 21C14 22 16 26 15.500 31H12C12.500 27 12 24 11 21z" fill="#6f3d22"/><path d="M3 3L6 8L4 10.500zM14.500 3L11.500 7.500L14.500 10z" fill="#54301c"/><ellipse cx="8.500" cy="14.500" rx="3.200" ry="2.200" fill="#f3e0c2"/><circle cx="6" cy="11" r="1" fill="#2a1a10"/><circle cx="11" cy="10.800" r="1" fill="#2a1a10"/><path d="M6.500 17.500h5v2.500h-5z" fill="#6b3a20"/><g fill="#3e3e3e"><circle cx="21" cy="6" r=".8"/><circle cx="25" cy="4.500" r=".7"/><circle cx="19.500" cy="10" r=".7"/><circle cx="23.500" cy="9" r=".8"/><circle cx="27.500" cy="8" r=".7"/><circle cx="20.500" cy="14" r=".8"/><circle cx="25" cy="13" r=".7"/><circle cx="28.500" cy="12.500" r=".6"/><circle cx="22.500" cy="17.500" r=".8"/><circle cx="26.500" cy="17" r=".7"/><circle cx="20" cy="21" r=".7"/><circle cx="24" cy="21.500" r=".8"/><circle cx="28" cy="21" r=".6"/><circle cx="22" cy="25" r=".7"/><circle cx="26" cy="25.500" r=".7"/><circle cx="24" cy="29" r=".7"/><circle cx="28.500" cy="28" r=".6"/><circle cx="20.500" cy="28.500" r=".6"/></g></svg>
<svg style="left:1133.2px;top:530.1px" width="84.0" height="20"><text x="0" y="14" font-size="13" fill="#dedede" font-weight="normal" textLength="84.0" lengthAdjust="spacingAndGlyphs">Change Segment</text></svg>
<svg style="left:1095px;top:558px" width="32" height="32" viewBox="0 0 32 32"><rect width="32" height="32" fill="#d4d6d8"/><path d="M3 3L6.500 8L11 7.500L14.500 3L14.500 10C15.500 13 14 16 12 17.500C15 19.500 16 25 15.500 31H4C3 27 4 23 6 21C4 19 2.500 16 3.500 12z" fill="#c07a2c"/><path d="M5 31C5 26 6.500 23.500 8.500 22.500C10.500 23.500 12 26.500 11.500 31z" fill="#ead0a6"/><path d="M11 21C14 22 16 26 15.500 31H12C12.500 27 12 24 11 21z" fill="#6f3d22"/><path d="M3 3L6 8L4 10.500zM14.500 3L11.500 7.500L14.500 10z" fill="#54301c"/><ellipse cx="8.500" cy="14.500" rx="3.200" ry="2.200" fill="#f3e0c2"/><circle cx="6" cy="11" r="1" fill="#2a1a10"/><circle cx="11" cy="10.800" r="1" fill="#2a1a10"/><path d="M6.500 17.500h5v2.500h-5z" fill="#6b3a20"/><g fill="#3e3e3e"><circle cx="21" cy="6" r=".8"/><circle cx="25" cy="4.500" r=".7"/><circle cx="19.500" cy="10" r=".7"/><circle cx="23.500" cy="9" r=".8"/><circle cx="27.500" cy="8" r=".7"/><circle cx="20.500" cy="14" r=".8"/><circle cx="25" cy="13" r=".7"/><circle cx="28.500" cy="12.500" r=".6"/><circle cx="22.500" cy="17.500" r=".8"/><circle cx="26.500" cy="17" r=".7"/><circle cx="20" cy="21" r=".7"/><circle cx="24" cy="21.500" r=".8"/><circle cx="28" cy="21" r=".6"/><circle cx="22" cy="25" r=".7"/><circle cx="26" cy="25.500" r=".7"/><circle cx="24" cy="29" r=".7"/><circle cx="28.500" cy="28" r=".6"/><circle cx="20.500" cy="28.500" r=".6"/></g></svg>
<svg style="left:1133.2px;top:564.1px" width="84.0" height="20"><text x="0" y="14" font-size="13" fill="#dedede" font-weight="normal" textLength="84.0" lengthAdjust="spacingAndGlyphs">Change Segment</text></svg>
<svg style="left:1095px;top:592px" width="32" height="32" viewBox="0 0 32 32"><rect width="32" height="32" fill="#d4d6d8"/><path d="M3 3L6.500 8L11 7.500L14.500 3L14.500 10C15.500 13 14 16 12 17.500C15 19.500 16 25 15.500 31H4C3 27 4 23 6 21C4 19 2.500 16 3.500 12z" fill="#c07a2c"/><path d="M5 31C5 26 6.500 23.500 8.500 22.500C10.500 23.500 12 26.500 11.500 31z" fill="#ead0a6"/><path d="M11 21C14 22 16 26 15.500 31H12C12.500 27 12 24 11 21z" fill="#6f3d22"/><path d="M3 3L6 8L4 10.500zM14.500 3L11.500 7.500L14.500 10z" fill="#54301c"/><ellipse cx="8.500" cy="14.500" rx="3.200" ry="2.200" fill="#f3e0c2"/><circle cx="6" cy="11" r="1" fill="#2a1a10"/><circle cx="11" cy="10.800" r="1" fill="#2a1a10"/><path d="M6.500 17.500h5v2.500h-5z" fill="#6b3a20"/><g fill="#3e3e3e"><circle cx="21" cy="6" r=".8"/><circle cx="25" cy="4.500" r=".7"/><circle cx="19.500" cy="10" r=".7"/><circle cx="23.500" cy="9" r=".8"/><circle cx="27.500" cy="8" r=".7"/><circle cx="20.500" cy="14" r=".8"/><circle cx="25" cy="13" r=".7"/><circle cx="28.500" cy="12.500" r=".6"/><circle cx="22.500" cy="17.500" r=".8"/><circle cx="26.500" cy="17" r=".7"/><circle cx="20" cy="21" r=".7"/><circle cx="24" cy="21.500" r=".8"/><circle cx="28" cy="21" r=".6"/><circle cx="22" cy="25" r=".7"/><circle cx="26" cy="25.500" r=".7"/><circle cx="24" cy="29" r=".7"/><circle cx="28.500" cy="28" r=".6"/><circle cx="20.500" cy="28.500" r=".6"/></g></svg>
<svg style="left:1133.2px;top:598.1px" width="61.0" height="20"><text x="0" y="14" font-size="13" fill="#dedede" font-weight="normal" textLength="61.0" lengthAdjust="spacingAndGlyphs">Insert points</text></svg>
<svg style="left:1095px;top:626px" width="32" height="32" viewBox="0 0 32 32"><rect width="32" height="32" fill="#d4d6d8"/><path d="M3 3L6.500 8L11 7.500L14.500 3L14.500 10C15.500 13 14 16 12 17.500C15 19.500 16 25 15.500 31H4C3 27 4 23 6 21C4 19 2.500 16 3.500 12z" fill="#c07a2c"/><path d="M5 31C5 26 6.500 23.500 8.500 22.500C10.500 23.500 12 26.500 11.500 31z" fill="#ead0a6"/><path d="M11 21C14 22 16 26 15.500 31H12C12.500 27 12 24 11 21z" fill="#6f3d22"/><path d="M3 3L6 8L4 10.500zM14.500 3L11.500 7.500L14.500 10z" fill="#54301c"/><ellipse cx="8.500" cy="14.500" rx="3.200" ry="2.200" fill="#f3e0c2"/><circle cx="6" cy="11" r="1" fill="#2a1a10"/><circle cx="11" cy="10.800" r="1" fill="#2a1a10"/><path d="M6.500 17.500h5v2.500h-5z" fill="#6b3a20"/><g fill="#3e3e3e"><circle cx="21" cy="6" r=".8"/><circle cx="25" cy="4.500" r=".7"/><circle cx="19.500" cy="10" r=".7"/><circle cx="23.500" cy="9" r=".8"/><circle cx="27.500" cy="8" r=".7"/><circle cx="20.500" cy="14" r=".8"/><circle cx="25" cy="13" r=".7"/><circle cx="28.500" cy="12.500" r=".6"/><circle cx="22.500" cy="17.500" r=".8"/><circle cx="26.500" cy="17" r=".7"/><circle cx="20" cy="21" r=".7"/><circle cx="24" cy="21.500" r=".8"/><circle cx="28" cy="21" r=".6"/><circle cx="22" cy="25" r=".7"/><circle cx="26" cy="25.500" r=".7"/><circle cx="24" cy="29" r=".7"/><circle cx="28.500" cy="28" r=".6"/><circle cx="20.500" cy="28.500" r=".6"/></g></svg>
<svg style="left:1133.2px;top:632.1px" width="59.3" height="20"><text x="0" y="14" font-size="13" fill="#dedede" font-weight="normal" textLength="59.3" lengthAdjust="spacingAndGlyphs">Move points</text></svg>
<svg style="left:1095px;top:660px" width="32" height="32" viewBox="0 0 32 32"><rect width="32" height="32" fill="#d4d6d8"/><path d="M3 3L6.500 8L11 7.500L14.500 3L14.500 10C15.500 13 14 16 12 17.500C15 19.500 16 25 15.500 31H4C3 27 4 23 6 21C4 19 2.500 16 3.500 12z" fill="#c07a2c"/><path d="M5 31C5 26 6.500 23.500 8.500 22.500C10.500 23.500 12 26.500 11.500 31z" fill="#ead0a6"/><path d="M11 21C14 22 16 26 15.500 31H12C12.500 27 12 24 11 21z" fill="#6f3d22"/><path d="M3 3L6 8L4 10.500zM14.500 3L11.500 7.500L14.500 10z" fill="#54301c"/><ellipse cx="8.500" cy="14.500" rx="3.200" ry="2.200" fill="#f3e0c2"/><circle cx="6" cy="11" r="1" fill="#2a1a10"/><circle cx="11" cy="10.800" r="1" fill="#2a1a10"/><path d="M6.500 17.500h5v2.500h-5z" fill="#6b3a20"/><g fill="#3e3e3e"><circle cx="21" cy="6" r=".8"/><circle cx="25" cy="4.500" r=".7"/><circle cx="19.500" cy="10" r=".7"/><circle cx="23.500" cy="9" r=".8"/><circle cx="27.500" cy="8" r=".7"/><circle cx="20.500" cy="14" r=".8"/><circle cx="25" cy="13" r=".7"/><circle cx="28.500" cy="12.500" r=".6"/><circle cx="22.500" cy="17.500" r=".8"/><circle cx="26.500" cy="17" r=".7"/><circle cx="20" cy="21" r=".7"/><circle cx="24" cy="21.500" r=".8"/><circle cx="28" cy="21" r=".6"/><circle cx="22" cy="25" r=".7"/><circle cx="26" cy="25.500" r=".7"/><circle cx="24" cy="29" r=".7"/><circle cx="28.500" cy="28" r=".6"/><circle cx="20.500" cy="28.500" r=".6"/></g></svg>
<svg style="left:1133.2px;top:666.1px" width="84.0" height="20"><text x="0" y="14" font-size="13" fill="#dedede" font-weight="normal" textLength="84.0" lengthAdjust="spacingAndGlyphs">Change Segment</text></svg>
<svg style="left:1095px;top:694px" width="32" height="32" viewBox="0 0 32 32" opacity=".75"><rect width="32" height="32" fill="#d4d6d8"/><path d="M3 3L6.500 8L11 7.500L14.500 3L14.500 10C15.500 13 14 16 12 17.500C15 19.500 16 25 15.500 31H4C3 27 4 23 6 21C4 19 2.500 16 3.500 12z" fill="#c07a2c"/><path d="M5 31C5 26 6.500 23.500 8.500 22.500C10.500 23.500 12 26.500 11.500 31z" fill="#ead0a6"/><path d="M11 21C14 22 16 26 15.500 31H12C12.500 27 12 24 11 21z" fill="#6f3d22"/><path d="M3 3L6 8L4 10.500zM14.500 3L11.500 7.500L14.500 10z" fill="#54301c"/><ellipse cx="8.500" cy="14.500" rx="3.200" ry="2.200" fill="#f3e0c2"/><circle cx="6" cy="11" r="1" fill="#2a1a10"/><circle cx="11" cy="10.800" r="1" fill="#2a1a10"/><path d="M6.500 17.500h5v2.500h-5z" fill="#6b3a20"/><g fill="#3e3e3e"><circle cx="21" cy="6" r=".8"/><circle cx="25" cy="4.500" r=".7"/><circle cx="19.500" cy="10" r=".7"/><circle cx="23.500" cy="9" r=".8"/><circle cx="27.500" cy="8" r=".7"/><circle cx="20.500" cy="14" r=".8"/><circle cx="25" cy="13" r=".7"/><circle cx="28.500" cy="12.500" r=".6"/><circle cx="22.500" cy="17.500" r=".8"/><circle cx="26.500" cy="17" r=".7"/><circle cx="20" cy="21" r=".7"/><circle cx="24" cy="21.500" r=".8"/><circle cx="28" cy="21" r=".6"/><circle cx="22" cy="25" r=".7"/><circle cx="26" cy="25.500" r=".7"/><circle cx="24" cy="29" r=".7"/><circle cx="28.500" cy="28" r=".6"/><circle cx="20.500" cy="28.500" r=".6"/></g></svg>
<svg style="left:1133.2px;top:700.1px" width="69.5" height="20"><text x="0" y="14" font-size="13" fill="#f0f0f0" font-weight="normal" textLength="69.5" lengthAdjust="spacingAndGlyphs">Break subpath</text></svg>

<!--/RIGHTDOCK-->
<!--TBTEXT-->
<svg style="left:186.3px;top:104.2px" width="40.2" height="20"><text x="0" y="14" font-size="13" fill="#e0e0e0" font-weight="normal" textLength="40.2" lengthAdjust="spacingAndGlyphs">Normal</text></svg>
<svg style="left:562.0px;top:104.2px" width="77.0" height="20"><text x="0" y="14" font-size="13" fill="#f2f2f2" font-weight="normal" textLength="77.0" lengthAdjust="spacingAndGlyphs">Opacity: 100%</text></svg>
<svg style="left:745.5px;top:104.2px" width="72.5" height="20"><text x="0" y="14" font-size="13" fill="#e6e6e6" font-weight="normal" textLength="72.5" lengthAdjust="spacingAndGlyphs">Size: 10.00 px</text></svg>
<svg style="left:957.3px;top:48.7px" width="324.0" height="20"><text x="0" y="14" font-size="12" fill="#e6e6e6" font-weight="normal" textLength="324.0" lengthAdjust="spacingAndGlyphs">20260106 - Referencia do Cannella.kra (646.2 MiB) * — Krita</text></svg>
<!--/TBTEXT-->
<!--STATUS-->
<svg style="left:17px;top:735px" width="15" height="15" viewBox="0 0 15 15"><rect x=".6" y=".6" width="13.800" height="13.800" fill="none" stroke="#cfcfcf" stroke-width="1"/><circle cx="7.500" cy="7.500" r="4" fill="none" stroke="#cfcfcf" stroke-width="1" stroke-dasharray="1 1.500"/></svg>
<svg style="left:271.0px;top:734.0px" width="310.0" height="20"><text x="0" y="14" font-size="13" fill="#dedede" font-weight="normal" textLength="310.0" lengthAdjust="spacingAndGlyphs">RGB/Alpha (8-bit integer/cha…l)  sRGB-elle-V2-srgbtrc.icc</text></svg>
<div class="abs" style="left:884.5px;top:732.5px;width:139.5px;height:20.5px;background:#414141;border:1px solid #565656;border-radius:1px"></div>
<svg style="left:888.0px;top:734.0px" width="131.5" height="20"><text x="0" y="14" font-size="13" fill="#dedede" font-weight="normal" textLength="131.5" lengthAdjust="spacingAndGlyphs">7,016 x 5,150 (646.2 MiB)</text></svg>
<div class="abs" style="left:921.5px;top:750px;width:5.5px;height:1px;background:#dedede"></div>
<svg style="left:1032px;top:733.5px" width="20" height="20" viewBox="0 0 20 20"><circle cx="10" cy="10" r="10" fill="#2d2d2d"/><path d="M5.500 10H14.500" stroke="#e8e8e8" stroke-width="1"/><path d="M4.500 10L7 8.300V11.700zM15.500 10L13 8.300V11.700z" fill="#e8e8e8"/></svg>
<svg style="left:1059.0px;top:734.0px" width="30.0" height="20"><text x="0" y="14" font-size="13" fill="#dedede" font-weight="normal" textLength="30.0" lengthAdjust="spacingAndGlyphs">0.00°</text></svg>
<svg style="left:1199.0px;top:734.0px" width="32.5" height="20"><text x="0" y="14" font-size="13" fill="#dedede" font-weight="normal" textLength="32.5" lengthAdjust="spacingAndGlyphs">16.7%</text></svg>
<div class="abs" style="left:1249.5px;top:742px;width:81px;height:2.5px;background:#3a3a3a;border-radius:1px"></div>
<div class="abs" style="left:1249.5px;top:742px;width:16px;height:2.5px;background:#5a84b5;border-radius:1px"></div>
<div class="abs" style="left:1264.5px;top:736.5px;width:11px;height:12.5px;background:#555;border:1px solid #707070;border-radius:2px"></div>
<svg style="left:1336.5px;top:739px" width="15" height="12" viewBox="0 0 15 12"><rect x=".6" y=".6" width="13.800" height="8.300" fill="none" stroke="#dcdcdc" stroke-width="1.200"/><path d="M7.500 9V11.400M4 11.400H11M7.500 3V6.500M5.800 5L7.500 6.800L9.200 5" stroke="#dcdcdc" stroke-width="1.100" fill="none"/></svg>

<!--/STATUS-->
  </div>
</div>
</body>
</html>
